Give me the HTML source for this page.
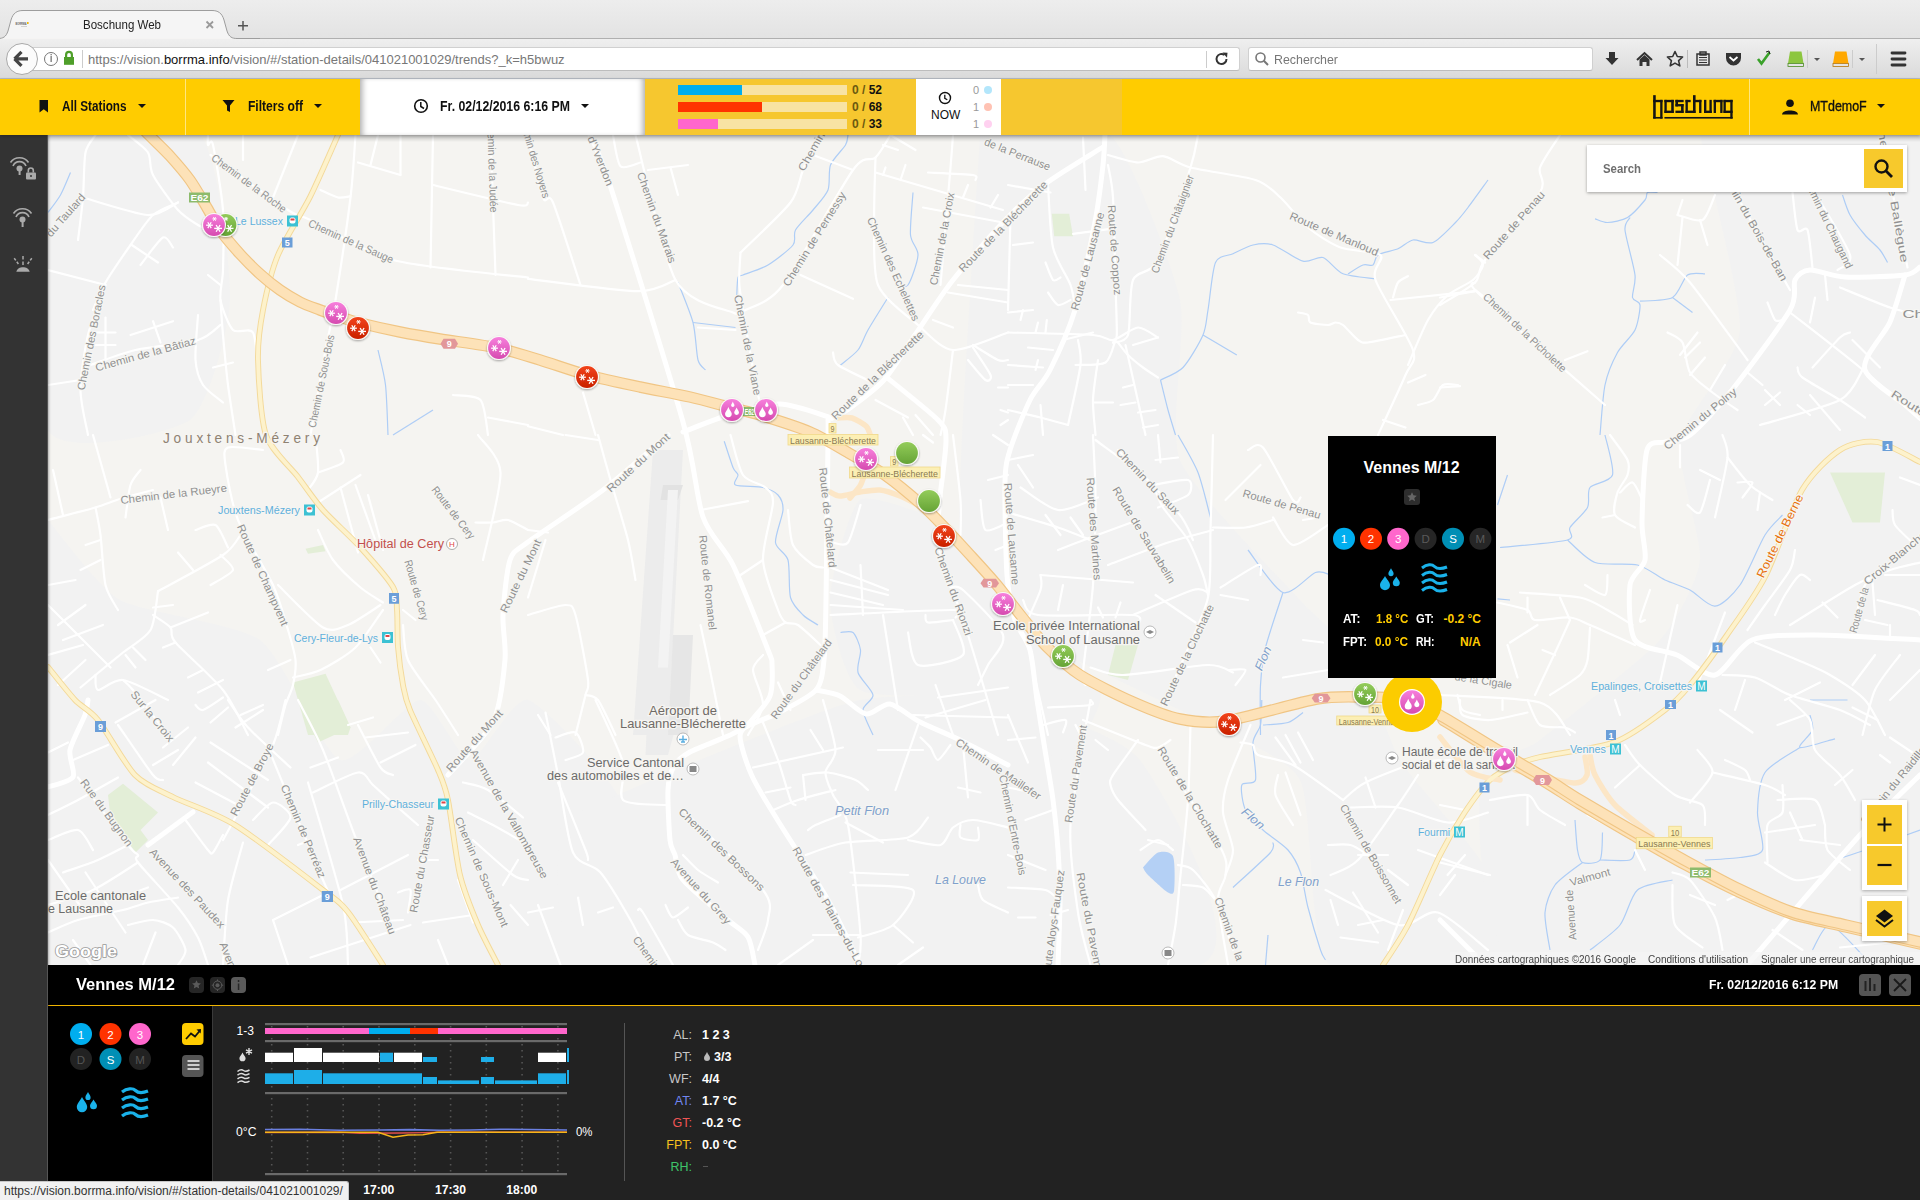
<!DOCTYPE html>
<html><head><meta charset="utf-8"><title>Boschung Web</title>
<style>
*{box-sizing:border-box}
html,body{margin:0;padding:0;width:1920px;height:1200px;overflow:hidden;font-family:"Liberation Sans",sans-serif;background:#f4f3f0;position:relative}
.a{position:absolute}
.t{white-space:nowrap}
</style></head><body>

<!-- ===== TAB STRIP ===== -->
<div class="a" style="left:0;top:0;width:1920px;height:38px;background:linear-gradient(#ededed,#e3e3e3)"></div>
<div class="a" style="left:236px;top:38px;width:1684px;height:1px;background:#b0b0b0"></div>
<svg class="a" style="left:0;top:0" width="260" height="40" viewBox="0 0 260 40">
 <path d="M-2 38.5 C3 38.5 6 37 8 31 L11 20 C13 13 17 10.5 23 10.5 L212 10.5 C218 10.5 222 13 224 20 L227 31 C229 37 232 38.5 237 38.5 L260 38.5" fill="#f5f5f5" stroke="#9d9d9d" stroke-width="1"/>
 <rect x="0" y="39" width="236" height="2" fill="#efefef"/>
 <text x="15.5" y="24.8" font-family="Liberation Sans" font-weight="bold" font-size="4.2" fill="#666" textLength="11" lengthAdjust="spacingAndGlyphs">BORRMA</text><rect x="27" y="22" width="1.6" height="2" fill="#f5b800"/><rect x="21" y="26" width="6" height="0.6" fill="#bbb"/>
 <path d="M206.5 21.5 L213 28 M213 21.5 L206.5 28" stroke="#9a9a9a" stroke-width="1.8"/>
 <path d="M243 21 V30.5 M238 25.8 H248" stroke="#555" stroke-width="1.5"/>
</svg>
<div class="a t" style="left:83px;top:18px;font-size:12px;color:#222;transform-origin:left top;transform:scaleX(0.961);">Boschung Web</div>

<!-- ===== TOOLBAR ===== -->
<div class="a" style="left:0;top:39px;width:1920px;height:39px;background:linear-gradient(#efefef,#dadada);"></div>
<div class="a" style="left:0;top:78px;width:1920px;height:1px;background:#b6bcc4"></div>
<div class="a" style="left:30px;top:47px;width:1210px;height:24px;background:#fff;border:1px solid #d0d0d0;border-bottom-color:#bdbdbd;border-radius:3px"></div>
<div class="a" style="left:1206px;top:51px;width:1px;height:17px;background:#ccc"></div>
<div class="a" style="left:1248px;top:47px;width:345px;height:24px;background:#fff;border:1px solid #d0d0d0;border-bottom-color:#bdbdbd;border-radius:3px"></div>
<!-- back button -->
<div class="a" style="left:6px;top:43px;width:32px;height:32px;border-radius:50%;background:#fbfbfb;border:1px solid #a9a9a9"></div>
<svg class="a" style="left:0;top:38px" width="100" height="40" viewBox="0 38 100 40">
 <path d="M14.5 58.8 L21.5 51.8 M14.5 58.8 L21.5 65.8 M15 58.8 H28" stroke="#444" stroke-width="3.2" fill="none" stroke-linecap="butt"/>
 <circle cx="51" cy="59" r="6.5" fill="none" stroke="#777" stroke-width="1"/>
 <rect x="50.5" y="56" width="1.3" height="6" fill="#777"/><rect x="50.5" y="54" width="1.3" height="1.3" fill="#777"/>
 <path d="M65 54.8 a4 4 0 0 1 8 0 V57 h-2.2 v-2.2 a1.8 1.8 0 0 0 -3.6 0 V57 H65 Z" fill="#4f9f2a"/>
 <rect x="64" y="57" width="10" height="7.8" fill="#4f9f2a"/>
 <rect x="82" y="50" width="1" height="18" fill="#ccc"/>
</svg>
<div class="a t" style="left:88px;top:52px;font-size:13px;color:#777;letter-spacing:0">https://vision.<span style="color:#111">borrma.info</span>/vision/#/station-details/041021001029/trends?_k=h5bwuz</div>
<!-- reload -->
<svg class="a" style="left:1212px;top:50px" width="20" height="18" viewBox="0 0 20 18">
 <path d="M14.5 9 A5 5 0 1 1 12.5 5" fill="none" stroke="#333" stroke-width="2"/>
 <path d="M10.5 2.5 L15.5 2.8 L15 7.8 Z" fill="#333"/>
</svg>
<svg class="a" style="left:1254px;top:51px" width="16" height="16" viewBox="0 0 16 16">
 <circle cx="6.5" cy="6.5" r="4.5" fill="none" stroke="#777" stroke-width="1.6"/><path d="M9.8 9.8 L14 14" stroke="#777" stroke-width="2"/>
</svg>
<div class="a t" style="left:1274px;top:52px;font-size:13px;color:#777;transform-origin:left top;transform:scaleX(0.952);">Rechercher</div>
<!-- toolbar icons -->
<svg class="a" style="left:1596px;top:44px" width="324" height="30" viewBox="1596 44 324 30">
 <path d="M1609 52 h6 v6 h3.5 l-6.5 7 l-6.5 -7 h3.5 z" fill="#333"/>
 <path d="M1637 60 l7.5 -7 l7.5 7" fill="none" stroke="#333" stroke-width="2"/><path d="M1639.5 59.5 l5 -4.5 l5 4.5 v6.5 h-3 v-4 h-4 v4 h-3 z" fill="#333"/>
 <path d="M1675 51.5 l2.3 5 l5.3 .5 l-4 3.6 l1.2 5.3 l-4.8 -2.8 l-4.8 2.8 l1.2 -5.3 l-4 -3.6 l5.3 -.5 z" fill="none" stroke="#333" stroke-width="1.6" stroke-linejoin="round"/>
 <rect x="1687" y="50" width="1" height="18" fill="#bbb"/>
 <path d="M1697 54 h12 v11 h-12 z M1700 52 h6 v3 h-6z" fill="none" stroke="#333" stroke-width="1.5"/>
 <path d="M1699 57.5 h8 M1699 60 h8 M1699 62.5 h8" stroke="#333" stroke-width="1"/>
 <path d="M1726 53 h15 v5 a7.5 7.5 0 0 1 -15 0 z" fill="#333"/><path d="M1729.5 57 l4 3.5 l4 -3.5" stroke="#fff" stroke-width="1.8" fill="none"/>
 <path d="M1758 59 l3.5 4.5 l8 -11" stroke="#3aa12a" stroke-width="2.6" fill="none"/><path d="M1766 52 l3 -1 l1 3" stroke="#222" stroke-width="1" fill="none"/>
 <path d="M1790 51.5 h11.5 l2 12 h-15.5 z" fill="#8cc63f"/><rect x="1788" y="63.5" width="15.5" height="3" fill="#e4e4e4" stroke="#4d8a22" stroke-width="0.8"/>
 <rect x="1807" y="50" width="1" height="18" fill="#ccc"/><path d="M1814 58 l3 3 l3 -3z" fill="#555"/>
 <path d="M1835 51.5 h11.5 l2 12 h-15.5 z" fill="#ffa800"/><rect x="1833" y="63.5" width="15.5" height="3" fill="#e4e4e4" stroke="#b5770c" stroke-width="0.8"/>
 <rect x="1852" y="50" width="1" height="18" fill="#ccc"/><path d="M1859 58 l3 3 l3 -3z" fill="#555"/>
 <rect x="1876" y="44" width="1" height="30" fill="#ccc"/>
 <path d="M1892 53 h13 M1892 59 h13 M1892 65 h13" stroke="#333" stroke-width="2.8" stroke-linecap="round"/>
</svg>

<!-- ===== APP HEADER ===== -->
<div class="a" style="left:0;top:79px;width:1920px;height:56px;background:#ffcc00;box-shadow:0 1px 3px rgba(0,0,0,.25);z-index:5">
 <div class="a" style="left:185px;top:0;width:1px;height:56px;background:#ffe680"></div>
 <div class="a" style="left:1749px;top:0;width:1px;height:56px;background:#ffe680"></div>
 <!-- white date section -->
 <div class="a" style="left:360px;top:0;width:285px;height:56px;background:#fff;box-shadow:inset 6px 0 6px -4px rgba(0,0,0,.35), inset -6px 0 6px -4px rgba(0,0,0,.35)"></div>
 <!-- stats -->
 <div class="a" style="left:645px;top:0;width:477px;height:56px;background:#f6c72f"></div>
 <div class="a" style="left:916px;top:0;width:85px;height:56px;background:#fff"></div>
</div>
<div class="a" style="left:0;top:79px;width:1920px;height:56px;z-index:6">
 <!-- All stations -->
 <svg class="a" style="left:39px;top:21px" width="10" height="13" viewBox="0 0 10 13"><path d="M0.5 0 h8.5 v12.5 l-4.25 -3.2 l-4.25 3.2z" fill="#111"/></svg>
 <div class="a t" style="left:62px;top:19px;font-size:14px;font-weight:bold;color:#111;transform-origin:left top;transform:scaleX(0.838);">All Stations</div>
 <svg class="a" style="left:138px;top:25px" width="10" height="6"><path d="M0 0 h8 l-4 4z" fill="#111"/></svg>
 <svg class="a" style="left:222px;top:20px" width="14" height="14" viewBox="0 0 14 14"><path d="M0.5 1 h12 l-4.5 5.5 v6.5 l-3 -1.5 v-5z" fill="#111"/></svg>
 <div class="a t" style="left:248px;top:19px;font-size:14px;font-weight:bold;color:#111;transform-origin:left top;transform:scaleX(0.862);">Filters off</div>
 <svg class="a" style="left:314px;top:25px" width="10" height="6"><path d="M0 0 h8 l-4 4z" fill="#111"/></svg>
 <!-- date -->
 <svg class="a" style="left:413px;top:19px" width="16" height="16" viewBox="0 0 16 16"><circle cx="8" cy="8" r="6.3" fill="none" stroke="#111" stroke-width="1.6"/><path d="M7.8 4 V8.5 L11 10.5" fill="none" stroke="#111" stroke-width="1.5"/></svg>
 <div class="a t" style="left:440px;top:19px;font-size:14px;font-weight:bold;color:#111;transform-origin:left top;transform:scaleX(0.879);">Fr. 02/12/2016 6:16 PM</div>
 <svg class="a" style="left:581px;top:25px" width="10" height="6"><path d="M0 0 h8 l-4 4z" fill="#111"/></svg>
 <!-- bars -->
 <div class="a" style="left:678px;top:6px;width:169px;height:10px;background:#f8e3a3"><div style="width:64px;height:10px;background:#00aeef"></div></div>
 <div class="a" style="left:678px;top:23px;width:169px;height:10px;background:#f8e3a3"><div style="width:84px;height:10px;background:#ff3300"></div></div>
 <div class="a" style="left:678px;top:40px;width:169px;height:10px;background:#f8e3a3"><div style="width:40px;height:10px;background:#ff66cc"></div></div>
 <div class="a t" style="left:852px;top:3px;font-size:12px;font-weight:bold;color:#111;line-height:16px"><span style="color:#6b5a10">0 /</span> 52</div>
 <div class="a t" style="left:852px;top:20px;font-size:12px;font-weight:bold;color:#111;line-height:16px"><span style="color:#6b5a10">0 /</span> 68</div>
 <div class="a t" style="left:852px;top:37px;font-size:12px;font-weight:bold;color:#111;line-height:16px"><span style="color:#6b5a10">0 /</span> 33</div>
 <!-- NOW -->
 <svg class="a" style="left:938px;top:12px" width="14" height="14" viewBox="0 0 14 14"><circle cx="7" cy="7" r="5.5" fill="none" stroke="#111" stroke-width="1.4"/><path d="M6.8 3.8 V7.3 L9.3 8.8" fill="none" stroke="#111" stroke-width="1.3"/></svg>
 <div class="a t" style="left:931px;top:29px;font-size:12px;color:#111">NOW</div>
 <div class="a t" style="left:973px;top:4px;font-size:11px;color:#999;line-height:14px">0</div>
 <div class="a t" style="left:973px;top:21px;font-size:11px;color:#999;line-height:14px">1</div>
 <div class="a t" style="left:973px;top:38px;font-size:11px;color:#999;line-height:14px">1</div>
 <div class="a" style="left:984px;top:7px;width:8px;height:8px;border-radius:50%;background:#b3e6fb"></div>
 <div class="a" style="left:984px;top:24px;width:8px;height:8px;border-radius:50%;background:#ffc2b3"></div>
 <div class="a" style="left:984px;top:41px;width:8px;height:8px;border-radius:50%;background:#ffd1f0"></div>
 <!-- logo -->
 <svg class="a" style="left:1648px;top:11px" width="90" height="34" viewBox="1648 90 90 34"><g fill="#141414"><rect x="1653.16" y="95.16" width="2.58" height="23.44"/><rect x="1653.16" y="99.85" width="9.38" height="2.34"/><rect x="1660.19" y="99.85" width="2.34" height="18.75"/><rect x="1653.16" y="116.96" width="9.38" height="1.64"/><rect x="1664.41" y="99.85" width="2.34" height="13.13"/><rect x="1671.21" y="99.85" width="2.58" height="13.13"/><rect x="1664.41" y="99.85" width="9.38" height="2.34"/><rect x="1664.41" y="110.63" width="9.38" height="2.34"/><rect x="1675.43" y="99.85" width="8.20" height="2.34"/><rect x="1675.43" y="99.85" width="2.58" height="6.56"/><rect x="1675.43" y="104.06" width="8.20" height="2.34"/><rect x="1681.05" y="104.06" width="2.58" height="8.91"/><rect x="1675.43" y="110.63" width="8.20" height="2.34"/><rect x="1685.51" y="99.85" width="5.16" height="2.34"/><rect x="1685.51" y="99.85" width="2.34" height="13.13"/><rect x="1685.51" y="110.63" width="10.08" height="2.34"/><rect x="1693.01" y="95.16" width="2.58" height="17.82"/><rect x="1693.01" y="99.85" width="8.44" height="2.34"/><rect x="1699.10" y="99.85" width="2.34" height="13.13"/><rect x="1704.02" y="99.85" width="2.34" height="13.13"/><rect x="1704.02" y="110.63" width="7.74" height="2.34"/><rect x="1709.42" y="99.85" width="2.34" height="13.13"/><rect x="1713.64" y="99.85" width="2.34" height="13.13"/><rect x="1713.64" y="99.85" width="8.91" height="2.34"/><rect x="1720.20" y="99.85" width="2.34" height="13.13"/><rect x="1723.48" y="99.85" width="9.14" height="2.34"/><rect x="1723.48" y="99.85" width="2.34" height="13.13"/><rect x="1723.48" y="110.63" width="9.14" height="2.34"/><rect x="1730.28" y="99.85" width="2.34" height="18.75"/><rect x="1664.41" y="116.96" width="68.21" height="1.64"/></g></svg>
 <!-- user -->
 <svg class="a" style="left:1781px;top:20px" width="18" height="16" viewBox="0 0 18 16"><circle cx="9" cy="4.2" r="3.8" fill="#111"/><path d="M1 15.5 C1 10 17 10 17 15.5 Z" fill="#111"/></svg>
 <div class="a t" style="left:1810px;top:19px;font-size:14px;color:#111;-webkit-text-stroke:0.35px #111;transform-origin:left top;transform:scaleX(0.889);">MTdemoF</div>
 <svg class="a" style="left:1877px;top:25px" width="10" height="6"><path d="M0 0 h8 l-4 4z" fill="#111"/></svg>
</div>

<!-- ===== MAP ===== -->
<div id="map" class="a" style="left:48px;top:135px;width:1872px;height:830px;background:#f4f3f0;overflow:hidden">
<svg width="1872" height="830" viewBox="48 135 1872 830" style="position:absolute;left:0;top:0">
<rect x="48" y="135" width="1872" height="830" fill="#f5f4f1"/>
<path d="M48.0 135.0 C63.2 135.0 181.8 118.5 200.0 135.0 C218.2 151.5 231.0 271.5 230.0 300.0 C229.0 328.5 208.2 407.0 190.0 420.0 C171.8 433.0 62.2 458.5 48.0 430.0 C33.8 401.5 48.0 164.5 48.0 135.0Z" fill="#f2f2f2"/>
<path d="M48.0 520.0 C55.2 528.0 98.8 588.0 120.0 600.0 C141.2 612.0 238.0 624.0 260.0 640.0 C282.0 656.0 324.0 754.0 340.0 760.0 C356.0 766.0 407.0 700.0 420.0 700.0 C433.0 700.0 459.2 760.0 470.0 760.0 C480.8 760.0 513.0 696.0 528.0 700.0 C543.0 704.0 608.8 773.5 620.0 800.0 C631.2 826.5 697.2 948.5 640.0 965.0 C582.8 981.5 107.2 1009.5 48.0 965.0 C-11.2 920.5 48.0 564.5 48.0 520.0Z" fill="#f2f2f2"/>
<path d="M560.0 820.0 C574.0 814.0 670.0 772.0 700.0 760.0 C730.0 748.0 830.0 706.0 860.0 700.0 C890.0 694.0 972.0 694.0 1000.0 700.0 C1028.0 706.0 1120.0 733.5 1140.0 760.0 C1160.0 786.5 1254.0 944.5 1200.0 965.0 C1146.0 985.5 664.0 979.5 600.0 965.0 C536.0 950.5 564.0 834.5 560.0 820.0Z" fill="#f2f2f2"/>
<path d="M980.0 135.0 C993.0 135.0 1090.0 118.5 1110.0 135.0 C1130.0 151.5 1173.0 267.5 1180.0 300.0 C1187.0 332.5 1168.0 430.0 1180.0 460.0 C1192.0 490.0 1282.0 580.0 1300.0 600.0 C1318.0 620.0 1350.0 644.0 1360.0 660.0 C1370.0 676.0 1388.0 740.0 1400.0 760.0 C1412.0 780.0 1468.0 839.5 1480.0 860.0 C1492.0 880.5 1535.0 954.5 1520.0 965.0 C1505.0 975.5 1352.0 983.5 1330.0 965.0 C1308.0 946.5 1313.0 804.5 1300.0 780.0 C1287.0 755.5 1226.0 734.0 1200.0 720.0 C1174.0 706.0 1064.0 656.0 1040.0 640.0 C1016.0 624.0 966.0 610.5 960.0 560.0 C954.0 509.5 978.0 177.5 980.0 135.0Z" fill="#f2f2f2"/>
<path d="M1700.0 135.0 C1722.0 135.0 1898.0 52.0 1920.0 135.0 C1942.0 218.0 1960.0 882.0 1920.0 965.0 C1880.0 1048.0 1564.0 983.5 1520.0 965.0 C1476.0 946.5 1478.0 802.5 1480.0 780.0 C1482.0 757.5 1522.0 754.0 1540.0 740.0 C1558.0 726.0 1644.0 658.0 1660.0 640.0 C1676.0 622.0 1698.0 580.0 1700.0 560.0 C1702.0 540.0 1676.0 463.0 1680.0 440.0 C1684.0 417.0 1738.0 360.5 1740.0 330.0 C1742.0 299.5 1704.0 154.5 1700.0 135.0Z" fill="#f2f2f2"/>
<path d="M940.0 520.0 C946.0 526.0 984.0 563.0 1000.0 580.0 C1016.0 597.0 1094.0 672.0 1100.0 690.0 C1106.0 708.0 1071.0 759.0 1060.0 760.0 C1049.0 761.0 1010.0 707.0 990.0 700.0 C970.0 693.0 876.0 700.0 860.0 690.0 C844.0 680.0 830.0 619.0 830.0 600.0 C830.0 581.0 849.0 508.0 860.0 500.0 C871.0 492.0 932.0 518.0 940.0 520.0Z" fill="#f2f2f2"/>
<path d="M293.0 682.5 L325.5 673.8 L350.5 727.5 L348.0 735.0 L308.0 735.0Z" fill="#e3eed7"/>
<path d="M298.0 700.0 L338.0 700.0 L350.5 727.5 L318.0 742.5 L305.5 717.5Z" fill="#e3eed7"/>
<path d="M108.0 795.0 L123.0 783.8 L158.0 812.5 L140.5 830.0 L148.0 840.0 L135.5 852.5 L110.5 817.5Z" fill="#e3eed7"/>
<path d="M1108.0 675.0 L1115.5 645.0 L1138.0 645.0 L1128.0 680.0Z" fill="#e3eed7"/>
<path d="M1830.0 472.5 L1885.0 472.5 L1880.0 522.5 L1852.5 522.5Z" fill="#e3eed7"/>
<path d="M305.5 548.8 L323.0 545.0 L325.5 551.2 L308.0 553.8Z" fill="#e3eed7"/>
<path d="M1051.8 213.8 L1069.2 213.8 L1073.0 236.2 L1054.2 236.2Z" fill="#e3eed7"/>
<path d="M653.0 450.0 L683.0 450.0 L668.0 735.0 L633.0 735.0Z" fill="#ececec"/>
<path d="M648.0 700.0 L683.0 700.0 L668.0 755.0 L645.5 755.0Z" fill="#ececec"/>
<path d="M663.0 485.0 L683.0 485.0 L678.0 500.0 L660.5 500.0Z" fill="#e2e2e2"/>
<path d="M668.0 490.0 L678.0 490.0 L668.0 667.5 L658.0 667.5Z" fill="#f3f3f3"/>
<path d="M673.0 635.0 L693.0 635.0 L688.0 735.0 L668.0 735.0Z" fill="#e6e6e6"/>
<path d="M1143.0 867.5 C1145.0 865.5 1154.0 854.0 1158.0 852.5 C1162.0 851.0 1170.8 851.2 1173.0 856.2 C1175.2 861.2 1174.9 885.2 1174.2 890.0 C1173.6 894.8 1171.5 894.5 1168.0 892.5 C1164.5 890.5 1151.3 878.3 1148.0 875.0 C1144.7 871.7 1143.7 868.5 1143.0 867.5Z" fill="#b4d0f5"/>
<path d="M70.5 172.5 C69.2 175.5 63.5 189.7 60.5 195.0 C57.5 200.3 49.7 210.2 48.0 212.5" fill="none" stroke="#aecdf6" stroke-width="1.2"/>
<path d="M378.0 350.0 C379.0 354.7 384.2 373.7 385.5 385.0 C386.8 396.3 387.7 428.3 388.0 435.0" fill="none" stroke="#aecdf6" stroke-width="1.2"/>
<path d="M393.0 435.0 L433.0 410.0" fill="none" stroke="#aecdf6" stroke-width="1.2"/>
<path d="M848.0 135.0 C847.7 136.3 847.8 141.0 845.5 145.0 C843.2 149.0 832.8 159.0 830.5 165.0 C828.2 171.0 830.3 184.0 828.0 190.0 C825.7 196.0 817.3 204.7 813.0 210.0 C808.7 215.3 798.2 225.3 795.5 230.0 C792.8 234.7 796.7 240.3 793.0 245.0 C789.3 249.7 774.7 261.0 768.0 265.0 C761.3 269.0 747.0 273.3 743.0 275.0 C739.0 276.7 738.8 274.8 738.0 277.5 C737.2 280.2 736.9 292.7 736.8 295.0" fill="none" stroke="#aecdf6" stroke-width="1.2"/>
<path d="M678.0 282.5 C680.0 287.8 690.3 312.2 693.0 322.5 C695.7 332.8 696.3 353.7 698.0 360.0 C699.7 366.3 704.5 368.7 705.5 370.0" fill="none" stroke="#aecdf6" stroke-width="1.2"/>
<path d="M693.0 322.5 L735.5 327.5" fill="none" stroke="#aecdf6" stroke-width="1.2"/>
<path d="M913.0 192.5 C912.7 198.2 909.8 226.7 910.5 235.0 C911.2 243.3 918.3 248.3 918.0 255.0 C917.7 261.7 911.0 281.0 908.0 285.0 C905.0 289.0 897.2 285.0 895.5 285.0" fill="none" stroke="#aecdf6" stroke-width="1.2"/>
<path d="M888.0 297.5 C885.3 301.8 872.0 323.0 868.0 330.0 C864.0 337.0 861.7 345.3 858.0 350.0 C854.3 354.7 842.8 363.0 840.5 365.0" fill="none" stroke="#aecdf6" stroke-width="1.2"/>
<path d="M1160.5 380.0 C1163.5 378.3 1177.3 373.5 1183.0 367.5 C1188.7 361.5 1199.7 342.7 1203.0 335.0 C1206.3 327.3 1206.3 319.7 1208.0 310.0 C1209.7 300.3 1212.2 270.0 1215.5 262.5 C1218.8 255.0 1228.0 256.1 1233.0 253.8 C1238.0 251.4 1247.7 246.2 1253.0 245.0 C1258.3 243.8 1266.3 242.8 1273.0 245.0 C1279.7 247.2 1296.3 259.6 1303.0 261.2 C1309.7 262.9 1317.7 255.8 1323.0 257.5 C1328.3 259.2 1336.0 270.9 1343.0 273.8 C1350.0 276.6 1371.2 278.1 1375.5 278.8" fill="none" stroke="#aecdf6" stroke-width="1.2"/>
<path d="M1203.0 335.0 L1236.8 355.0" fill="none" stroke="#aecdf6" stroke-width="1.2"/>
<path d="M1160.5 380.0 C1161.5 384.0 1166.0 402.7 1168.0 410.0 C1170.0 417.3 1174.5 431.7 1175.5 435.0" fill="none" stroke="#aecdf6" stroke-width="1.2"/>
<path d="M1348.0 273.8 C1350.0 272.6 1359.7 266.2 1363.0 265.0 C1366.3 263.8 1371.0 266.3 1373.0 265.0 C1375.0 263.7 1374.7 257.2 1378.0 255.0 C1381.3 252.8 1393.3 250.8 1398.0 248.8 C1402.7 246.8 1408.3 240.8 1413.0 240.0 C1417.7 239.2 1427.3 244.8 1433.0 242.5 C1438.7 240.2 1450.8 227.2 1455.5 222.5 C1460.2 217.8 1463.7 213.2 1468.0 207.5 C1472.3 201.8 1485.3 183.7 1488.0 180.0" fill="none" stroke="#aecdf6" stroke-width="1.2"/>
<path d="M1595.0 218.8 C1596.7 219.2 1603.2 222.7 1607.5 222.5 C1611.8 222.3 1622.5 220.5 1627.5 217.5 C1632.5 214.5 1642.3 203.3 1645.0 200.0 C1647.7 196.7 1645.8 193.5 1647.5 192.5 C1649.2 191.5 1656.2 192.5 1657.5 192.5" fill="none" stroke="#aecdf6" stroke-width="1.2"/>
<path d="M1630.0 217.5 C1629.3 219.2 1624.3 222.3 1625.0 230.0 C1625.7 237.7 1634.0 266.0 1635.0 275.0 C1636.0 284.0 1631.8 293.5 1632.5 297.5 C1633.2 301.5 1639.7 300.7 1640.0 305.0 C1640.3 309.3 1638.0 323.7 1635.0 330.0 C1632.0 336.3 1621.5 345.2 1617.5 352.5 C1613.5 359.8 1607.3 374.0 1605.0 385.0 C1602.7 396.0 1600.7 428.3 1600.0 435.0" fill="none" stroke="#aecdf6" stroke-width="1.2"/>
<path d="M1640.0 301.2 C1644.3 300.8 1666.2 301.0 1672.5 297.5 C1678.8 294.0 1683.2 278.2 1687.5 275.0 C1691.8 271.8 1702.7 273.9 1705.0 273.8" fill="none" stroke="#aecdf6" stroke-width="1.2"/>
<path d="M1672.5 297.5 L1692.5 312.5" fill="none" stroke="#aecdf6" stroke-width="1.2"/>
<path d="M1842.5 195.0 C1843.5 197.7 1847.0 209.7 1850.0 215.0 C1853.0 220.3 1861.0 230.3 1865.0 235.0 C1869.0 239.7 1877.0 246.3 1880.0 250.0 C1883.0 253.7 1886.5 260.8 1887.5 262.5" fill="none" stroke="#aecdf6" stroke-width="1.2"/>
<path d="M724.2 441.2 C725.4 444.8 731.2 463.0 733.0 467.5 C734.8 472.0 737.7 472.7 738.0 475.0 C738.3 477.3 732.2 483.3 735.5 485.0 C738.8 486.7 757.3 486.2 763.0 487.5 C768.7 488.8 775.3 492.0 778.0 495.0 C780.7 498.0 783.3 503.7 783.0 510.0 C782.7 516.3 774.8 535.8 775.5 542.5 C776.2 549.2 786.0 552.7 788.0 560.0 C790.0 567.3 788.5 590.2 790.5 597.5 C792.5 604.8 799.3 611.3 803.0 615.0 C806.7 618.7 816.0 623.7 818.0 625.0" fill="none" stroke="#aecdf6" stroke-width="1.2"/>
<path d="M840.5 632.5 C842.2 632.5 850.3 630.2 853.0 632.5 C855.7 634.8 859.8 644.7 860.5 650.0 C861.2 655.3 856.3 666.5 858.0 672.5 C859.7 678.5 872.3 690.0 873.0 695.0 C873.7 700.0 863.0 704.7 863.0 710.0 C863.0 715.3 871.7 731.7 873.0 735.0" fill="none" stroke="#aecdf6" stroke-width="1.2"/>
<path d="M1178.0 435.0 C1180.7 440.0 1193.7 461.5 1198.0 472.5 C1202.3 483.5 1208.8 511.5 1210.5 517.5" fill="none" stroke="#aecdf6" stroke-width="1.2"/>
<path d="M1248.0 550.0 C1252.7 555.7 1274.0 589.5 1283.0 592.5 C1292.0 595.5 1309.2 574.8 1315.5 572.5 C1321.8 570.2 1328.5 574.7 1330.5 575.0" fill="none" stroke="#aecdf6" stroke-width="1.2"/>
<path d="M1283.0 592.5 C1280.7 599.8 1268.5 635.2 1265.5 647.5 C1262.5 659.8 1261.2 673.3 1260.5 685.0 C1259.8 696.7 1260.5 728.3 1260.5 735.0" fill="none" stroke="#aecdf6" stroke-width="1.2"/>
<path d="M1507.5 475.0 L1497.5 505.0" fill="none" stroke="#aecdf6" stroke-width="1.2"/>
<path d="M1605.0 435.0 C1606.0 440.3 1614.5 468.0 1612.5 475.0 C1610.5 482.0 1593.3 483.2 1590.0 487.5 C1586.7 491.8 1590.2 502.2 1587.5 507.5 C1584.8 512.8 1572.7 523.2 1570.0 527.5 C1567.3 531.8 1576.8 537.3 1567.5 540.0 C1558.2 542.7 1509.0 546.5 1500.0 547.5" fill="none" stroke="#aecdf6" stroke-width="1.2"/>
<path d="M1567.5 540.0 C1571.2 543.0 1585.7 559.2 1595.0 562.5 C1604.3 565.8 1628.2 562.7 1637.5 565.0 C1646.8 567.3 1658.0 576.7 1665.0 580.0 C1672.0 583.3 1683.3 586.5 1690.0 590.0 C1696.7 593.5 1708.3 606.9 1715.0 606.2 C1721.7 605.6 1733.3 594.5 1740.0 585.0 C1746.7 575.5 1759.3 544.3 1765.0 535.0 C1770.7 525.7 1780.2 517.7 1782.5 515.0" fill="none" stroke="#aecdf6" stroke-width="1.2"/>
<path d="M1497.5 598.8 L1510.0 600.0" fill="none" stroke="#aecdf6" stroke-width="1.2"/>
<path d="M1261.8 700.0 C1261.6 703.3 1261.7 719.3 1260.5 725.0 C1259.3 730.7 1253.7 735.2 1253.0 742.5 C1252.3 749.8 1257.0 774.3 1255.5 780.0 C1254.0 785.7 1243.1 781.0 1241.8 785.0 C1240.4 789.0 1242.7 804.0 1245.5 810.0 C1248.3 816.0 1257.3 824.7 1263.0 830.0 C1268.7 835.3 1283.0 844.3 1288.0 850.0 C1293.0 855.7 1297.8 864.8 1300.5 872.5 C1303.2 880.2 1305.3 897.2 1308.0 907.5 C1310.7 917.8 1318.2 943.0 1320.5 950.0 C1322.8 957.0 1324.8 958.7 1325.5 960.0" fill="none" stroke="#aecdf6" stroke-width="1.2"/>
<path d="M1273.0 842.5 C1272.7 843.8 1275.8 846.5 1270.5 852.5 C1265.2 858.5 1238.0 882.8 1233.0 887.5" fill="none" stroke="#aecdf6" stroke-width="1.2"/>
<path d="M1263.0 725.0 C1266.3 724.7 1282.7 724.2 1288.0 722.5 C1293.3 720.8 1301.0 713.8 1303.0 712.5" fill="none" stroke="#aecdf6" stroke-width="1.2"/>
<path d="M1268.0 935.0 L1265.5 965.0" fill="none" stroke="#aecdf6" stroke-width="1.2"/>
<path d="M1575.0 820.0 C1575.3 824.0 1576.5 844.3 1577.5 850.0 C1578.5 855.7 1579.5 861.2 1582.5 862.5 C1585.5 863.8 1597.3 864.0 1600.0 860.0 C1602.7 856.0 1602.2 836.2 1602.5 832.5" fill="none" stroke="#aecdf6" stroke-width="1.2"/>
<path d="M1582.5 862.5 C1578.8 865.5 1560.0 878.3 1555.0 885.0 C1550.0 891.7 1545.7 903.8 1545.0 912.5 C1544.3 921.2 1549.3 945.0 1550.0 950.0" fill="none" stroke="#aecdf6" stroke-width="1.2"/>
<path d="M1600.0 860.0 C1604.0 860.0 1625.3 861.3 1630.0 860.0 C1634.7 858.7 1634.3 851.3 1635.0 850.0" fill="none" stroke="#aecdf6" stroke-width="1.2"/>
<path d="M1590.0 950.0 C1594.0 946.7 1613.7 933.0 1620.0 925.0 C1626.3 917.0 1630.5 896.0 1637.5 890.0 C1644.5 884.0 1667.8 881.3 1672.5 880.0" fill="none" stroke="#aecdf6" stroke-width="1.2"/>
<path d="M1810.0 700.0 C1812.0 700.0 1820.0 700.0 1825.0 700.0 C1830.0 700.0 1844.5 700.0 1847.5 700.0" fill="none" stroke="#aecdf6" stroke-width="1.2"/>
<path d="M1810.0 715.0 C1810.3 717.0 1813.8 725.7 1812.5 730.0 C1811.2 734.3 1797.0 746.3 1800.0 747.5 C1803.0 748.7 1830.3 739.9 1835.0 738.8" fill="none" stroke="#aecdf6" stroke-width="1.2"/>
<path d="M1800.0 747.5 C1795.3 750.8 1770.7 763.8 1765.0 772.5 C1759.3 781.2 1757.8 802.2 1757.5 812.5 C1757.2 822.8 1764.8 844.0 1762.5 850.0 C1760.2 856.0 1747.7 856.2 1740.0 857.5 C1732.3 858.8 1709.7 859.7 1705.0 860.0" fill="none" stroke="#aecdf6" stroke-width="1.2"/>
<path d="M1842.5 857.5 C1845.5 856.5 1854.7 853.7 1865.0 850.0 C1875.3 846.3 1912.7 832.7 1920.0 830.0" fill="none" stroke="#aecdf6" stroke-width="1.2"/>
<path d="M1812.5 950.0 C1814.8 946.7 1823.3 924.3 1830.0 925.0 C1836.7 925.7 1858.2 951.0 1862.5 955.0" fill="none" stroke="#aecdf6" stroke-width="1.2"/>
<path d="M95.5 135.0 C94.2 137.3 87.2 144.2 85.5 152.5 C83.8 160.8 84.0 185.8 83.0 197.5 C82.0 209.2 78.7 234.3 78.0 240.0" fill="none" stroke="#ffffff" stroke-width="2.2" stroke-linecap="round" stroke-linejoin="round"/>
<path d="M83.0 197.5 C91.7 199.8 135.3 214.3 148.0 215.0 C160.7 215.7 174.0 204.2 178.0 202.5" fill="none" stroke="#ffffff" stroke-width="2.2" stroke-linecap="round" stroke-linejoin="round"/>
<path d="M128.0 135.0 C130.7 137.3 144.7 147.2 148.0 152.5 C151.3 157.8 149.0 167.3 153.0 175.0 C157.0 182.7 172.0 203.3 178.0 210.0 C184.0 216.7 193.7 222.3 198.0 225.0 C202.3 227.7 208.8 229.3 210.5 230.0" fill="none" stroke="#ffffff" stroke-width="2.2" stroke-linecap="round" stroke-linejoin="round"/>
<path d="M48.0 270.0 L105.5 285.0" fill="none" stroke="#ffffff" stroke-width="2.2" stroke-linecap="round" stroke-linejoin="round"/>
<path d="M178.0 202.5 C174.7 204.2 159.3 209.3 153.0 215.0 C146.7 220.7 136.8 236.0 130.5 245.0 C124.2 254.0 110.5 273.8 105.5 282.5 C100.5 291.2 94.7 306.3 93.0 310.0" fill="none" stroke="#ffffff" stroke-width="2.2" stroke-linecap="round" stroke-linejoin="round"/>
<path d="M105.5 285.0 C103.2 291.7 91.3 321.0 88.0 335.0 C84.7 349.0 80.5 376.7 80.5 390.0 C80.5 403.3 87.0 429.0 88.0 435.0" fill="none" stroke="#ffffff" stroke-width="2.2" stroke-linecap="round" stroke-linejoin="round"/>
<path d="M131.8 245.0 L158.0 262.5" fill="none" stroke="#ffffff" stroke-width="2.2" stroke-linecap="round" stroke-linejoin="round"/>
<path d="M140.5 265.0 C143.5 261.3 158.7 239.8 163.0 237.5 C167.3 235.2 171.7 246.2 173.0 247.5" fill="none" stroke="#ffffff" stroke-width="2.2" stroke-linecap="round" stroke-linejoin="round"/>
<path d="M208.0 135.0 C208.0 136.3 207.3 143.7 208.0 145.0 C208.7 146.3 211.0 136.3 213.0 145.0 C215.0 153.7 221.7 193.3 223.0 210.0 C224.3 226.7 223.3 258.0 223.0 270.0 C222.7 282.0 219.2 292.0 220.5 300.0 C221.8 308.0 228.7 325.7 233.0 330.0 C237.3 334.3 249.7 326.8 253.0 332.5 C256.3 338.2 257.3 367.2 258.0 372.5" fill="none" stroke="#ffffff" stroke-width="2.2" stroke-linecap="round" stroke-linejoin="round"/>
<path d="M220.5 300.0 C220.8 304.7 222.0 323.7 223.0 335.0 C224.0 346.3 226.3 371.7 228.0 385.0 C229.7 398.3 234.5 428.3 235.5 435.0" fill="none" stroke="#ffffff" stroke-width="2.2" stroke-linecap="round" stroke-linejoin="round"/>
<path d="M198.0 315.0 C197.7 321.0 194.8 350.7 195.5 360.0 C196.2 369.3 199.3 379.3 203.0 385.0 C206.7 390.7 220.3 400.2 223.0 402.5" fill="none" stroke="#ffffff" stroke-width="2.2" stroke-linecap="round" stroke-linejoin="round"/>
<path d="M90.5 365.0 C96.5 363.0 121.2 353.3 135.5 350.0 C149.8 346.7 186.7 343.3 198.0 340.0 C209.3 336.7 217.5 327.0 220.5 325.0" fill="none" stroke="#ffffff" stroke-width="2.2" stroke-linecap="round" stroke-linejoin="round"/>
<path d="M130.5 335.0 L173.0 321.2" fill="none" stroke="#ffffff" stroke-width="2.2" stroke-linecap="round" stroke-linejoin="round"/>
<path d="M153.0 321.2 L160.5 342.5" fill="none" stroke="#ffffff" stroke-width="2.2" stroke-linecap="round" stroke-linejoin="round"/>
<path d="M93.0 332.5 L115.5 332.5" fill="none" stroke="#ffffff" stroke-width="2.2" stroke-linecap="round" stroke-linejoin="round"/>
<path d="M93.0 345.0 L115.5 345.0" fill="none" stroke="#ffffff" stroke-width="2.2" stroke-linecap="round" stroke-linejoin="round"/>
<path d="M105.5 317.5 L105.5 360.0" fill="none" stroke="#ffffff" stroke-width="2.2" stroke-linecap="round" stroke-linejoin="round"/>
<path d="M48.0 385.0 L80.5 380.0" fill="none" stroke="#ffffff" stroke-width="2.2" stroke-linecap="round" stroke-linejoin="round"/>
<path d="M298.0 135.0 L273.0 197.5" fill="none" stroke="#ffffff" stroke-width="2.2" stroke-linecap="round" stroke-linejoin="round"/>
<path d="M210.5 155.0 C220.8 162.3 274.7 201.3 288.0 210.0 C301.3 218.7 296.5 213.3 310.5 220.0 C324.5 226.7 364.0 252.3 393.0 260.0 C422.0 267.7 510.0 275.2 528.0 277.5" fill="none" stroke="#ffffff" stroke-width="2.2" stroke-linecap="round" stroke-linejoin="round"/>
<path d="M355.5 135.0 C354.8 143.3 353.2 175.5 350.5 197.5 C347.8 219.5 338.8 279.7 335.5 300.0 C332.2 320.3 328.8 332.0 325.5 350.0 C322.2 368.0 312.5 423.7 310.5 435.0" fill="none" stroke="#ffffff" stroke-width="2.2" stroke-linecap="round" stroke-linejoin="round"/>
<path d="M358.0 162.5 L400.5 175.0" fill="none" stroke="#ffffff" stroke-width="2.2" stroke-linecap="round" stroke-linejoin="round"/>
<path d="M400.5 135.0 L400.5 175.0" fill="none" stroke="#ffffff" stroke-width="2.2" stroke-linecap="round" stroke-linejoin="round"/>
<path d="M378.0 135.0 L370.5 165.0" fill="none" stroke="#ffffff" stroke-width="2.2" stroke-linecap="round" stroke-linejoin="round"/>
<path d="M320.5 190.0 C322.8 191.0 334.0 196.7 338.0 197.5 C342.0 198.3 348.8 196.4 350.5 196.2" fill="none" stroke="#ffffff" stroke-width="2.2" stroke-linecap="round" stroke-linejoin="round"/>
<path d="M433.0 135.0 L430.5 267.5" fill="none" stroke="#ffffff" stroke-width="2.2" stroke-linecap="round" stroke-linejoin="round"/>
<path d="M433.0 185.0 C444.3 187.7 505.3 202.7 518.0 205.0 C530.7 207.3 526.7 202.8 528.0 202.5" fill="none" stroke="#ffffff" stroke-width="2.2" stroke-linecap="round" stroke-linejoin="round"/>
<path d="M490.5 135.0 L495.5 275.0" fill="none" stroke="#ffffff" stroke-width="2.2" stroke-linecap="round" stroke-linejoin="round"/>
<path d="M243.0 135.0 L243.0 160.0" fill="none" stroke="#ffffff" stroke-width="2.2" stroke-linecap="round" stroke-linejoin="round"/>
<path d="M453.0 395.0 C456.7 395.7 475.8 394.7 480.5 400.0 C485.2 405.3 487.0 430.3 488.0 435.0" fill="none" stroke="#ffffff" stroke-width="2.2" stroke-linecap="round" stroke-linejoin="round"/>
<path d="M488.0 417.5 L528.0 425.0" fill="none" stroke="#ffffff" stroke-width="2.2" stroke-linecap="round" stroke-linejoin="round"/>
<path d="M208.0 275.0 L220.5 285.0" fill="none" stroke="#ffffff" stroke-width="2.2" stroke-linecap="round" stroke-linejoin="round"/>
<path d="M213.0 367.5 L233.0 362.5" fill="none" stroke="#ffffff" stroke-width="2.2" stroke-linecap="round" stroke-linejoin="round"/>
<path d="M528.0 135.0 C530.0 143.3 539.7 188.5 543.0 197.5 C546.3 206.5 548.0 190.8 553.0 202.5 C558.0 214.2 576.8 274.0 580.5 285.0" fill="none" stroke="#ffffff" stroke-width="2.2" stroke-linecap="round" stroke-linejoin="round"/>
<path d="M528.0 278.8 C542.7 280.4 618.3 291.1 638.0 291.2 C657.7 291.4 670.5 281.5 675.5 280.0" fill="none" stroke="#ffffff" stroke-width="2.2" stroke-linecap="round" stroke-linejoin="round"/>
<path d="M613.0 135.0 C614.0 139.2 616.8 162.6 620.5 166.2 C624.2 169.9 637.8 163.0 640.5 162.5" fill="none" stroke="#ffffff" stroke-width="2.2" stroke-linecap="round" stroke-linejoin="round"/>
<path d="M635.5 135.0 C640.8 154.3 662.5 256.3 675.5 280.0 C688.5 303.7 723.7 308.5 733.0 312.5 C742.3 316.5 738.8 313.7 745.5 310.0 C752.2 306.3 768.7 303.7 783.0 285.0 C797.3 266.3 840.7 187.0 853.0 170.0 C865.3 153.0 870.5 162.2 875.5 157.5 C880.5 152.8 888.5 138.0 890.5 135.0" fill="none" stroke="#ffffff" stroke-width="2.2" stroke-linecap="round" stroke-linejoin="round"/>
<path d="M740.5 252.5 C747.2 245.8 782.2 213.5 790.5 202.5 C798.8 191.5 799.3 179.0 803.0 170.0 C806.7 161.0 816.0 139.7 818.0 135.0" fill="none" stroke="#ffffff" stroke-width="2.2" stroke-linecap="round" stroke-linejoin="round"/>
<path d="M648.0 170.0 L688.0 165.0" fill="none" stroke="#ffffff" stroke-width="2.2" stroke-linecap="round" stroke-linejoin="round"/>
<path d="M670.5 167.5 L678.0 195.0" fill="none" stroke="#ffffff" stroke-width="2.2" stroke-linecap="round" stroke-linejoin="round"/>
<path d="M740.5 252.5 C740.3 256.5 738.9 274.8 739.2 282.5 C739.6 290.2 740.5 295.0 743.0 310.0 C745.5 325.0 755.0 381.7 758.0 395.0 C761.0 408.3 764.5 408.0 765.5 410.0" fill="none" stroke="#ffffff" stroke-width="2.2" stroke-linecap="round" stroke-linejoin="round"/>
<path d="M800.5 275.0 L853.0 298.8" fill="none" stroke="#ffffff" stroke-width="2.2" stroke-linecap="round" stroke-linejoin="round"/>
<path d="M698.0 327.5 L735.5 330.0" fill="none" stroke="#ffffff" stroke-width="2.2" stroke-linecap="round" stroke-linejoin="round"/>
<path d="M813.0 155.0 L853.0 170.0" fill="none" stroke="#ffffff" stroke-width="2.2" stroke-linecap="round" stroke-linejoin="round"/>
<path d="M875.5 157.5 C875.3 165.5 873.9 200.5 874.2 217.5 C874.6 234.5 872.2 270.7 878.0 285.0 C883.8 299.3 908.0 316.3 918.0 325.0 C928.0 333.7 941.0 349.0 953.0 350.0 C965.0 351.0 1000.7 334.8 1008.0 332.5" fill="none" stroke="#ffffff" stroke-width="2.2" stroke-linecap="round" stroke-linejoin="round"/>
<path d="M875.5 172.5 L1003.0 210.0" fill="none" stroke="#ffffff" stroke-width="2.2" stroke-linecap="round" stroke-linejoin="round"/>
<path d="M885.5 167.5 L883.0 175.0" fill="none" stroke="#ffffff" stroke-width="2.2" stroke-linecap="round" stroke-linejoin="round"/>
<path d="M905.5 165.0 L900.5 180.0" fill="none" stroke="#ffffff" stroke-width="2.2" stroke-linecap="round" stroke-linejoin="round"/>
<path d="M928.0 172.5 C934.0 172.8 966.7 174.0 973.0 175.0 C979.3 176.0 975.2 179.3 975.5 180.0" fill="none" stroke="#ffffff" stroke-width="2.2" stroke-linecap="round" stroke-linejoin="round"/>
<path d="M968.0 185.0 L963.0 197.5" fill="none" stroke="#ffffff" stroke-width="2.2" stroke-linecap="round" stroke-linejoin="round"/>
<path d="M998.0 195.0 L990.5 207.5" fill="none" stroke="#ffffff" stroke-width="2.2" stroke-linecap="round" stroke-linejoin="round"/>
<path d="M953.0 135.0 C952.7 139.3 952.2 147.5 950.5 167.5 C948.8 187.5 941.8 269.3 940.5 285.0" fill="none" stroke="#ffffff" stroke-width="2.2" stroke-linecap="round" stroke-linejoin="round"/>
<path d="M923.0 207.5 L1003.0 222.5" fill="none" stroke="#ffffff" stroke-width="2.2" stroke-linecap="round" stroke-linejoin="round"/>
<path d="M948.0 292.5 L1008.0 302.5" fill="none" stroke="#ffffff" stroke-width="2.2" stroke-linecap="round" stroke-linejoin="round"/>
<path d="M958.0 285.0 L1008.0 290.0" fill="none" stroke="#ffffff" stroke-width="2.2" stroke-linecap="round" stroke-linejoin="round"/>
<path d="M933.0 320.0 L953.0 327.5" fill="none" stroke="#ffffff" stroke-width="2.2" stroke-linecap="round" stroke-linejoin="round"/>
<path d="M953.0 350.0 C952.0 358.0 947.2 398.7 945.5 410.0 C943.8 421.3 941.2 431.7 940.5 435.0" fill="none" stroke="#ffffff" stroke-width="2.2" stroke-linecap="round" stroke-linejoin="round"/>
<path d="M973.0 345.0 C976.3 347.0 993.3 358.0 998.0 360.0 C1002.7 362.0 1006.7 360.0 1008.0 360.0" fill="none" stroke="#ffffff" stroke-width="2.2" stroke-linecap="round" stroke-linejoin="round"/>
<path d="M973.0 347.5 C975.3 351.2 988.8 370.7 990.5 375.0 C992.2 379.3 988.5 382.0 985.5 380.0 C982.5 378.0 970.3 362.7 968.0 360.0" fill="none" stroke="#ffffff" stroke-width="2.2" stroke-linecap="round" stroke-linejoin="round"/>
<path d="M833.0 352.5 C833.7 354.2 832.7 361.0 838.0 365.0 C843.3 369.0 868.3 380.2 873.0 382.5" fill="none" stroke="#ffffff" stroke-width="2.2" stroke-linecap="round" stroke-linejoin="round"/>
<path d="M875.5 400.0 L908.0 417.5" fill="none" stroke="#ffffff" stroke-width="2.2" stroke-linecap="round" stroke-linejoin="round"/>
<path d="M583.0 392.5 L595.5 435.0" fill="none" stroke="#ffffff" stroke-width="2.2" stroke-linecap="round" stroke-linejoin="round"/>
<path d="M528.0 426.2 L563.0 435.0" fill="none" stroke="#ffffff" stroke-width="2.2" stroke-linecap="round" stroke-linejoin="round"/>
<path d="M903.0 417.5 L913.0 435.0" fill="none" stroke="#ffffff" stroke-width="2.2" stroke-linecap="round" stroke-linejoin="round"/>
<path d="M915.5 415.0 L933.0 435.0" fill="none" stroke="#ffffff" stroke-width="2.2" stroke-linecap="round" stroke-linejoin="round"/>
<path d="M883.0 145.0 L898.0 150.0" fill="none" stroke="#ffffff" stroke-width="2.2" stroke-linecap="round" stroke-linejoin="round"/>
<path d="M890.5 135.0 L915.5 150.0" fill="none" stroke="#ffffff" stroke-width="2.2" stroke-linecap="round" stroke-linejoin="round"/>
<path d="M1000.5 410.0 L1008.0 412.5" fill="none" stroke="#ffffff" stroke-width="2.2" stroke-linecap="round" stroke-linejoin="round"/>
<path d="M998.0 387.5 L1008.0 387.5" fill="none" stroke="#ffffff" stroke-width="2.2" stroke-linecap="round" stroke-linejoin="round"/>
<path d="M1000.5 425.0 L1008.0 420.0" fill="none" stroke="#ffffff" stroke-width="2.2" stroke-linecap="round" stroke-linejoin="round"/>
<path d="M1108.0 165.0 C1108.7 169.3 1112.0 181.5 1113.0 197.5 C1114.0 213.5 1115.0 266.7 1115.5 285.0 C1116.0 303.3 1117.1 327.3 1116.8 335.0 C1116.4 342.7 1113.5 341.5 1113.0 342.5" fill="none" stroke="#ffffff" stroke-width="2.2" stroke-linecap="round" stroke-linejoin="round"/>
<path d="M1198.0 135.0 C1197.0 139.3 1195.8 150.8 1190.5 167.5 C1185.2 184.2 1165.7 245.0 1158.0 260.0 C1150.3 275.0 1137.0 270.0 1133.0 280.0 C1129.0 290.0 1130.7 326.7 1128.0 335.0 C1125.3 343.3 1115.0 341.5 1113.0 342.5" fill="none" stroke="#ffffff" stroke-width="2.2" stroke-linecap="round" stroke-linejoin="round"/>
<path d="M1108.0 155.0 C1112.0 156.0 1130.7 162.3 1138.0 162.5 C1145.3 162.7 1156.0 155.6 1163.0 156.2 C1170.0 156.9 1178.2 164.3 1190.5 167.5 C1202.8 170.7 1243.5 176.0 1255.5 180.0 C1267.5 184.0 1273.5 191.2 1280.5 197.5 C1287.5 203.8 1300.0 220.8 1308.0 227.5 C1316.0 234.2 1330.8 243.8 1340.5 247.5 C1350.2 251.2 1375.8 250.7 1380.5 255.0 C1385.2 259.3 1371.2 267.3 1375.5 280.0 C1379.8 292.7 1409.0 337.3 1413.0 350.0 C1417.0 362.7 1410.2 363.7 1405.5 375.0 C1400.8 386.3 1381.7 427.0 1378.0 435.0" fill="none" stroke="#ffffff" stroke-width="2.2" stroke-linecap="round" stroke-linejoin="round"/>
<path d="M1390.5 300.0 L1475.5 291.2" fill="none" stroke="#ffffff" stroke-width="2.2" stroke-linecap="round" stroke-linejoin="round"/>
<path d="M1393.0 297.5 C1393.7 295.5 1396.0 285.3 1398.0 282.5 C1400.0 279.7 1406.7 277.1 1408.0 276.2" fill="none" stroke="#ffffff" stroke-width="2.2" stroke-linecap="round" stroke-linejoin="round"/>
<path d="M1475.5 255.0 C1476.5 256.3 1483.3 261.7 1483.0 265.0 C1482.7 268.3 1477.7 276.0 1473.0 280.0 C1468.3 284.0 1454.0 289.7 1448.0 295.0 C1442.0 300.3 1433.3 310.7 1428.0 320.0 C1422.7 329.3 1410.7 359.0 1408.0 365.0" fill="none" stroke="#ffffff" stroke-width="2.2" stroke-linecap="round" stroke-linejoin="round"/>
<path d="M1475.5 290.0 L1488.0 300.0" fill="none" stroke="#ffffff" stroke-width="2.2" stroke-linecap="round" stroke-linejoin="round"/>
<path d="M1298.0 312.5 C1299.3 312.8 1306.3 313.7 1308.0 315.0 C1309.7 316.3 1307.8 321.2 1310.5 322.5 C1313.2 323.8 1324.7 325.0 1328.0 325.0 C1331.3 325.0 1333.5 322.5 1335.5 322.5 C1337.5 322.5 1340.0 322.7 1343.0 325.0 C1346.0 327.3 1354.7 337.7 1358.0 340.0 C1361.3 342.3 1361.7 343.2 1368.0 342.5 C1374.3 341.8 1400.5 336.0 1405.5 335.0" fill="none" stroke="#ffffff" stroke-width="2.2" stroke-linecap="round" stroke-linejoin="round"/>
<path d="M1408.0 382.5 L1425.5 375.0" fill="none" stroke="#ffffff" stroke-width="2.2" stroke-linecap="round" stroke-linejoin="round"/>
<path d="M1418.0 405.0 C1420.0 404.3 1429.7 402.7 1433.0 400.0 C1436.3 397.3 1439.7 387.0 1443.0 385.0 C1446.3 383.0 1456.0 385.0 1458.0 385.0" fill="none" stroke="#ffffff" stroke-width="2.2" stroke-linecap="round" stroke-linejoin="round"/>
<path d="M1383.0 420.0 L1405.5 427.5" fill="none" stroke="#ffffff" stroke-width="2.2" stroke-linecap="round" stroke-linejoin="round"/>
<path d="M1008.0 185.0 L1050.5 192.5" fill="none" stroke="#ffffff" stroke-width="2.2" stroke-linecap="round" stroke-linejoin="round"/>
<path d="M1048.0 185.0 C1048.7 193.3 1050.0 234.2 1053.0 247.5 C1056.0 260.8 1067.5 276.7 1070.5 285.0 C1073.5 293.3 1074.8 306.7 1075.5 310.0" fill="none" stroke="#ffffff" stroke-width="2.2" stroke-linecap="round" stroke-linejoin="round"/>
<path d="M1010.5 217.5 L1008.0 310.0" fill="none" stroke="#ffffff" stroke-width="2.2" stroke-linecap="round" stroke-linejoin="round"/>
<path d="M1013.0 245.0 L1033.0 242.5" fill="none" stroke="#ffffff" stroke-width="2.2" stroke-linecap="round" stroke-linejoin="round"/>
<path d="M1045.5 262.5 C1046.5 264.8 1051.0 278.0 1053.0 280.0 C1055.0 282.0 1059.5 277.8 1060.5 277.5" fill="none" stroke="#ffffff" stroke-width="2.2" stroke-linecap="round" stroke-linejoin="round"/>
<path d="M1048.0 292.5 C1049.3 294.2 1055.0 304.0 1058.0 305.0 C1061.0 306.0 1068.8 300.7 1070.5 300.0" fill="none" stroke="#ffffff" stroke-width="2.2" stroke-linecap="round" stroke-linejoin="round"/>
<path d="M1008.0 312.5 L1033.0 310.0" fill="none" stroke="#ffffff" stroke-width="2.2" stroke-linecap="round" stroke-linejoin="round"/>
<path d="M1008.0 332.5 C1019.3 332.8 1079.0 334.0 1093.0 335.0 C1107.0 336.0 1107.0 341.0 1113.0 340.0 C1119.0 339.0 1132.0 327.8 1138.0 327.5 C1144.0 327.2 1155.3 336.2 1158.0 337.5" fill="none" stroke="#ffffff" stroke-width="2.2" stroke-linecap="round" stroke-linejoin="round"/>
<path d="M1063.0 340.0 L1093.0 332.5" fill="none" stroke="#ffffff" stroke-width="2.2" stroke-linecap="round" stroke-linejoin="round"/>
<path d="M1028.0 347.5 L1053.0 350.0" fill="none" stroke="#ffffff" stroke-width="2.2" stroke-linecap="round" stroke-linejoin="round"/>
<path d="M1008.0 365.0 L1043.0 367.5" fill="none" stroke="#ffffff" stroke-width="2.2" stroke-linecap="round" stroke-linejoin="round"/>
<path d="M1078.0 340.0 C1078.3 343.3 1081.8 353.7 1080.5 365.0 C1079.2 376.3 1069.7 417.0 1068.0 425.0" fill="none" stroke="#ffffff" stroke-width="2.2" stroke-linecap="round" stroke-linejoin="round"/>
<path d="M1075.5 365.0 C1079.5 364.7 1100.2 365.8 1105.5 362.5 C1110.8 359.2 1114.2 343.0 1115.5 340.0" fill="none" stroke="#ffffff" stroke-width="2.2" stroke-linecap="round" stroke-linejoin="round"/>
<path d="M1118.0 342.5 C1119.3 344.2 1124.7 351.7 1128.0 355.0 C1131.3 358.3 1139.0 364.5 1143.0 367.5 C1147.0 370.5 1156.0 376.2 1158.0 377.5" fill="none" stroke="#ffffff" stroke-width="2.2" stroke-linecap="round" stroke-linejoin="round"/>
<path d="M1133.0 345.0 L1158.0 337.5" fill="none" stroke="#ffffff" stroke-width="2.2" stroke-linecap="round" stroke-linejoin="round"/>
<path d="M1125.5 345.0 L1145.5 435.0" fill="none" stroke="#ffffff" stroke-width="2.2" stroke-linecap="round" stroke-linejoin="round"/>
<path d="M1098.0 360.0 C1097.3 365.3 1093.3 390.0 1093.0 400.0 C1092.7 410.0 1095.2 430.3 1095.5 435.0" fill="none" stroke="#ffffff" stroke-width="2.2" stroke-linecap="round" stroke-linejoin="round"/>
<path d="M1008.0 385.0 L1033.0 385.0" fill="none" stroke="#ffffff" stroke-width="2.2" stroke-linecap="round" stroke-linejoin="round"/>
<path d="M1093.0 402.5 L1113.0 402.5" fill="none" stroke="#ffffff" stroke-width="2.2" stroke-linecap="round" stroke-linejoin="round"/>
<path d="M1123.0 387.5 L1133.0 385.0" fill="none" stroke="#ffffff" stroke-width="2.2" stroke-linecap="round" stroke-linejoin="round"/>
<path d="M1120.5 405.0 L1135.5 402.5" fill="none" stroke="#ffffff" stroke-width="2.2" stroke-linecap="round" stroke-linejoin="round"/>
<path d="M1138.0 412.5 L1155.5 410.0" fill="none" stroke="#ffffff" stroke-width="2.2" stroke-linecap="round" stroke-linejoin="round"/>
<path d="M1143.0 427.5 L1158.0 425.0" fill="none" stroke="#ffffff" stroke-width="2.2" stroke-linecap="round" stroke-linejoin="round"/>
<path d="M1008.0 410.0 C1012.3 411.0 1032.5 415.5 1040.5 417.5 C1048.5 419.5 1064.3 424.0 1068.0 425.0" fill="none" stroke="#ffffff" stroke-width="2.2" stroke-linecap="round" stroke-linejoin="round"/>
<path d="M1040.5 405.0 L1043.0 435.0" fill="none" stroke="#ffffff" stroke-width="2.2" stroke-linecap="round" stroke-linejoin="round"/>
<path d="M1083.0 137.5 L1085.5 190.0" fill="none" stroke="#ffffff" stroke-width="2.2" stroke-linecap="round" stroke-linejoin="round"/>
<path d="M1073.0 233.8 L1110.5 228.8" fill="none" stroke="#ffffff" stroke-width="2.2" stroke-linecap="round" stroke-linejoin="round"/>
<path d="M1020.5 320.0 L1023.0 310.0" fill="none" stroke="#ffffff" stroke-width="2.2" stroke-linecap="round" stroke-linejoin="round"/>
<path d="M1035.5 332.5 L1038.0 322.5" fill="none" stroke="#ffffff" stroke-width="2.2" stroke-linecap="round" stroke-linejoin="round"/>
<path d="M1045.5 332.5 L1046.8 320.0" fill="none" stroke="#ffffff" stroke-width="2.2" stroke-linecap="round" stroke-linejoin="round"/>
<path d="M1038.0 360.0 L1035.5 370.0" fill="none" stroke="#ffffff" stroke-width="2.2" stroke-linecap="round" stroke-linejoin="round"/>
<path d="M1560.0 135.0 C1557.3 139.3 1542.7 159.8 1540.0 167.5 C1537.3 175.2 1547.3 180.2 1540.0 192.5 C1532.7 204.8 1493.7 248.0 1485.0 260.0 C1476.3 272.0 1481.0 276.5 1475.0 282.5 C1469.0 288.5 1444.7 302.0 1440.0 305.0" fill="none" stroke="#ffffff" stroke-width="2.2" stroke-linecap="round" stroke-linejoin="round"/>
<path d="M1475.0 255.0 L1485.0 262.5" fill="none" stroke="#ffffff" stroke-width="2.2" stroke-linecap="round" stroke-linejoin="round"/>
<path d="M1475.0 282.5 C1475.3 283.8 1465.5 280.8 1477.5 292.5 C1489.5 304.2 1548.0 355.0 1565.0 370.0 C1582.0 385.0 1599.7 400.3 1605.0 405.0" fill="none" stroke="#ffffff" stroke-width="2.2" stroke-linecap="round" stroke-linejoin="round"/>
<path d="M1440.0 297.5 L1475.0 291.2" fill="none" stroke="#ffffff" stroke-width="2.2" stroke-linecap="round" stroke-linejoin="round"/>
<path d="M1565.0 360.0 L1587.5 351.2" fill="none" stroke="#ffffff" stroke-width="2.2" stroke-linecap="round" stroke-linejoin="round"/>
<path d="M1440.0 387.5 L1460.0 386.2" fill="none" stroke="#ffffff" stroke-width="2.2" stroke-linecap="round" stroke-linejoin="round"/>
<path d="M1677.5 215.0 C1680.8 215.7 1697.5 222.7 1702.5 220.0 C1707.5 217.3 1713.3 198.3 1715.0 195.0" fill="none" stroke="#ffffff" stroke-width="2.2" stroke-linecap="round" stroke-linejoin="round"/>
<path d="M1682.5 200.0 L1677.5 215.0" fill="none" stroke="#ffffff" stroke-width="2.2" stroke-linecap="round" stroke-linejoin="round"/>
<path d="M1682.5 217.5 L1677.5 265.0" fill="none" stroke="#ffffff" stroke-width="2.2" stroke-linecap="round" stroke-linejoin="round"/>
<path d="M1700.0 220.0 L1707.5 245.0" fill="none" stroke="#ffffff" stroke-width="2.2" stroke-linecap="round" stroke-linejoin="round"/>
<path d="M1792.5 192.5 C1793.2 197.5 1795.5 225.0 1797.5 230.0 C1799.5 235.0 1805.5 225.0 1807.5 230.0 C1809.5 235.0 1811.8 262.5 1812.5 267.5" fill="none" stroke="#ffffff" stroke-width="2.2" stroke-linecap="round" stroke-linejoin="round"/>
<path d="M1735.0 192.5 L1790.0 290.0" fill="none" stroke="#ffffff" stroke-width="2.2" stroke-linecap="round" stroke-linejoin="round"/>
<path d="M1815.0 192.5 C1819.7 200.8 1847.0 244.7 1850.0 255.0 C1853.0 265.3 1839.2 268.0 1837.5 270.0" fill="none" stroke="#ffffff" stroke-width="2.2" stroke-linecap="round" stroke-linejoin="round"/>
<path d="M1892.5 192.5 L1907.5 267.5" fill="none" stroke="#ffffff" stroke-width="2.2" stroke-linecap="round" stroke-linejoin="round"/>
<path d="M1825.0 275.0 L1827.5 300.0" fill="none" stroke="#ffffff" stroke-width="2.2" stroke-linecap="round" stroke-linejoin="round"/>
<path d="M1815.0 297.5 L1810.0 322.5" fill="none" stroke="#ffffff" stroke-width="2.2" stroke-linecap="round" stroke-linejoin="round"/>
<path d="M1840.0 287.5 C1846.7 290.2 1879.3 303.8 1890.0 307.5 C1900.7 311.2 1916.0 314.0 1920.0 315.0" fill="none" stroke="#ffffff" stroke-width="2.2" stroke-linecap="round" stroke-linejoin="round"/>
<path d="M1790.0 312.5 C1799.3 319.8 1842.7 353.2 1860.0 367.5 C1877.3 381.8 1912.0 413.0 1920.0 420.0" fill="none" stroke="#ffffff" stroke-width="2.2" stroke-linecap="round" stroke-linejoin="round"/>
<path d="M1767.5 302.5 C1768.5 304.8 1773.0 317.7 1775.0 320.0 C1777.0 322.3 1781.5 320.0 1782.5 320.0" fill="none" stroke="#ffffff" stroke-width="2.2" stroke-linecap="round" stroke-linejoin="round"/>
<path d="M1667.5 332.5 C1669.5 333.8 1679.5 337.2 1682.5 342.5 C1685.5 347.8 1686.0 365.8 1690.0 372.5 C1694.0 379.2 1706.2 387.5 1712.5 392.5 C1718.8 397.5 1734.2 407.7 1737.5 410.0" fill="none" stroke="#ffffff" stroke-width="2.2" stroke-linecap="round" stroke-linejoin="round"/>
<path d="M1697.5 332.5 L1680.0 355.0" fill="none" stroke="#ffffff" stroke-width="2.2" stroke-linecap="round" stroke-linejoin="round"/>
<path d="M1700.0 342.5 L1685.0 357.5" fill="none" stroke="#ffffff" stroke-width="2.2" stroke-linecap="round" stroke-linejoin="round"/>
<path d="M1705.0 357.5 L1690.0 375.0" fill="none" stroke="#ffffff" stroke-width="2.2" stroke-linecap="round" stroke-linejoin="round"/>
<path d="M1725.0 365.0 L1710.0 390.0" fill="none" stroke="#ffffff" stroke-width="2.2" stroke-linecap="round" stroke-linejoin="round"/>
<path d="M1747.5 372.5 L1762.5 385.0" fill="none" stroke="#ffffff" stroke-width="2.2" stroke-linecap="round" stroke-linejoin="round"/>
<path d="M1765.0 390.0 L1780.0 405.0" fill="none" stroke="#ffffff" stroke-width="2.2" stroke-linecap="round" stroke-linejoin="round"/>
<path d="M1780.0 392.5 L1765.0 405.0" fill="none" stroke="#ffffff" stroke-width="2.2" stroke-linecap="round" stroke-linejoin="round"/>
<path d="M1812.5 367.5 C1816.2 363.5 1835.0 342.2 1840.0 337.5 C1845.0 332.8 1848.7 333.2 1850.0 332.5" fill="none" stroke="#ffffff" stroke-width="2.2" stroke-linecap="round" stroke-linejoin="round"/>
<path d="M1797.5 367.5 C1798.2 368.8 1796.8 373.2 1802.5 377.5 C1808.2 381.8 1831.7 394.7 1840.0 400.0 C1848.3 405.3 1861.7 415.2 1865.0 417.5" fill="none" stroke="#ffffff" stroke-width="2.2" stroke-linecap="round" stroke-linejoin="round"/>
<path d="M1760.0 425.0 C1770.7 421.7 1826.3 407.3 1840.0 400.0 C1853.7 392.7 1859.5 374.0 1862.5 370.0" fill="none" stroke="#ffffff" stroke-width="2.2" stroke-linecap="round" stroke-linejoin="round"/>
<path d="M1852.5 340.0 L1880.0 367.5" fill="none" stroke="#ffffff" stroke-width="2.2" stroke-linecap="round" stroke-linejoin="round"/>
<path d="M1810.0 395.0 L1840.0 430.0" fill="none" stroke="#ffffff" stroke-width="2.2" stroke-linecap="round" stroke-linejoin="round"/>
<path d="M1797.5 405.0 L1810.0 415.0" fill="none" stroke="#ffffff" stroke-width="2.2" stroke-linecap="round" stroke-linejoin="round"/>
<path d="M1660.0 255.0 C1664.0 258.7 1678.3 268.5 1690.0 282.5 C1701.7 296.5 1739.8 349.7 1747.5 360.0" fill="none" stroke="#ffffff" stroke-width="2.2" stroke-linecap="round" stroke-linejoin="round"/>
<path d="M93.0 435.0 L110.5 497.5" fill="none" stroke="#ffffff" stroke-width="2.2" stroke-linecap="round" stroke-linejoin="round"/>
<path d="M48.0 520.0 C54.3 518.3 85.8 510.3 95.5 507.5 C105.2 504.7 112.8 501.1 120.5 498.8 C128.2 496.4 148.7 491.2 153.0 490.0" fill="none" stroke="#ffffff" stroke-width="2.2" stroke-linecap="round" stroke-linejoin="round"/>
<path d="M53.0 470.0 L63.0 515.0" fill="none" stroke="#ffffff" stroke-width="2.2" stroke-linecap="round" stroke-linejoin="round"/>
<path d="M95.5 507.5 C96.2 511.2 99.2 524.7 100.5 535.0 C101.8 545.3 103.2 575.0 105.5 585.0 C107.8 595.0 116.3 606.7 118.0 610.0" fill="none" stroke="#ffffff" stroke-width="2.2" stroke-linecap="round" stroke-linejoin="round"/>
<path d="M85.5 545.0 L100.5 540.0" fill="none" stroke="#ffffff" stroke-width="2.2" stroke-linecap="round" stroke-linejoin="round"/>
<path d="M80.5 570.0 L100.5 560.0" fill="none" stroke="#ffffff" stroke-width="2.2" stroke-linecap="round" stroke-linejoin="round"/>
<path d="M140.5 470.0 C139.2 472.0 132.5 478.7 130.5 485.0 C128.5 491.3 126.2 513.2 125.5 517.5" fill="none" stroke="#ffffff" stroke-width="2.2" stroke-linecap="round" stroke-linejoin="round"/>
<path d="M160.5 497.5 L168.0 530.0" fill="none" stroke="#ffffff" stroke-width="2.2" stroke-linecap="round" stroke-linejoin="round"/>
<path d="M263.0 450.0 C258.3 449.7 233.0 445.5 228.0 447.5 C223.0 449.5 224.2 455.3 225.5 465.0 C226.8 474.7 231.7 504.0 238.0 520.0 C244.3 536.0 266.3 570.3 273.0 585.0 C279.7 599.7 285.0 620.0 288.0 630.0 C291.0 640.0 294.8 652.7 295.5 660.0 C296.2 667.3 294.3 679.0 293.0 685.0 C291.7 691.0 287.5 698.3 285.5 705.0 C283.5 711.7 279.0 731.0 278.0 735.0" fill="none" stroke="#ffffff" stroke-width="2.2" stroke-linecap="round" stroke-linejoin="round"/>
<path d="M195.5 530.0 C198.2 529.3 211.2 522.7 215.5 525.0 C219.8 527.3 226.3 544.5 228.0 547.5" fill="none" stroke="#ffffff" stroke-width="2.2" stroke-linecap="round" stroke-linejoin="round"/>
<path d="M158.0 591.2 C166.7 586.4 212.0 562.5 223.0 555.0 C234.0 547.5 238.2 537.7 240.5 535.0" fill="none" stroke="#ffffff" stroke-width="2.2" stroke-linecap="round" stroke-linejoin="round"/>
<path d="M220.5 555.0 C222.2 557.0 234.3 566.0 233.0 570.0 C231.7 574.0 213.5 583.0 210.5 585.0" fill="none" stroke="#ffffff" stroke-width="2.2" stroke-linecap="round" stroke-linejoin="round"/>
<path d="M178.0 552.5 L193.0 570.0" fill="none" stroke="#ffffff" stroke-width="2.2" stroke-linecap="round" stroke-linejoin="round"/>
<path d="M158.0 591.2 C157.0 596.4 155.2 621.8 150.5 630.0 C145.8 638.2 130.3 646.5 123.0 652.5 C115.7 658.5 101.2 670.3 95.5 675.0 C89.8 679.7 82.5 685.8 80.5 687.5" fill="none" stroke="#ffffff" stroke-width="2.2" stroke-linecap="round" stroke-linejoin="round"/>
<path d="M153.0 615.0 C155.3 616.7 167.5 623.8 170.5 627.5 C173.5 631.2 168.5 634.2 175.5 642.5 C182.5 650.8 213.3 677.7 223.0 690.0 C232.7 702.3 244.7 729.0 248.0 735.0" fill="none" stroke="#ffffff" stroke-width="2.2" stroke-linecap="round" stroke-linejoin="round"/>
<path d="M170.5 627.5 L208.0 612.5" fill="none" stroke="#ffffff" stroke-width="2.2" stroke-linecap="round" stroke-linejoin="round"/>
<path d="M153.0 607.5 L173.0 605.0" fill="none" stroke="#ffffff" stroke-width="2.2" stroke-linecap="round" stroke-linejoin="round"/>
<path d="M48.0 605.0 L110.5 667.5" fill="none" stroke="#ffffff" stroke-width="2.2" stroke-linecap="round" stroke-linejoin="round"/>
<path d="M58.0 625.0 L85.5 605.0" fill="none" stroke="#ffffff" stroke-width="2.2" stroke-linecap="round" stroke-linejoin="round"/>
<path d="M63.0 640.0 L103.0 625.0" fill="none" stroke="#ffffff" stroke-width="2.2" stroke-linecap="round" stroke-linejoin="round"/>
<path d="M48.0 655.0 L83.0 645.0" fill="none" stroke="#ffffff" stroke-width="2.2" stroke-linecap="round" stroke-linejoin="round"/>
<path d="M48.0 585.0 L75.5 580.0" fill="none" stroke="#ffffff" stroke-width="2.2" stroke-linecap="round" stroke-linejoin="round"/>
<path d="M58.0 685.0 L85.5 660.0" fill="none" stroke="#ffffff" stroke-width="2.2" stroke-linecap="round" stroke-linejoin="round"/>
<path d="M163.0 647.5 L175.5 642.5" fill="none" stroke="#ffffff" stroke-width="2.2" stroke-linecap="round" stroke-linejoin="round"/>
<path d="M133.0 647.5 L145.5 660.0" fill="none" stroke="#ffffff" stroke-width="2.2" stroke-linecap="round" stroke-linejoin="round"/>
<path d="M125.5 655.0 L135.5 667.5" fill="none" stroke="#ffffff" stroke-width="2.2" stroke-linecap="round" stroke-linejoin="round"/>
<path d="M95.5 675.0 C95.8 677.0 94.3 689.3 98.0 690.0 C101.7 690.7 113.7 678.7 123.0 680.0 C132.3 681.3 162.0 697.3 168.0 700.0" fill="none" stroke="#ffffff" stroke-width="2.2" stroke-linecap="round" stroke-linejoin="round"/>
<path d="M188.0 677.5 L203.0 670.0" fill="none" stroke="#ffffff" stroke-width="2.2" stroke-linecap="round" stroke-linejoin="round"/>
<path d="M123.0 680.0 C124.3 681.3 127.0 682.7 133.0 690.0 C139.0 697.3 163.3 729.0 168.0 735.0" fill="none" stroke="#ffffff" stroke-width="2.2" stroke-linecap="round" stroke-linejoin="round"/>
<path d="M268.0 670.0 L290.5 660.0" fill="none" stroke="#ffffff" stroke-width="2.2" stroke-linecap="round" stroke-linejoin="round"/>
<path d="M293.0 677.5 C296.7 676.5 312.2 674.0 320.5 670.0 C328.8 666.0 347.2 655.5 355.5 647.5 C363.8 639.5 379.3 615.0 383.0 610.0" fill="none" stroke="#ffffff" stroke-width="2.2" stroke-linecap="round" stroke-linejoin="round"/>
<path d="M278.0 585.0 C284.0 590.7 313.7 622.2 323.0 627.5 C332.3 632.8 340.3 628.0 348.0 625.0 C355.7 622.0 376.2 607.7 380.5 605.0" fill="none" stroke="#ffffff" stroke-width="2.2" stroke-linecap="round" stroke-linejoin="round"/>
<path d="M318.0 530.0 C320.0 534.0 327.3 552.3 333.0 560.0 C338.7 567.7 353.8 581.8 360.5 587.5 C367.2 593.2 380.0 600.5 383.0 602.5" fill="none" stroke="#ffffff" stroke-width="2.2" stroke-linecap="round" stroke-linejoin="round"/>
<path d="M315.5 435.0 C315.8 440.0 319.0 465.2 318.0 472.5 C317.0 479.8 309.3 487.7 308.0 490.0" fill="none" stroke="#ffffff" stroke-width="2.2" stroke-linecap="round" stroke-linejoin="round"/>
<path d="M340.5 450.0 C340.8 451.7 346.0 459.5 343.0 462.5 C340.0 465.5 321.3 471.2 318.0 472.5" fill="none" stroke="#ffffff" stroke-width="2.2" stroke-linecap="round" stroke-linejoin="round"/>
<path d="M318.0 502.5 L360.5 475.0" fill="none" stroke="#ffffff" stroke-width="2.2" stroke-linecap="round" stroke-linejoin="round"/>
<path d="M340.5 487.5 L358.0 552.5" fill="none" stroke="#ffffff" stroke-width="2.2" stroke-linecap="round" stroke-linejoin="round"/>
<path d="M355.5 485.0 L378.0 547.5" fill="none" stroke="#ffffff" stroke-width="2.2" stroke-linecap="round" stroke-linejoin="round"/>
<path d="M368.0 495.0 L383.0 550.0" fill="none" stroke="#ffffff" stroke-width="2.2" stroke-linecap="round" stroke-linejoin="round"/>
<path d="M478.0 435.0 C481.0 440.0 499.8 455.8 500.5 472.5 C501.2 489.2 485.3 548.3 483.0 560.0" fill="none" stroke="#ffffff" stroke-width="2.2" stroke-linecap="round" stroke-linejoin="round"/>
<path d="M475.5 522.5 C477.8 522.5 488.7 522.8 493.0 522.5 C497.3 522.2 503.3 519.0 508.0 520.0 C512.7 521.0 525.3 528.7 528.0 530.0" fill="none" stroke="#ffffff" stroke-width="2.2" stroke-linecap="round" stroke-linejoin="round"/>
<path d="M403.0 610.0 L415.5 620.0" fill="none" stroke="#ffffff" stroke-width="2.2" stroke-linecap="round" stroke-linejoin="round"/>
<path d="M403.0 625.0 C403.7 629.7 403.7 650.0 408.0 660.0 C412.3 670.0 428.8 690.0 435.5 700.0 C442.2 710.0 455.0 730.3 458.0 735.0" fill="none" stroke="#ffffff" stroke-width="2.2" stroke-linecap="round" stroke-linejoin="round"/>
<path d="M370.5 647.5 L380.5 662.5" fill="none" stroke="#ffffff" stroke-width="2.2" stroke-linecap="round" stroke-linejoin="round"/>
<path d="M348.0 725.0 L373.0 717.5" fill="none" stroke="#ffffff" stroke-width="2.2" stroke-linecap="round" stroke-linejoin="round"/>
<path d="M198.0 692.5 L223.0 680.0" fill="none" stroke="#ffffff" stroke-width="2.2" stroke-linecap="round" stroke-linejoin="round"/>
<path d="M195.5 705.0 C196.5 705.7 199.3 711.0 203.0 710.0 C206.7 709.0 220.3 699.2 223.0 697.5" fill="none" stroke="#ffffff" stroke-width="2.2" stroke-linecap="round" stroke-linejoin="round"/>
<path d="M210.5 722.5 L228.0 707.5" fill="none" stroke="#ffffff" stroke-width="2.2" stroke-linecap="round" stroke-linejoin="round"/>
<path d="M240.5 715.0 L263.0 705.0" fill="none" stroke="#ffffff" stroke-width="2.2" stroke-linecap="round" stroke-linejoin="round"/>
<path d="M565.5 435.0 L598.0 440.0" fill="none" stroke="#ffffff" stroke-width="2.2" stroke-linecap="round" stroke-linejoin="round"/>
<path d="M598.0 435.0 C599.7 441.0 606.5 466.0 610.5 480.0 C614.5 494.0 624.7 526.7 628.0 540.0 C631.3 553.3 634.5 574.7 635.5 580.0" fill="none" stroke="#ffffff" stroke-width="2.2" stroke-linecap="round" stroke-linejoin="round"/>
<path d="M528.0 530.0 L548.0 532.5" fill="none" stroke="#ffffff" stroke-width="2.2" stroke-linecap="round" stroke-linejoin="round"/>
<path d="M528.0 597.5 L545.5 540.0" fill="none" stroke="#ffffff" stroke-width="2.2" stroke-linecap="round" stroke-linejoin="round"/>
<path d="M528.0 615.0 C533.0 613.7 559.2 605.0 565.5 605.0 C571.8 605.0 572.5 605.0 575.5 615.0 C578.5 625.0 586.7 669.3 588.0 680.0 C589.3 690.7 587.2 687.7 585.5 695.0 C583.8 702.3 576.8 729.7 575.5 735.0" fill="none" stroke="#ffffff" stroke-width="2.2" stroke-linecap="round" stroke-linejoin="round"/>
<path d="M585.5 695.0 C587.2 695.7 594.0 694.7 598.0 700.0 C602.0 705.3 613.2 730.3 615.5 735.0" fill="none" stroke="#ffffff" stroke-width="2.2" stroke-linecap="round" stroke-linejoin="round"/>
<path d="M538.0 715.0 L550.5 735.0" fill="none" stroke="#ffffff" stroke-width="2.2" stroke-linecap="round" stroke-linejoin="round"/>
<path d="M700.5 625.0 C701.5 629.7 705.7 648.7 708.0 660.0 C710.3 671.3 716.0 700.0 718.0 710.0 C720.0 720.0 722.3 731.7 723.0 735.0" fill="none" stroke="#ffffff" stroke-width="2.2" stroke-linecap="round" stroke-linejoin="round"/>
<path d="M700.5 510.0 L748.0 501.2" fill="none" stroke="#ffffff" stroke-width="2.2" stroke-linecap="round" stroke-linejoin="round"/>
<path d="M730.5 435.0 C732.2 440.3 738.3 468.0 743.0 475.0 C747.7 482.0 761.5 483.8 765.5 487.5 C769.5 491.2 773.3 492.8 773.0 502.5 C772.7 512.2 762.3 545.7 763.0 560.0 C763.7 574.3 775.0 601.7 778.0 610.0 C781.0 618.3 782.8 620.5 785.5 622.5 C788.2 624.5 793.3 622.0 798.0 625.0 C802.7 628.0 817.5 642.3 820.5 645.0" fill="none" stroke="#ffffff" stroke-width="2.2" stroke-linecap="round" stroke-linejoin="round"/>
<path d="M740.5 575.0 L763.0 560.0" fill="none" stroke="#ffffff" stroke-width="2.2" stroke-linecap="round" stroke-linejoin="round"/>
<path d="M763.0 635.0 L785.5 622.5" fill="none" stroke="#ffffff" stroke-width="2.2" stroke-linecap="round" stroke-linejoin="round"/>
<path d="M788.0 510.0 C788.7 514.7 789.7 537.7 793.0 545.0 C796.3 552.3 809.0 562.0 813.0 565.0 C817.0 568.0 821.7 567.2 823.0 567.5" fill="none" stroke="#ffffff" stroke-width="2.2" stroke-linecap="round" stroke-linejoin="round"/>
<path d="M833.0 542.5 C835.0 542.5 844.3 547.5 848.0 542.5 C851.7 537.5 858.8 510.0 860.5 505.0" fill="none" stroke="#ffffff" stroke-width="2.2" stroke-linecap="round" stroke-linejoin="round"/>
<path d="M830.5 567.5 L888.0 590.0" fill="none" stroke="#ffffff" stroke-width="2.2" stroke-linecap="round" stroke-linejoin="round"/>
<path d="M830.5 580.0 L888.0 595.0" fill="none" stroke="#ffffff" stroke-width="2.2" stroke-linecap="round" stroke-linejoin="round"/>
<path d="M830.5 592.5 L883.0 605.0" fill="none" stroke="#ffffff" stroke-width="2.2" stroke-linecap="round" stroke-linejoin="round"/>
<path d="M830.5 605.0 L903.0 610.0" fill="none" stroke="#ffffff" stroke-width="2.2" stroke-linecap="round" stroke-linejoin="round"/>
<path d="M830.5 615.0 C846.8 614.3 936.3 609.7 953.0 610.0 C969.7 610.3 955.2 616.5 955.5 617.5" fill="none" stroke="#ffffff" stroke-width="2.2" stroke-linecap="round" stroke-linejoin="round"/>
<path d="M925.5 615.0 C925.8 616.0 924.3 621.8 928.0 622.5 C931.7 623.2 949.7 620.3 953.0 620.0" fill="none" stroke="#ffffff" stroke-width="2.2" stroke-linecap="round" stroke-linejoin="round"/>
<path d="M860.5 565.0 L863.0 615.0" fill="none" stroke="#ffffff" stroke-width="2.2" stroke-linecap="round" stroke-linejoin="round"/>
<path d="M883.0 615.0 L898.0 710.0" fill="none" stroke="#ffffff" stroke-width="2.2" stroke-linecap="round" stroke-linejoin="round"/>
<path d="M908.0 632.5 C909.3 636.8 910.7 662.0 918.0 665.0 C925.3 668.0 958.3 661.0 963.0 655.0 C967.7 649.0 954.3 624.7 953.0 620.0" fill="none" stroke="#ffffff" stroke-width="2.2" stroke-linecap="round" stroke-linejoin="round"/>
<path d="M950.5 587.5 C952.2 587.8 956.0 583.7 963.0 590.0 C970.0 596.3 999.7 625.0 1003.0 635.0 C1006.3 645.0 991.3 658.3 988.0 665.0 C984.7 671.7 979.3 682.3 978.0 685.0" fill="none" stroke="#ffffff" stroke-width="2.2" stroke-linecap="round" stroke-linejoin="round"/>
<path d="M980.5 500.0 C981.2 504.0 981.8 527.0 985.5 530.0 C989.2 533.0 1005.0 523.5 1008.0 522.5" fill="none" stroke="#ffffff" stroke-width="2.2" stroke-linecap="round" stroke-linejoin="round"/>
<path d="M988.0 480.0 L1008.0 475.0" fill="none" stroke="#ffffff" stroke-width="2.2" stroke-linecap="round" stroke-linejoin="round"/>
<path d="M995.5 550.0 L1008.0 545.0" fill="none" stroke="#ffffff" stroke-width="2.2" stroke-linecap="round" stroke-linejoin="round"/>
<path d="M953.0 435.0 C954.0 443.7 959.5 486.7 960.5 500.0 C961.5 513.3 960.5 530.3 960.5 535.0" fill="none" stroke="#ffffff" stroke-width="2.2" stroke-linecap="round" stroke-linejoin="round"/>
<path d="M993.0 435.0 L1008.0 445.0" fill="none" stroke="#ffffff" stroke-width="2.2" stroke-linecap="round" stroke-linejoin="round"/>
<path d="M923.0 435.0 L933.0 442.5" fill="none" stroke="#ffffff" stroke-width="2.2" stroke-linecap="round" stroke-linejoin="round"/>
<path d="M763.0 655.0 C761.7 657.0 753.0 663.3 753.0 670.0 C753.0 676.7 763.7 696.3 763.0 705.0 C762.3 713.7 750.0 731.0 748.0 735.0" fill="none" stroke="#ffffff" stroke-width="2.2" stroke-linecap="round" stroke-linejoin="round"/>
<path d="M778.0 682.5 L790.5 710.0" fill="none" stroke="#ffffff" stroke-width="2.2" stroke-linecap="round" stroke-linejoin="round"/>
<path d="M935.5 685.0 L953.0 735.0" fill="none" stroke="#ffffff" stroke-width="2.2" stroke-linecap="round" stroke-linejoin="round"/>
<path d="M938.0 697.5 L1008.0 687.5" fill="none" stroke="#ffffff" stroke-width="2.2" stroke-linecap="round" stroke-linejoin="round"/>
<path d="M913.0 715.0 L1008.0 717.5" fill="none" stroke="#ffffff" stroke-width="2.2" stroke-linecap="round" stroke-linejoin="round"/>
<path d="M938.0 547.5 C942.0 559.2 960.0 610.0 968.0 635.0 C976.0 660.0 994.0 721.7 998.0 735.0" fill="none" stroke="#ffffff" stroke-width="2.2" stroke-linecap="round" stroke-linejoin="round"/>
<path d="M1093.0 435.0 C1093.3 443.3 1095.5 477.5 1095.5 497.5 C1095.5 517.5 1094.7 561.7 1093.0 585.0 C1091.3 608.3 1084.0 659.2 1083.0 672.5 C1082.0 685.8 1085.2 683.3 1085.5 685.0" fill="none" stroke="#ffffff" stroke-width="2.2" stroke-linecap="round" stroke-linejoin="round"/>
<path d="M1095.5 440.0 C1102.5 445.3 1139.0 471.0 1148.0 480.0 C1157.0 489.0 1157.7 499.5 1163.0 507.5 C1168.3 515.5 1182.7 531.0 1188.0 540.0 C1193.3 549.0 1200.3 567.7 1203.0 575.0 C1205.7 582.3 1207.3 592.3 1208.0 595.0" fill="none" stroke="#ffffff" stroke-width="2.2" stroke-linecap="round" stroke-linejoin="round"/>
<path d="M1118.0 450.0 C1126.0 458.3 1168.0 500.5 1178.0 512.5 C1188.0 524.5 1191.0 536.3 1193.0 540.0" fill="none" stroke="#ffffff" stroke-width="2.2" stroke-linecap="round" stroke-linejoin="round"/>
<path d="M1155.5 460.0 L1178.0 457.5" fill="none" stroke="#ffffff" stroke-width="2.2" stroke-linecap="round" stroke-linejoin="round"/>
<path d="M1158.0 435.0 L1160.5 462.5" fill="none" stroke="#ffffff" stroke-width="2.2" stroke-linecap="round" stroke-linejoin="round"/>
<path d="M1153.0 485.0 C1157.7 484.3 1183.3 478.7 1188.0 480.0 C1192.7 481.3 1192.0 491.3 1188.0 495.0 C1184.0 498.7 1162.0 505.8 1158.0 507.5" fill="none" stroke="#ffffff" stroke-width="2.2" stroke-linecap="round" stroke-linejoin="round"/>
<path d="M1213.0 435.0 C1212.7 447.7 1211.2 508.3 1210.5 530.0 C1209.8 551.7 1211.7 580.2 1208.0 597.5 C1204.3 614.8 1189.0 645.7 1183.0 660.0 C1177.0 674.3 1165.7 699.0 1163.0 705.0" fill="none" stroke="#ffffff" stroke-width="2.2" stroke-linecap="round" stroke-linejoin="round"/>
<path d="M1213.0 530.0 C1207.0 531.7 1182.0 537.8 1168.0 542.5 C1154.0 547.2 1116.0 562.0 1108.0 565.0" fill="none" stroke="#ffffff" stroke-width="2.2" stroke-linecap="round" stroke-linejoin="round"/>
<path d="M1008.0 460.0 L1033.0 455.0" fill="none" stroke="#ffffff" stroke-width="2.2" stroke-linecap="round" stroke-linejoin="round"/>
<path d="M1018.0 465.0 L1033.0 487.5" fill="none" stroke="#ffffff" stroke-width="2.2" stroke-linecap="round" stroke-linejoin="round"/>
<path d="M1008.0 512.5 C1014.7 514.5 1047.0 523.8 1058.0 527.5 C1069.0 531.2 1086.2 538.3 1090.5 540.0" fill="none" stroke="#ffffff" stroke-width="2.2" stroke-linecap="round" stroke-linejoin="round"/>
<path d="M1020.5 487.5 C1025.5 490.5 1047.7 508.7 1058.0 510.0 C1068.3 511.3 1092.7 499.2 1098.0 497.5" fill="none" stroke="#ffffff" stroke-width="2.2" stroke-linecap="round" stroke-linejoin="round"/>
<path d="M1045.5 515.0 L1060.5 535.0" fill="none" stroke="#ffffff" stroke-width="2.2" stroke-linecap="round" stroke-linejoin="round"/>
<path d="M1070.5 517.5 L1083.0 535.0" fill="none" stroke="#ffffff" stroke-width="2.2" stroke-linecap="round" stroke-linejoin="round"/>
<path d="M1058.0 550.0 C1062.3 548.3 1079.8 541.5 1090.5 537.5 C1101.2 533.5 1131.7 522.3 1138.0 520.0" fill="none" stroke="#ffffff" stroke-width="2.2" stroke-linecap="round" stroke-linejoin="round"/>
<path d="M1040.5 575.0 C1040.5 577.0 1042.8 582.7 1040.5 590.0 C1038.2 597.3 1025.3 624.7 1023.0 630.0" fill="none" stroke="#ffffff" stroke-width="2.2" stroke-linecap="round" stroke-linejoin="round"/>
<path d="M1040.5 575.0 L1133.0 582.5" fill="none" stroke="#ffffff" stroke-width="2.2" stroke-linecap="round" stroke-linejoin="round"/>
<path d="M1023.0 600.0 C1025.0 602.0 1023.3 613.0 1038.0 615.0 C1052.7 617.0 1119.7 613.7 1133.0 615.0 C1146.3 616.3 1137.3 623.7 1138.0 625.0" fill="none" stroke="#ffffff" stroke-width="2.2" stroke-linecap="round" stroke-linejoin="round"/>
<path d="M1063.0 585.0 L1058.0 610.0" fill="none" stroke="#ffffff" stroke-width="2.2" stroke-linecap="round" stroke-linejoin="round"/>
<path d="M1098.0 607.5 L1103.0 617.5" fill="none" stroke="#ffffff" stroke-width="2.2" stroke-linecap="round" stroke-linejoin="round"/>
<path d="M1120.5 602.5 L1115.5 617.5" fill="none" stroke="#ffffff" stroke-width="2.2" stroke-linecap="round" stroke-linejoin="round"/>
<path d="M1133.0 615.0 C1141.0 611.7 1183.0 593.0 1193.0 590.0 C1203.0 587.0 1206.0 592.2 1208.0 592.5" fill="none" stroke="#ffffff" stroke-width="2.2" stroke-linecap="round" stroke-linejoin="round"/>
<path d="M1155.5 595.0 L1195.5 622.5" fill="none" stroke="#ffffff" stroke-width="2.2" stroke-linecap="round" stroke-linejoin="round"/>
<path d="M1220.5 595.0 L1248.0 600.0" fill="none" stroke="#ffffff" stroke-width="2.2" stroke-linecap="round" stroke-linejoin="round"/>
<path d="M1220.5 587.5 C1225.5 584.5 1252.7 566.7 1258.0 565.0 C1263.3 563.3 1260.2 573.7 1260.5 575.0" fill="none" stroke="#ffffff" stroke-width="2.2" stroke-linecap="round" stroke-linejoin="round"/>
<path d="M1248.0 450.0 C1250.0 449.7 1257.0 440.8 1263.0 447.5 C1269.0 454.2 1288.0 493.3 1293.0 500.0 C1298.0 506.7 1299.5 497.8 1300.5 497.5" fill="none" stroke="#ffffff" stroke-width="2.2" stroke-linecap="round" stroke-linejoin="round"/>
<path d="M1225.5 500.0 L1260.5 465.0" fill="none" stroke="#ffffff" stroke-width="2.2" stroke-linecap="round" stroke-linejoin="round"/>
<path d="M1213.0 527.5 C1217.3 527.5 1237.5 528.5 1245.5 527.5 C1253.5 526.5 1269.3 521.0 1273.0 520.0" fill="none" stroke="#ffffff" stroke-width="2.2" stroke-linecap="round" stroke-linejoin="round"/>
<path d="M1273.0 517.5 C1275.7 521.2 1285.7 544.0 1293.0 545.0 C1300.3 546.0 1323.3 527.7 1328.0 525.0" fill="none" stroke="#ffffff" stroke-width="2.2" stroke-linecap="round" stroke-linejoin="round"/>
<path d="M1303.0 520.0 L1318.0 517.5" fill="none" stroke="#ffffff" stroke-width="2.2" stroke-linecap="round" stroke-linejoin="round"/>
<path d="M1090.5 667.5 C1094.8 668.5 1107.3 675.3 1123.0 675.0 C1138.7 674.7 1193.3 665.3 1208.0 665.0 C1222.7 664.7 1229.7 671.5 1233.0 672.5" fill="none" stroke="#ffffff" stroke-width="2.2" stroke-linecap="round" stroke-linejoin="round"/>
<path d="M1228.0 670.0 C1230.3 670.0 1244.5 668.0 1245.5 670.0 C1246.5 672.0 1236.8 683.0 1235.5 685.0" fill="none" stroke="#ffffff" stroke-width="2.2" stroke-linecap="round" stroke-linejoin="round"/>
<path d="M1035.5 680.0 L1048.0 735.0" fill="none" stroke="#ffffff" stroke-width="2.2" stroke-linecap="round" stroke-linejoin="round"/>
<path d="M1283.0 677.5 L1328.0 670.0" fill="none" stroke="#ffffff" stroke-width="2.2" stroke-linecap="round" stroke-linejoin="round"/>
<path d="M1303.0 640.0 L1323.0 642.5" fill="none" stroke="#ffffff" stroke-width="2.2" stroke-linecap="round" stroke-linejoin="round"/>
<path d="M1075.5 725.0 L1080.5 735.0" fill="none" stroke="#ffffff" stroke-width="2.2" stroke-linecap="round" stroke-linejoin="round"/>
<path d="M1610.0 435.0 C1612.3 438.3 1625.2 454.7 1627.5 460.0 C1629.8 465.3 1628.8 470.7 1627.5 475.0 C1626.2 479.3 1619.2 487.2 1617.5 492.5 C1615.8 497.8 1612.7 510.3 1615.0 515.0 C1617.3 519.7 1632.3 525.8 1635.0 527.5" fill="none" stroke="#ffffff" stroke-width="2.2" stroke-linecap="round" stroke-linejoin="round"/>
<path d="M1620.0 492.5 C1621.7 491.2 1629.5 481.5 1632.5 482.5 C1635.5 483.5 1641.2 497.7 1642.5 500.0" fill="none" stroke="#ffffff" stroke-width="2.2" stroke-linecap="round" stroke-linejoin="round"/>
<path d="M1602.5 517.5 L1615.0 515.0" fill="none" stroke="#ffffff" stroke-width="2.2" stroke-linecap="round" stroke-linejoin="round"/>
<path d="M1497.5 602.5 C1501.5 603.5 1522.5 607.7 1527.5 610.0 C1532.5 612.3 1529.3 619.0 1535.0 620.0 C1540.7 621.0 1562.7 616.8 1570.0 617.5 C1577.3 618.2 1581.3 621.3 1590.0 625.0 C1598.7 628.7 1629.0 642.3 1635.0 645.0" fill="none" stroke="#ffffff" stroke-width="2.2" stroke-linecap="round" stroke-linejoin="round"/>
<path d="M1520.0 592.5 C1528.0 593.2 1568.3 595.2 1580.0 597.5 C1591.7 599.8 1600.5 606.3 1607.5 610.0 C1614.5 613.7 1629.2 623.0 1632.5 625.0" fill="none" stroke="#ffffff" stroke-width="2.2" stroke-linecap="round" stroke-linejoin="round"/>
<path d="M1607.5 575.0 C1607.2 577.7 1608.0 593.7 1605.0 595.0 C1602.0 596.3 1587.7 586.3 1585.0 585.0" fill="none" stroke="#ffffff" stroke-width="2.2" stroke-linecap="round" stroke-linejoin="round"/>
<path d="M1570.0 620.0 C1568.3 623.7 1562.2 637.5 1557.5 647.5 C1552.8 657.5 1538.0 688.7 1535.0 695.0" fill="none" stroke="#ffffff" stroke-width="2.2" stroke-linecap="round" stroke-linejoin="round"/>
<path d="M1560.0 597.5 L1570.0 620.0" fill="none" stroke="#ffffff" stroke-width="2.2" stroke-linecap="round" stroke-linejoin="round"/>
<path d="M1527.5 597.5 L1527.5 612.5" fill="none" stroke="#ffffff" stroke-width="2.2" stroke-linecap="round" stroke-linejoin="round"/>
<path d="M1507.5 645.0 L1517.5 677.5" fill="none" stroke="#ffffff" stroke-width="2.2" stroke-linecap="round" stroke-linejoin="round"/>
<path d="M1537.5 625.0 L1510.0 642.5" fill="none" stroke="#ffffff" stroke-width="2.2" stroke-linecap="round" stroke-linejoin="round"/>
<path d="M1440.0 695.0 C1453.3 696.0 1522.7 697.2 1540.0 702.5 C1557.3 707.8 1566.0 730.7 1570.0 735.0" fill="none" stroke="#ffffff" stroke-width="2.2" stroke-linecap="round" stroke-linejoin="round"/>
<path d="M1590.0 627.5 C1589.7 631.8 1588.8 653.7 1587.5 660.0 C1586.2 666.3 1585.0 670.3 1580.0 675.0 C1575.0 679.7 1554.0 692.3 1550.0 695.0" fill="none" stroke="#ffffff" stroke-width="2.2" stroke-linecap="round" stroke-linejoin="round"/>
<path d="M1457.5 695.0 C1458.2 697.0 1459.5 707.3 1462.5 710.0 C1465.5 712.7 1477.7 714.3 1480.0 715.0" fill="none" stroke="#ffffff" stroke-width="2.2" stroke-linecap="round" stroke-linejoin="round"/>
<path d="M1502.5 700.0 L1502.5 710.0" fill="none" stroke="#ffffff" stroke-width="2.2" stroke-linecap="round" stroke-linejoin="round"/>
<path d="M1542.5 650.0 L1555.0 655.0" fill="none" stroke="#ffffff" stroke-width="2.2" stroke-linecap="round" stroke-linejoin="round"/>
<path d="M1650.0 590.0 C1648.7 594.0 1640.7 616.0 1640.0 620.0 C1639.3 624.0 1644.3 620.0 1645.0 620.0" fill="none" stroke="#ffffff" stroke-width="2.2" stroke-linecap="round" stroke-linejoin="round"/>
<path d="M1677.5 605.0 L1660.0 682.5" fill="none" stroke="#ffffff" stroke-width="2.2" stroke-linecap="round" stroke-linejoin="round"/>
<path d="M1725.0 612.5 L1697.5 685.0" fill="none" stroke="#ffffff" stroke-width="2.2" stroke-linecap="round" stroke-linejoin="round"/>
<path d="M1722.5 435.0 C1723.2 438.0 1728.5 446.5 1727.5 457.5 C1726.5 468.5 1716.7 509.5 1715.0 517.5" fill="none" stroke="#ffffff" stroke-width="2.2" stroke-linecap="round" stroke-linejoin="round"/>
<path d="M1727.5 457.5 C1730.5 461.2 1744.0 479.3 1750.0 485.0 C1756.0 490.7 1769.5 498.0 1772.5 500.0" fill="none" stroke="#ffffff" stroke-width="2.2" stroke-linecap="round" stroke-linejoin="round"/>
<path d="M1700.0 470.0 L1720.0 480.0" fill="none" stroke="#ffffff" stroke-width="2.2" stroke-linecap="round" stroke-linejoin="round"/>
<path d="M1687.5 505.0 C1689.2 506.0 1697.0 515.8 1700.0 512.5 C1703.0 509.2 1708.7 484.3 1710.0 480.0" fill="none" stroke="#ffffff" stroke-width="2.2" stroke-linecap="round" stroke-linejoin="round"/>
<path d="M1737.5 482.5 C1739.5 482.5 1751.8 480.5 1752.5 482.5 C1753.2 484.5 1743.8 495.5 1742.5 497.5" fill="none" stroke="#ffffff" stroke-width="2.2" stroke-linecap="round" stroke-linejoin="round"/>
<path d="M1760.0 492.5 L1757.5 510.0" fill="none" stroke="#ffffff" stroke-width="2.2" stroke-linecap="round" stroke-linejoin="round"/>
<path d="M1680.0 445.0 L1680.0 467.5" fill="none" stroke="#ffffff" stroke-width="2.2" stroke-linecap="round" stroke-linejoin="round"/>
<path d="M1722.5 675.0 C1726.8 675.3 1746.0 674.8 1755.0 677.5 C1764.0 680.2 1778.7 690.7 1790.0 695.0 C1801.3 699.3 1829.3 706.0 1840.0 710.0 C1850.7 714.0 1866.0 723.0 1870.0 725.0" fill="none" stroke="#ffffff" stroke-width="2.2" stroke-linecap="round" stroke-linejoin="round"/>
<path d="M1745.0 680.0 L1735.0 710.0" fill="none" stroke="#ffffff" stroke-width="2.2" stroke-linecap="round" stroke-linejoin="round"/>
<path d="M1785.0 700.0 L1820.0 682.5" fill="none" stroke="#ffffff" stroke-width="2.2" stroke-linecap="round" stroke-linejoin="round"/>
<path d="M1755.0 642.5 C1760.7 644.8 1787.5 655.7 1797.5 660.0 C1807.5 664.3 1821.0 669.7 1830.0 675.0 C1839.0 680.3 1857.7 692.0 1865.0 700.0 C1872.3 708.0 1882.3 730.3 1885.0 735.0" fill="none" stroke="#ffffff" stroke-width="2.2" stroke-linecap="round" stroke-linejoin="round"/>
<path d="M1747.5 630.0 C1749.8 626.7 1759.3 613.0 1765.0 605.0 C1770.7 597.0 1786.0 577.3 1790.0 570.0 C1794.0 562.7 1794.3 552.7 1795.0 550.0" fill="none" stroke="#ffffff" stroke-width="2.2" stroke-linecap="round" stroke-linejoin="round"/>
<path d="M1775.0 615.0 C1776.3 612.3 1781.7 600.3 1785.0 595.0 C1788.3 589.7 1796.7 577.0 1800.0 575.0 C1803.3 573.0 1808.7 579.3 1810.0 580.0" fill="none" stroke="#ffffff" stroke-width="2.2" stroke-linecap="round" stroke-linejoin="round"/>
<path d="M1790.0 625.0 C1798.7 619.7 1841.7 592.3 1855.0 585.0 C1868.3 577.7 1881.3 573.0 1890.0 570.0 C1898.7 567.0 1916.0 563.5 1920.0 562.5" fill="none" stroke="#ffffff" stroke-width="2.2" stroke-linecap="round" stroke-linejoin="round"/>
<path d="M1822.5 602.5 L1837.5 617.5" fill="none" stroke="#ffffff" stroke-width="2.2" stroke-linecap="round" stroke-linejoin="round"/>
<path d="M1852.5 632.5 C1854.2 626.2 1860.0 594.3 1865.0 585.0 C1870.0 575.7 1882.7 569.2 1890.0 562.5 C1897.3 555.8 1916.0 538.7 1920.0 535.0" fill="none" stroke="#ffffff" stroke-width="2.2" stroke-linecap="round" stroke-linejoin="round"/>
<path d="M1877.5 600.0 C1882.5 601.3 1909.3 608.0 1915.0 610.0 C1920.7 612.0 1919.3 614.3 1920.0 615.0" fill="none" stroke="#ffffff" stroke-width="2.2" stroke-linecap="round" stroke-linejoin="round"/>
<path d="M1885.0 575.0 L1920.0 575.0" fill="none" stroke="#ffffff" stroke-width="2.2" stroke-linecap="round" stroke-linejoin="round"/>
<path d="M1872.5 582.5 L1875.0 615.0" fill="none" stroke="#ffffff" stroke-width="2.2" stroke-linecap="round" stroke-linejoin="round"/>
<path d="M1865.0 620.0 L1887.5 625.0" fill="none" stroke="#ffffff" stroke-width="2.2" stroke-linecap="round" stroke-linejoin="round"/>
<path d="M1890.0 625.0 L1890.0 640.0" fill="none" stroke="#ffffff" stroke-width="2.2" stroke-linecap="round" stroke-linejoin="round"/>
<path d="M1900.0 477.5 L1920.0 485.0" fill="none" stroke="#ffffff" stroke-width="2.2" stroke-linecap="round" stroke-linejoin="round"/>
<path d="M1892.5 510.0 C1892.8 512.0 1892.0 520.3 1895.0 525.0 C1898.0 529.7 1912.3 542.3 1915.0 545.0" fill="none" stroke="#ffffff" stroke-width="2.2" stroke-linecap="round" stroke-linejoin="round"/>
<path d="M1900.0 655.0 C1896.7 659.7 1880.0 679.3 1875.0 690.0 C1870.0 700.7 1864.2 729.0 1862.5 735.0" fill="none" stroke="#ffffff" stroke-width="2.2" stroke-linecap="round" stroke-linejoin="round"/>
<path d="M1920.0 670.0 L1890.0 700.0" fill="none" stroke="#ffffff" stroke-width="2.2" stroke-linecap="round" stroke-linejoin="round"/>
<path d="M1875.0 655.0 L1852.5 685.0" fill="none" stroke="#ffffff" stroke-width="2.2" stroke-linecap="round" stroke-linejoin="round"/>
<path d="M118.0 725.0 C122.7 731.7 147.0 767.7 153.0 775.0 C159.0 782.3 161.7 779.3 163.0 780.0" fill="none" stroke="#ffffff" stroke-width="2.2" stroke-linecap="round" stroke-linejoin="round"/>
<path d="M48.0 752.5 L68.0 742.5" fill="none" stroke="#ffffff" stroke-width="2.2" stroke-linecap="round" stroke-linejoin="round"/>
<path d="M73.0 760.0 L108.0 745.0" fill="none" stroke="#ffffff" stroke-width="2.2" stroke-linecap="round" stroke-linejoin="round"/>
<path d="M78.0 777.5 C84.7 786.5 120.0 834.7 128.0 845.0 C136.0 855.3 136.7 852.7 138.0 855.0 C139.3 857.3 132.7 855.5 138.0 862.5 C143.3 869.5 170.0 897.5 178.0 907.5 C186.0 917.5 194.0 929.8 198.0 937.5 C202.0 945.2 206.7 961.3 208.0 965.0" fill="none" stroke="#ffffff" stroke-width="2.2" stroke-linecap="round" stroke-linejoin="round"/>
<path d="M48.0 815.0 C52.0 813.0 68.7 805.0 78.0 800.0 C87.3 795.0 112.7 780.5 118.0 777.5" fill="none" stroke="#ffffff" stroke-width="2.2" stroke-linecap="round" stroke-linejoin="round"/>
<path d="M48.0 840.0 C52.0 838.7 72.0 828.7 78.0 830.0 C84.0 831.3 91.0 847.3 93.0 850.0" fill="none" stroke="#ffffff" stroke-width="2.2" stroke-linecap="round" stroke-linejoin="round"/>
<path d="M63.0 872.5 C67.7 870.8 89.3 863.7 98.0 860.0 C106.7 856.3 124.0 847.0 128.0 845.0" fill="none" stroke="#ffffff" stroke-width="2.2" stroke-linecap="round" stroke-linejoin="round"/>
<path d="M48.0 860.0 L83.0 910.0" fill="none" stroke="#ffffff" stroke-width="2.2" stroke-linecap="round" stroke-linejoin="round"/>
<path d="M85.5 872.5 L125.5 932.5" fill="none" stroke="#ffffff" stroke-width="2.2" stroke-linecap="round" stroke-linejoin="round"/>
<path d="M138.0 862.5 C132.0 866.2 105.0 884.3 93.0 890.0 C81.0 895.7 54.0 903.0 48.0 905.0" fill="none" stroke="#ffffff" stroke-width="2.2" stroke-linecap="round" stroke-linejoin="round"/>
<path d="M128.0 895.0 L148.0 887.5" fill="none" stroke="#ffffff" stroke-width="2.2" stroke-linecap="round" stroke-linejoin="round"/>
<path d="M48.0 932.5 C52.0 930.8 68.0 923.0 78.0 920.0 C88.0 917.0 113.7 912.3 123.0 910.0 C132.3 907.7 140.7 904.2 148.0 902.5 C155.3 900.8 174.0 898.2 178.0 897.5" fill="none" stroke="#ffffff" stroke-width="2.2" stroke-linecap="round" stroke-linejoin="round"/>
<path d="M128.0 925.0 C131.3 924.3 147.0 919.7 153.0 920.0 C159.0 920.3 168.7 923.5 173.0 927.5 C177.3 931.5 184.8 945.0 185.5 950.0 C186.2 955.0 179.0 963.0 178.0 965.0" fill="none" stroke="#ffffff" stroke-width="2.2" stroke-linecap="round" stroke-linejoin="round"/>
<path d="M73.0 940.0 L90.5 965.0" fill="none" stroke="#ffffff" stroke-width="2.2" stroke-linecap="round" stroke-linejoin="round"/>
<path d="M155.5 932.5 L143.0 965.0" fill="none" stroke="#ffffff" stroke-width="2.2" stroke-linecap="round" stroke-linejoin="round"/>
<path d="M115.5 722.5 L155.5 700.0" fill="none" stroke="#ffffff" stroke-width="2.2" stroke-linecap="round" stroke-linejoin="round"/>
<path d="M163.0 747.5 L188.0 727.5" fill="none" stroke="#ffffff" stroke-width="2.2" stroke-linecap="round" stroke-linejoin="round"/>
<path d="M195.5 737.5 L173.0 765.0" fill="none" stroke="#ffffff" stroke-width="2.2" stroke-linecap="round" stroke-linejoin="round"/>
<path d="M153.0 765.0 L178.0 750.0" fill="none" stroke="#ffffff" stroke-width="2.2" stroke-linecap="round" stroke-linejoin="round"/>
<path d="M228.0 700.0 C230.7 703.7 239.7 718.5 248.0 727.5 C256.3 736.5 284.8 762.2 290.5 767.5" fill="none" stroke="#ffffff" stroke-width="2.2" stroke-linecap="round" stroke-linejoin="round"/>
<path d="M210.5 742.5 L268.0 780.0" fill="none" stroke="#ffffff" stroke-width="2.2" stroke-linecap="round" stroke-linejoin="round"/>
<path d="M208.0 762.5 L268.0 807.5" fill="none" stroke="#ffffff" stroke-width="2.2" stroke-linecap="round" stroke-linejoin="round"/>
<path d="M195.5 782.5 L238.0 805.0" fill="none" stroke="#ffffff" stroke-width="2.2" stroke-linecap="round" stroke-linejoin="round"/>
<path d="M235.5 727.5 L263.0 710.0" fill="none" stroke="#ffffff" stroke-width="2.2" stroke-linecap="round" stroke-linejoin="round"/>
<path d="M223.0 840.0 C225.0 836.3 231.3 825.2 238.0 812.5 C244.7 799.8 266.7 760.0 273.0 745.0 C279.3 730.0 283.8 706.0 285.5 700.0" fill="none" stroke="#ffffff" stroke-width="2.2" stroke-linecap="round" stroke-linejoin="round"/>
<path d="M185.5 820.0 C188.5 824.0 204.3 845.7 208.0 850.0 C211.7 854.3 211.0 854.5 213.0 852.5 C215.0 850.5 221.7 837.3 223.0 835.0" fill="none" stroke="#ffffff" stroke-width="2.2" stroke-linecap="round" stroke-linejoin="round"/>
<path d="M253.0 820.0 C255.7 817.7 268.0 802.8 273.0 802.5 C278.0 802.2 291.2 811.8 290.5 817.5 C289.8 823.2 271.0 841.3 268.0 845.0" fill="none" stroke="#ffffff" stroke-width="2.2" stroke-linecap="round" stroke-linejoin="round"/>
<path d="M243.0 842.5 C241.0 850.2 230.7 883.7 228.0 900.0 C225.3 916.3 223.7 956.3 223.0 965.0" fill="none" stroke="#ffffff" stroke-width="2.2" stroke-linecap="round" stroke-linejoin="round"/>
<path d="M298.0 700.0 C301.3 706.7 315.3 731.7 323.0 750.0 C330.7 768.3 346.2 813.5 355.5 837.5 C364.8 861.5 388.0 917.7 393.0 930.0" fill="none" stroke="#ffffff" stroke-width="2.2" stroke-linecap="round" stroke-linejoin="round"/>
<path d="M268.0 747.5 C275.3 765.2 314.3 859.7 323.0 880.0 C331.7 900.3 331.7 897.3 333.0 900.0" fill="none" stroke="#ffffff" stroke-width="2.2" stroke-linecap="round" stroke-linejoin="round"/>
<path d="M308.0 782.5 C312.7 798.8 337.7 880.7 343.0 905.0 C348.3 929.3 347.3 957.0 348.0 965.0" fill="none" stroke="#ffffff" stroke-width="2.2" stroke-linecap="round" stroke-linejoin="round"/>
<path d="M313.0 792.5 C319.0 789.8 350.0 773.5 358.0 772.5 C366.0 771.5 367.7 780.3 373.0 785.0 C378.3 789.7 392.0 802.2 398.0 807.5 C404.0 812.8 415.3 822.7 418.0 825.0" fill="none" stroke="#ffffff" stroke-width="2.2" stroke-linecap="round" stroke-linejoin="round"/>
<path d="M310.5 767.5 L338.0 757.5" fill="none" stroke="#ffffff" stroke-width="2.2" stroke-linecap="round" stroke-linejoin="round"/>
<path d="M358.0 725.0 C361.0 730.7 375.8 760.8 380.5 767.5 C385.2 774.2 391.3 774.0 393.0 775.0" fill="none" stroke="#ffffff" stroke-width="2.2" stroke-linecap="round" stroke-linejoin="round"/>
<path d="M365.5 737.5 L408.0 732.5" fill="none" stroke="#ffffff" stroke-width="2.2" stroke-linecap="round" stroke-linejoin="round"/>
<path d="M380.5 762.5 L415.5 745.0" fill="none" stroke="#ffffff" stroke-width="2.2" stroke-linecap="round" stroke-linejoin="round"/>
<path d="M340.5 890.0 L408.0 855.0" fill="none" stroke="#ffffff" stroke-width="2.2" stroke-linecap="round" stroke-linejoin="round"/>
<path d="M273.0 920.0 L323.0 895.0" fill="none" stroke="#ffffff" stroke-width="2.2" stroke-linecap="round" stroke-linejoin="round"/>
<path d="M273.0 920.0 L288.0 965.0" fill="none" stroke="#ffffff" stroke-width="2.2" stroke-linecap="round" stroke-linejoin="round"/>
<path d="M353.0 922.5 L403.0 920.0" fill="none" stroke="#ffffff" stroke-width="2.2" stroke-linecap="round" stroke-linejoin="round"/>
<path d="M310.5 957.5 L410.5 925.0" fill="none" stroke="#ffffff" stroke-width="2.2" stroke-linecap="round" stroke-linejoin="round"/>
<path d="M398.0 892.5 C399.7 892.2 409.2 887.3 410.5 890.0 C411.8 892.7 408.3 909.5 408.0 912.5" fill="none" stroke="#ffffff" stroke-width="2.2" stroke-linecap="round" stroke-linejoin="round"/>
<path d="M463.0 782.5 C466.3 783.5 480.0 785.3 488.0 790.0 C496.0 794.7 518.3 813.8 523.0 817.5" fill="none" stroke="#ffffff" stroke-width="2.2" stroke-linecap="round" stroke-linejoin="round"/>
<path d="M468.0 812.5 C471.3 814.2 485.0 820.7 493.0 825.0 C501.0 829.3 523.3 842.3 528.0 845.0" fill="none" stroke="#ffffff" stroke-width="2.2" stroke-linecap="round" stroke-linejoin="round"/>
<path d="M473.0 840.0 C478.3 844.7 505.7 869.7 513.0 875.0 C520.3 880.3 526.0 879.3 528.0 880.0" fill="none" stroke="#ffffff" stroke-width="2.2" stroke-linecap="round" stroke-linejoin="round"/>
<path d="M458.0 880.0 L473.0 922.5" fill="none" stroke="#ffffff" stroke-width="2.2" stroke-linecap="round" stroke-linejoin="round"/>
<path d="M423.0 922.5 L473.0 915.0" fill="none" stroke="#ffffff" stroke-width="2.2" stroke-linecap="round" stroke-linejoin="round"/>
<path d="M438.0 940.0 L448.0 965.0" fill="none" stroke="#ffffff" stroke-width="2.2" stroke-linecap="round" stroke-linejoin="round"/>
<path d="M418.0 860.0 L438.0 860.0" fill="none" stroke="#ffffff" stroke-width="2.2" stroke-linecap="round" stroke-linejoin="round"/>
<path d="M510.5 905.0 L528.0 925.0" fill="none" stroke="#ffffff" stroke-width="2.2" stroke-linecap="round" stroke-linejoin="round"/>
<path d="M503.0 885.0 L518.0 860.0" fill="none" stroke="#ffffff" stroke-width="2.2" stroke-linecap="round" stroke-linejoin="round"/>
<path d="M298.0 845.0 L310.5 840.0" fill="none" stroke="#ffffff" stroke-width="2.2" stroke-linecap="round" stroke-linejoin="round"/>
<path d="M545.5 712.5 C547.2 720.8 554.3 756.3 558.0 775.0 C561.7 793.7 567.3 839.5 573.0 852.5 C578.7 865.5 592.8 863.5 600.5 872.5 C608.2 881.5 623.5 907.7 630.5 920.0 C637.5 932.3 650.0 959.0 653.0 965.0" fill="none" stroke="#ffffff" stroke-width="2.2" stroke-linecap="round" stroke-linejoin="round"/>
<path d="M555.5 737.5 C558.2 736.8 571.8 730.5 575.5 732.5 C579.2 734.5 584.3 748.8 583.0 752.5 C581.7 756.2 567.8 759.0 565.5 760.0" fill="none" stroke="#ffffff" stroke-width="2.2" stroke-linecap="round" stroke-linejoin="round"/>
<path d="M595.5 700.0 C599.2 708.3 619.3 749.2 623.0 762.5 C626.7 775.8 617.3 794.3 623.0 800.0 C628.7 805.7 659.8 804.3 665.5 805.0" fill="none" stroke="#ffffff" stroke-width="2.2" stroke-linecap="round" stroke-linejoin="round"/>
<path d="M558.0 782.5 C561.7 791.5 581.5 839.7 585.5 850.0 C589.5 860.3 587.7 858.7 588.0 860.0" fill="none" stroke="#ffffff" stroke-width="2.2" stroke-linecap="round" stroke-linejoin="round"/>
<path d="M528.0 912.5 L553.0 907.5" fill="none" stroke="#ffffff" stroke-width="2.2" stroke-linecap="round" stroke-linejoin="round"/>
<path d="M538.0 905.0 L560.5 965.0" fill="none" stroke="#ffffff" stroke-width="2.2" stroke-linecap="round" stroke-linejoin="round"/>
<path d="M578.0 897.5 L583.0 925.0" fill="none" stroke="#ffffff" stroke-width="2.2" stroke-linecap="round" stroke-linejoin="round"/>
<path d="M598.0 912.5 L613.0 907.5" fill="none" stroke="#ffffff" stroke-width="2.2" stroke-linecap="round" stroke-linejoin="round"/>
<path d="M638.0 910.0 C638.7 910.3 638.3 905.2 643.0 912.5 C647.7 919.8 669.0 958.0 673.0 965.0" fill="none" stroke="#ffffff" stroke-width="2.2" stroke-linecap="round" stroke-linejoin="round"/>
<path d="M665.5 905.0 C666.5 906.7 670.0 917.2 673.0 917.5 C676.0 917.8 686.0 908.8 688.0 907.5" fill="none" stroke="#ffffff" stroke-width="2.2" stroke-linecap="round" stroke-linejoin="round"/>
<path d="M678.0 920.0 C679.3 922.0 683.3 932.0 688.0 935.0 C692.7 938.0 708.0 940.5 713.0 942.5 C718.0 944.5 723.8 949.0 725.5 950.0" fill="none" stroke="#ffffff" stroke-width="2.2" stroke-linecap="round" stroke-linejoin="round"/>
<path d="M683.0 855.0 C685.0 857.0 693.3 866.3 698.0 870.0 C702.7 873.7 715.3 880.8 718.0 882.5" fill="none" stroke="#ffffff" stroke-width="2.2" stroke-linecap="round" stroke-linejoin="round"/>
<path d="M683.0 810.0 C693.7 820.7 751.7 875.3 763.0 890.0 C774.3 904.7 768.7 912.0 768.0 920.0 C767.3 928.0 759.3 946.0 758.0 950.0" fill="none" stroke="#ffffff" stroke-width="2.2" stroke-linecap="round" stroke-linejoin="round"/>
<path d="M753.0 767.5 L843.0 747.5" fill="none" stroke="#ffffff" stroke-width="2.2" stroke-linecap="round" stroke-linejoin="round"/>
<path d="M763.0 722.5 C765.0 727.5 774.3 749.7 778.0 760.0 C781.7 770.3 788.2 794.0 790.5 800.0 C792.8 806.0 794.8 804.3 795.5 805.0" fill="none" stroke="#ffffff" stroke-width="2.2" stroke-linecap="round" stroke-linejoin="round"/>
<path d="M765.5 792.5 L790.5 787.5" fill="none" stroke="#ffffff" stroke-width="2.2" stroke-linecap="round" stroke-linejoin="round"/>
<path d="M773.0 810.0 C776.3 808.7 789.7 802.7 798.0 800.0 C806.3 797.3 830.5 791.3 835.5 790.0" fill="none" stroke="#ffffff" stroke-width="2.2" stroke-linecap="round" stroke-linejoin="round"/>
<path d="M803.0 775.0 C806.3 774.7 821.0 771.8 828.0 772.5 C835.0 773.2 850.2 777.7 855.5 780.0 C860.8 782.3 866.3 788.7 868.0 790.0" fill="none" stroke="#ffffff" stroke-width="2.2" stroke-linecap="round" stroke-linejoin="round"/>
<path d="M803.0 775.0 L805.5 800.0" fill="none" stroke="#ffffff" stroke-width="2.2" stroke-linecap="round" stroke-linejoin="round"/>
<path d="M810.5 730.0 L823.0 750.0" fill="none" stroke="#ffffff" stroke-width="2.2" stroke-linecap="round" stroke-linejoin="round"/>
<path d="M823.0 700.0 C824.7 706.7 835.2 740.3 835.5 750.0 C835.8 759.7 825.8 766.5 825.5 772.5 C825.2 778.5 830.0 788.0 833.0 795.0 C836.0 802.0 844.3 806.3 848.0 825.0 C851.7 843.7 859.2 916.3 860.5 935.0 C861.8 953.7 858.3 961.0 858.0 965.0" fill="none" stroke="#ffffff" stroke-width="2.2" stroke-linecap="round" stroke-linejoin="round"/>
<path d="M808.0 830.0 C809.0 829.3 811.2 827.0 815.5 825.0 C819.8 823.0 837.2 816.3 840.5 815.0" fill="none" stroke="#ffffff" stroke-width="2.2" stroke-linecap="round" stroke-linejoin="round"/>
<path d="M805.5 855.0 C810.8 853.3 831.8 844.8 845.5 842.5 C859.2 840.2 897.0 840.8 908.0 837.5 C919.0 834.2 925.3 820.2 928.0 817.5" fill="none" stroke="#ffffff" stroke-width="2.2" stroke-linecap="round" stroke-linejoin="round"/>
<path d="M845.5 822.5 L883.0 842.5" fill="none" stroke="#ffffff" stroke-width="2.2" stroke-linecap="round" stroke-linejoin="round"/>
<path d="M850.5 872.5 L908.0 875.0" fill="none" stroke="#ffffff" stroke-width="2.2" stroke-linecap="round" stroke-linejoin="round"/>
<path d="M853.0 885.0 C861.0 885.7 907.7 884.7 913.0 890.0 C918.3 895.3 900.3 918.7 893.0 925.0 C885.7 931.3 862.7 935.8 858.0 937.5" fill="none" stroke="#ffffff" stroke-width="2.2" stroke-linecap="round" stroke-linejoin="round"/>
<path d="M893.0 925.0 L913.0 942.5" fill="none" stroke="#ffffff" stroke-width="2.2" stroke-linecap="round" stroke-linejoin="round"/>
<path d="M908.0 840.0 C912.3 840.7 934.5 846.7 940.5 845.0 C946.5 843.3 948.7 830.8 953.0 827.5 C957.3 824.2 965.7 820.0 973.0 820.0 C980.3 820.0 1003.3 826.5 1008.0 827.5" fill="none" stroke="#ffffff" stroke-width="2.2" stroke-linecap="round" stroke-linejoin="round"/>
<path d="M960.5 825.0 C960.5 826.7 958.2 835.5 960.5 837.5 C962.8 839.5 975.7 841.3 978.0 840.0 C980.3 838.7 978.0 829.2 978.0 827.5" fill="none" stroke="#ffffff" stroke-width="2.2" stroke-linecap="round" stroke-linejoin="round"/>
<path d="M978.0 885.0 C978.7 887.0 979.0 896.3 983.0 900.0 C987.0 903.7 1004.7 910.8 1008.0 912.5" fill="none" stroke="#ffffff" stroke-width="2.2" stroke-linecap="round" stroke-linejoin="round"/>
<path d="M878.0 750.0 L923.0 750.0" fill="none" stroke="#ffffff" stroke-width="2.2" stroke-linecap="round" stroke-linejoin="round"/>
<path d="M918.0 725.0 L895.5 790.0" fill="none" stroke="#ffffff" stroke-width="2.2" stroke-linecap="round" stroke-linejoin="round"/>
<path d="M920.5 737.5 C921.8 738.8 928.2 744.5 930.5 747.5 C932.8 750.5 935.3 760.3 938.0 760.0 C940.7 759.7 948.8 747.0 950.5 745.0" fill="none" stroke="#ffffff" stroke-width="2.2" stroke-linecap="round" stroke-linejoin="round"/>
<path d="M963.0 745.0 L968.0 797.5" fill="none" stroke="#ffffff" stroke-width="2.2" stroke-linecap="round" stroke-linejoin="round"/>
<path d="M958.0 787.5 L980.5 792.5" fill="none" stroke="#ffffff" stroke-width="2.2" stroke-linecap="round" stroke-linejoin="round"/>
<path d="M925.5 717.5 L985.5 700.0" fill="none" stroke="#ffffff" stroke-width="2.2" stroke-linecap="round" stroke-linejoin="round"/>
<path d="M813.0 935.0 L860.5 935.0" fill="none" stroke="#ffffff" stroke-width="2.2" stroke-linecap="round" stroke-linejoin="round"/>
<path d="M778.0 965.0 L813.0 940.0" fill="none" stroke="#ffffff" stroke-width="2.2" stroke-linecap="round" stroke-linejoin="round"/>
<path d="M898.0 965.0 L923.0 947.5" fill="none" stroke="#ffffff" stroke-width="2.2" stroke-linecap="round" stroke-linejoin="round"/>
<path d="M770.5 715.0 L803.0 700.0" fill="none" stroke="#ffffff" stroke-width="2.2" stroke-linecap="round" stroke-linejoin="round"/>
<path d="M1008.0 715.0 L1028.0 762.5" fill="none" stroke="#ffffff" stroke-width="2.2" stroke-linecap="round" stroke-linejoin="round"/>
<path d="M1048.0 707.5 C1053.7 707.2 1084.8 706.0 1090.5 705.0 C1096.2 704.0 1090.5 700.7 1090.5 700.0" fill="none" stroke="#ffffff" stroke-width="2.2" stroke-linecap="round" stroke-linejoin="round"/>
<path d="M1083.0 720.0 C1091.3 723.3 1135.5 741.3 1145.5 745.0 C1155.5 748.7 1154.7 748.2 1158.0 747.5 C1161.3 746.8 1168.8 741.0 1170.5 740.0" fill="none" stroke="#ffffff" stroke-width="2.2" stroke-linecap="round" stroke-linejoin="round"/>
<path d="M1138.0 740.0 C1134.7 744.7 1116.7 769.0 1113.0 775.0 C1109.3 781.0 1109.8 781.7 1110.5 785.0 C1111.2 788.3 1113.3 794.0 1118.0 800.0 C1122.7 806.0 1141.8 826.0 1145.5 830.0" fill="none" stroke="#ffffff" stroke-width="2.2" stroke-linecap="round" stroke-linejoin="round"/>
<path d="M1095.5 740.0 L1108.0 750.0" fill="none" stroke="#ffffff" stroke-width="2.2" stroke-linecap="round" stroke-linejoin="round"/>
<path d="M1043.0 725.0 C1046.0 724.3 1062.8 719.0 1065.5 720.0 C1068.2 721.0 1063.3 730.8 1063.0 732.5" fill="none" stroke="#ffffff" stroke-width="2.2" stroke-linecap="round" stroke-linejoin="round"/>
<path d="M1008.0 740.0 L1035.5 737.5" fill="none" stroke="#ffffff" stroke-width="2.2" stroke-linecap="round" stroke-linejoin="round"/>
<path d="M1008.0 787.5 L1033.0 792.5" fill="none" stroke="#ffffff" stroke-width="2.2" stroke-linecap="round" stroke-linejoin="round"/>
<path d="M1025.5 820.0 L1053.0 810.0" fill="none" stroke="#ffffff" stroke-width="2.2" stroke-linecap="round" stroke-linejoin="round"/>
<path d="M1008.0 855.0 L1045.5 870.0" fill="none" stroke="#ffffff" stroke-width="2.2" stroke-linecap="round" stroke-linejoin="round"/>
<path d="M1008.0 887.5 C1013.0 887.8 1038.8 888.3 1045.5 890.0 C1052.2 891.7 1056.3 898.7 1058.0 900.0" fill="none" stroke="#ffffff" stroke-width="2.2" stroke-linecap="round" stroke-linejoin="round"/>
<path d="M1018.0 917.5 L1035.5 917.5" fill="none" stroke="#ffffff" stroke-width="2.2" stroke-linecap="round" stroke-linejoin="round"/>
<path d="M1090.5 700.0 C1087.8 716.7 1072.2 796.7 1070.5 825.0 C1068.8 853.3 1075.3 893.8 1078.0 912.5 C1080.7 931.2 1088.8 958.0 1090.5 965.0" fill="none" stroke="#ffffff" stroke-width="2.2" stroke-linecap="round" stroke-linejoin="round"/>
<path d="M1050.5 915.0 L1068.0 910.0" fill="none" stroke="#ffffff" stroke-width="2.2" stroke-linecap="round" stroke-linejoin="round"/>
<path d="M1158.0 750.0 C1166.3 763.0 1211.5 830.8 1220.5 847.5 C1229.5 864.2 1225.8 868.0 1225.5 875.0 C1225.2 882.0 1217.7 888.0 1218.0 900.0 C1218.3 912.0 1226.7 956.3 1228.0 965.0" fill="none" stroke="#ffffff" stroke-width="2.2" stroke-linecap="round" stroke-linejoin="round"/>
<path d="M1190.5 725.0 C1190.2 735.0 1189.3 780.0 1188.0 800.0 C1186.7 820.0 1182.2 858.3 1180.5 875.0 C1178.8 891.7 1177.2 913.0 1175.5 925.0 C1173.8 937.0 1169.0 959.7 1168.0 965.0" fill="none" stroke="#ffffff" stroke-width="2.2" stroke-linecap="round" stroke-linejoin="round"/>
<path d="M1178.0 865.0 C1180.0 865.7 1188.0 865.3 1193.0 870.0 C1198.0 874.7 1210.2 889.3 1215.5 900.0 C1220.8 910.7 1230.7 943.3 1233.0 950.0" fill="none" stroke="#ffffff" stroke-width="2.2" stroke-linecap="round" stroke-linejoin="round"/>
<path d="M1183.0 885.0 C1185.7 885.3 1198.7 885.5 1203.0 887.5 C1207.3 889.5 1213.8 898.3 1215.5 900.0" fill="none" stroke="#ffffff" stroke-width="2.2" stroke-linecap="round" stroke-linejoin="round"/>
<path d="M1148.0 840.0 L1168.0 845.0" fill="none" stroke="#ffffff" stroke-width="2.2" stroke-linecap="round" stroke-linejoin="round"/>
<path d="M1250.5 725.0 C1247.5 732.3 1231.7 768.3 1228.0 780.0 C1224.3 791.7 1222.3 803.2 1223.0 812.5 C1223.7 821.8 1232.7 841.7 1233.0 850.0 C1233.3 858.3 1226.5 871.7 1225.5 875.0" fill="none" stroke="#ffffff" stroke-width="2.2" stroke-linecap="round" stroke-linejoin="round"/>
<path d="M1240.5 742.5 C1242.2 742.8 1250.7 743.3 1253.0 745.0 C1255.3 746.7 1252.7 752.3 1258.0 755.0 C1263.3 757.7 1281.7 759.0 1293.0 765.0 C1304.3 771.0 1336.3 795.3 1343.0 800.0" fill="none" stroke="#ffffff" stroke-width="2.2" stroke-linecap="round" stroke-linejoin="round"/>
<path d="M1275.5 737.5 L1295.5 765.0" fill="none" stroke="#ffffff" stroke-width="2.2" stroke-linecap="round" stroke-linejoin="round"/>
<path d="M1285.5 735.0 L1300.5 762.5" fill="none" stroke="#ffffff" stroke-width="2.2" stroke-linecap="round" stroke-linejoin="round"/>
<path d="M1298.0 732.5 L1313.0 760.0" fill="none" stroke="#ffffff" stroke-width="2.2" stroke-linecap="round" stroke-linejoin="round"/>
<path d="M1278.0 775.0 C1277.7 777.7 1273.5 788.3 1275.5 795.0 C1277.5 801.7 1290.7 821.0 1293.0 825.0" fill="none" stroke="#ffffff" stroke-width="2.2" stroke-linecap="round" stroke-linejoin="round"/>
<path d="M1285.5 772.5 L1300.5 815.0" fill="none" stroke="#ffffff" stroke-width="2.2" stroke-linecap="round" stroke-linejoin="round"/>
<path d="M1343.0 800.0 C1346.0 797.7 1355.5 787.5 1365.5 782.5 C1375.5 777.5 1405.3 765.5 1418.0 762.5 C1430.7 759.5 1454.8 760.3 1460.5 760.0" fill="none" stroke="#ffffff" stroke-width="2.2" stroke-linecap="round" stroke-linejoin="round"/>
<path d="M1328.0 845.0 C1331.0 845.0 1345.2 843.7 1350.5 845.0 C1355.8 846.3 1365.7 853.7 1368.0 855.0" fill="none" stroke="#ffffff" stroke-width="2.2" stroke-linecap="round" stroke-linejoin="round"/>
<path d="M1330.5 875.0 C1334.2 873.0 1349.0 869.3 1358.0 860.0 C1367.0 850.7 1390.0 816.3 1398.0 805.0 C1406.0 793.7 1415.3 779.0 1418.0 775.0" fill="none" stroke="#ffffff" stroke-width="2.2" stroke-linecap="round" stroke-linejoin="round"/>
<path d="M1365.5 777.5 L1375.5 807.5" fill="none" stroke="#ffffff" stroke-width="2.2" stroke-linecap="round" stroke-linejoin="round"/>
<path d="M1350.5 807.5 C1356.8 807.5 1385.0 805.5 1398.0 807.5 C1411.0 809.5 1436.0 821.8 1448.0 822.5 C1460.0 823.2 1482.7 813.8 1488.0 812.5" fill="none" stroke="#ffffff" stroke-width="2.2" stroke-linecap="round" stroke-linejoin="round"/>
<path d="M1358.0 855.0 L1388.0 855.0" fill="none" stroke="#ffffff" stroke-width="2.2" stroke-linecap="round" stroke-linejoin="round"/>
<path d="M1418.0 850.0 L1488.0 875.0" fill="none" stroke="#ffffff" stroke-width="2.2" stroke-linecap="round" stroke-linejoin="round"/>
<path d="M1388.0 870.0 L1408.0 885.0" fill="none" stroke="#ffffff" stroke-width="2.2" stroke-linecap="round" stroke-linejoin="round"/>
<path d="M1325.5 890.0 C1335.2 894.7 1383.0 922.0 1398.0 925.0 C1413.0 928.0 1426.0 909.2 1438.0 912.5 C1450.0 915.8 1481.3 945.0 1488.0 950.0" fill="none" stroke="#ffffff" stroke-width="2.2" stroke-linecap="round" stroke-linejoin="round"/>
<path d="M1330.5 900.0 L1338.0 925.0" fill="none" stroke="#ffffff" stroke-width="2.2" stroke-linecap="round" stroke-linejoin="round"/>
<path d="M1358.0 925.0 L1383.0 920.0" fill="none" stroke="#ffffff" stroke-width="2.2" stroke-linecap="round" stroke-linejoin="round"/>
<path d="M1353.0 892.5 L1378.0 932.5" fill="none" stroke="#ffffff" stroke-width="2.2" stroke-linecap="round" stroke-linejoin="round"/>
<path d="M1340.5 937.5 L1378.0 942.5" fill="none" stroke="#ffffff" stroke-width="2.2" stroke-linecap="round" stroke-linejoin="round"/>
<path d="M1403.0 910.0 L1388.0 950.0" fill="none" stroke="#ffffff" stroke-width="2.2" stroke-linecap="round" stroke-linejoin="round"/>
<path d="M1140.5 850.0 C1142.8 848.7 1153.7 840.0 1158.0 840.0 C1162.3 840.0 1171.0 848.7 1173.0 850.0" fill="none" stroke="#ffffff" stroke-width="2.2" stroke-linecap="round" stroke-linejoin="round"/>
<path d="M1460.0 700.0 C1460.3 702.0 1458.5 712.3 1462.5 715.0 C1466.5 717.7 1481.3 720.3 1490.0 720.0 C1498.7 719.7 1522.5 713.5 1527.5 712.5" fill="none" stroke="#ffffff" stroke-width="2.2" stroke-linecap="round" stroke-linejoin="round"/>
<path d="M1527.5 700.0 C1529.2 703.3 1535.0 721.3 1540.0 725.0 C1545.0 728.7 1560.3 726.5 1565.0 727.5 C1569.7 728.5 1573.7 731.8 1575.0 732.5" fill="none" stroke="#ffffff" stroke-width="2.2" stroke-linecap="round" stroke-linejoin="round"/>
<path d="M1615.0 700.0 L1620.0 715.0" fill="none" stroke="#ffffff" stroke-width="2.2" stroke-linecap="round" stroke-linejoin="round"/>
<path d="M1625.0 745.0 C1627.0 747.7 1633.3 758.3 1640.0 765.0 C1646.7 771.7 1666.7 789.7 1675.0 795.0 C1683.3 800.3 1698.5 801.0 1702.5 805.0 C1706.5 809.0 1704.7 822.3 1705.0 825.0" fill="none" stroke="#ffffff" stroke-width="2.2" stroke-linecap="round" stroke-linejoin="round"/>
<path d="M1640.0 765.0 L1615.0 787.5" fill="none" stroke="#ffffff" stroke-width="2.2" stroke-linecap="round" stroke-linejoin="round"/>
<path d="M1697.5 750.0 C1699.5 753.0 1713.5 765.5 1712.5 772.5 C1711.5 779.5 1693.0 798.5 1690.0 802.5" fill="none" stroke="#ffffff" stroke-width="2.2" stroke-linecap="round" stroke-linejoin="round"/>
<path d="M1712.5 772.5 C1719.5 774.2 1755.3 782.0 1765.0 785.0 C1774.7 788.0 1782.3 793.7 1785.0 795.0" fill="none" stroke="#ffffff" stroke-width="2.2" stroke-linecap="round" stroke-linejoin="round"/>
<path d="M1725.0 760.0 C1727.7 761.3 1741.7 767.3 1745.0 770.0 C1748.3 772.7 1749.3 778.7 1750.0 780.0" fill="none" stroke="#ffffff" stroke-width="2.2" stroke-linecap="round" stroke-linejoin="round"/>
<path d="M1720.0 710.0 L1752.5 732.5" fill="none" stroke="#ffffff" stroke-width="2.2" stroke-linecap="round" stroke-linejoin="round"/>
<path d="M1777.5 725.0 L1805.0 715.0" fill="none" stroke="#ffffff" stroke-width="2.2" stroke-linecap="round" stroke-linejoin="round"/>
<path d="M1790.0 700.0 C1792.7 702.7 1806.7 713.3 1810.0 720.0 C1813.3 726.7 1811.0 742.7 1815.0 750.0 C1819.0 757.3 1834.7 768.3 1840.0 775.0 C1845.3 781.7 1853.0 796.7 1855.0 800.0" fill="none" stroke="#ffffff" stroke-width="2.2" stroke-linecap="round" stroke-linejoin="round"/>
<path d="M1852.5 707.5 L1877.5 720.0" fill="none" stroke="#ffffff" stroke-width="2.2" stroke-linecap="round" stroke-linejoin="round"/>
<path d="M1890.0 737.5 L1920.0 757.5" fill="none" stroke="#ffffff" stroke-width="2.2" stroke-linecap="round" stroke-linejoin="round"/>
<path d="M1880.0 755.0 L1890.0 762.5" fill="none" stroke="#ffffff" stroke-width="2.2" stroke-linecap="round" stroke-linejoin="round"/>
<path d="M1835.0 785.0 L1852.5 770.0" fill="none" stroke="#ffffff" stroke-width="2.2" stroke-linecap="round" stroke-linejoin="round"/>
<path d="M1782.5 785.0 C1782.5 788.7 1784.5 807.2 1782.5 812.5 C1780.5 817.8 1769.5 818.3 1767.5 825.0 C1765.5 831.7 1767.5 857.5 1767.5 862.5" fill="none" stroke="#ffffff" stroke-width="2.2" stroke-linecap="round" stroke-linejoin="round"/>
<path d="M1777.5 800.0 C1782.5 800.0 1808.7 796.7 1815.0 800.0 C1821.3 803.3 1823.7 821.7 1825.0 825.0" fill="none" stroke="#ffffff" stroke-width="2.2" stroke-linecap="round" stroke-linejoin="round"/>
<path d="M1790.0 812.5 L1802.5 840.0" fill="none" stroke="#ffffff" stroke-width="2.2" stroke-linecap="round" stroke-linejoin="round"/>
<path d="M1765.0 832.5 L1815.0 825.0" fill="none" stroke="#ffffff" stroke-width="2.2" stroke-linecap="round" stroke-linejoin="round"/>
<path d="M1825.0 825.0 C1825.3 828.3 1824.2 844.0 1827.5 850.0 C1830.8 856.0 1847.0 867.3 1850.0 870.0" fill="none" stroke="#ffffff" stroke-width="2.2" stroke-linecap="round" stroke-linejoin="round"/>
<path d="M1765.0 862.5 C1769.0 864.8 1787.0 878.3 1795.0 880.0 C1803.0 881.7 1821.0 875.7 1825.0 875.0" fill="none" stroke="#ffffff" stroke-width="2.2" stroke-linecap="round" stroke-linejoin="round"/>
<path d="M1800.0 840.0 L1840.0 845.0" fill="none" stroke="#ffffff" stroke-width="2.2" stroke-linecap="round" stroke-linejoin="round"/>
<path d="M1490.0 800.0 C1495.0 799.3 1520.8 793.7 1527.5 795.0 C1534.2 796.3 1535.0 806.0 1540.0 810.0 C1545.0 814.0 1561.7 823.0 1565.0 825.0" fill="none" stroke="#ffffff" stroke-width="2.2" stroke-linecap="round" stroke-linejoin="round"/>
<path d="M1527.5 795.0 L1527.5 825.0" fill="none" stroke="#ffffff" stroke-width="2.2" stroke-linecap="round" stroke-linejoin="round"/>
<path d="M1440.0 805.0 L1465.0 810.0" fill="none" stroke="#ffffff" stroke-width="2.2" stroke-linecap="round" stroke-linejoin="round"/>
<path d="M1440.0 862.5 L1490.0 875.0" fill="none" stroke="#ffffff" stroke-width="2.2" stroke-linecap="round" stroke-linejoin="round"/>
<path d="M1447.5 875.0 L1465.0 855.0" fill="none" stroke="#ffffff" stroke-width="2.2" stroke-linecap="round" stroke-linejoin="round"/>
<path d="M1440.0 895.0 L1455.0 875.0" fill="none" stroke="#ffffff" stroke-width="2.2" stroke-linecap="round" stroke-linejoin="round"/>
<path d="M1587.5 815.0 L1635.0 840.0" fill="none" stroke="#ffffff" stroke-width="2.2" stroke-linecap="round" stroke-linejoin="round"/>
<path d="M1635.0 850.0 L1645.0 870.0" fill="none" stroke="#ffffff" stroke-width="2.2" stroke-linecap="round" stroke-linejoin="round"/>
<path d="M1672.5 872.5 C1674.8 873.5 1684.3 874.0 1690.0 880.0 C1695.7 886.0 1710.7 908.2 1715.0 917.5 C1719.3 926.8 1721.5 945.7 1722.5 950.0" fill="none" stroke="#ffffff" stroke-width="2.2" stroke-linecap="round" stroke-linejoin="round"/>
<path d="M1672.5 885.0 C1672.8 890.3 1671.0 916.7 1675.0 925.0 C1679.0 933.3 1698.8 944.5 1702.5 947.5" fill="none" stroke="#ffffff" stroke-width="2.2" stroke-linecap="round" stroke-linejoin="round"/>
<path d="M1690.0 895.0 L1715.0 905.0" fill="none" stroke="#ffffff" stroke-width="2.2" stroke-linecap="round" stroke-linejoin="round"/>
<path d="M1727.5 900.0 L1747.5 890.0" fill="none" stroke="#ffffff" stroke-width="2.2" stroke-linecap="round" stroke-linejoin="round"/>
<path d="M1772.5 930.0 L1802.5 950.0" fill="none" stroke="#ffffff" stroke-width="2.2" stroke-linecap="round" stroke-linejoin="round"/>
<path d="M1840.0 947.5 L1890.0 942.5" fill="none" stroke="#ffffff" stroke-width="2.2" stroke-linecap="round" stroke-linejoin="round"/>
<path d="M590.0 135.0 C592.7 141.7 597.6 146.7 610.0 185.0 C622.4 223.3 670.6 377.7 683.0 422.0 C695.4 466.3 696.3 497.9 703.0 517.0 C709.7 536.1 724.3 547.3 733.0 565.0 C741.7 582.7 762.8 636.8 768.0 650.0 C773.2 663.2 771.7 657.9 772.0 664.0 C772.3 670.1 772.7 688.5 770.0 696.0 C767.3 703.5 756.0 714.7 752.0 720.0 C748.0 725.3 740.0 728.5 740.0 736.0 C740.0 743.5 746.7 764.3 752.0 776.0 C757.3 787.7 769.9 807.5 780.0 824.0 C790.1 840.5 817.3 881.2 828.0 900.0 C838.7 918.8 855.7 956.3 860.0 965.0" fill="none" stroke="#ffffff" stroke-width="5" stroke-linecap="round" stroke-linejoin="round"/>
<path d="M668.0 435.0 C659.3 442.3 621.7 475.7 603.0 490.0 C584.3 504.3 540.4 532.7 528.0 542.0 C515.6 551.3 513.3 550.3 510.0 560.0 C506.7 569.7 503.7 601.7 503.0 615.0 C502.3 628.3 506.3 645.7 505.0 660.0 C503.7 674.3 500.6 706.7 493.0 722.0 C485.4 737.3 454.0 767.9 448.0 775.0" fill="none" stroke="#ffffff" stroke-width="5" stroke-linecap="round" stroke-linejoin="round"/>
<path d="M1103.0 147.0 C1095.7 151.7 1060.7 172.7 1048.0 182.0 C1035.3 191.3 1020.7 203.9 1008.0 217.0 C995.3 230.1 965.4 264.3 953.0 280.0 C940.6 295.7 924.2 321.7 915.0 335.0 C905.8 348.3 892.7 370.3 884.0 380.0 C875.3 389.7 856.9 402.9 850.0 408.0 C843.1 413.1 834.4 416.7 832.0 418.0" fill="none" stroke="#ffffff" stroke-width="5" stroke-linecap="round" stroke-linejoin="round"/>
<path d="M683.0 432.0 C688.7 429.9 713.1 419.7 726.0 416.0 C738.9 412.3 765.9 403.7 780.0 404.0 C794.1 404.3 825.1 416.1 832.0 418.0" fill="none" stroke="#ffffff" stroke-width="5" stroke-linecap="round" stroke-linejoin="round"/>
<path d="M880.0 372.0 C887.7 378.4 929.2 410.9 938.0 420.0 C946.8 429.1 945.7 429.9 946.0 440.0 C946.3 450.1 940.8 488.5 940.0 496.0" fill="none" stroke="#ffffff" stroke-width="5" stroke-linecap="round" stroke-linejoin="round"/>
<path d="M828.0 420.0 C828.0 422.7 828.3 416.0 828.0 440.0 C827.7 464.0 826.5 570.7 826.0 600.0 C825.5 629.3 825.3 648.0 824.0 660.0 C822.7 672.0 821.9 683.1 816.0 690.0 C810.1 696.9 788.5 707.5 780.0 712.0 C771.5 716.5 758.9 720.8 752.0 724.0 C745.1 727.2 736.3 732.3 728.0 736.0 C719.7 739.7 697.2 748.0 690.0 752.0 C682.8 756.0 676.9 760.9 674.0 766.0 C671.1 771.1 668.5 780.1 668.0 790.0 C667.5 799.9 669.1 831.3 670.0 840.0 C670.9 848.7 673.3 849.7 675.0 855.0 C676.7 860.3 675.9 871.3 683.0 880.0 C690.1 888.7 719.3 912.4 728.0 920.0 C736.7 927.6 744.4 931.0 748.0 937.0 C751.6 943.0 754.1 961.3 755.0 965.0" fill="none" stroke="#ffffff" stroke-width="5" stroke-linecap="round" stroke-linejoin="round"/>
<path d="M816.0 690.0 C819.2 690.8 833.3 692.8 840.0 696.0 C846.7 699.2 859.3 712.9 866.0 714.0 C872.7 715.1 882.8 702.9 890.0 704.0 C897.2 705.1 910.7 717.2 920.0 722.0 C929.3 726.8 948.3 734.3 960.0 740.0 C971.7 745.7 1001.6 761.7 1008.0 765.0" fill="none" stroke="#ffffff" stroke-width="5" stroke-linecap="round" stroke-linejoin="round"/>
<path d="M1105.0 135.0 C1104.7 139.0 1104.3 153.4 1103.0 165.0 C1101.7 176.6 1098.7 202.7 1095.0 222.0 C1091.3 241.3 1081.0 290.3 1075.0 310.0 C1069.0 329.7 1056.0 358.0 1050.0 370.0 C1044.0 382.0 1035.3 389.3 1030.0 400.0 C1024.7 410.7 1013.3 439.1 1010.0 450.0 C1006.7 460.9 1005.4 465.3 1005.0 482.0 C1004.6 498.7 1005.7 556.6 1007.0 575.0 C1008.3 593.4 1011.9 610.0 1015.0 620.0 C1018.1 630.0 1027.1 639.3 1030.0 650.0 C1032.9 660.7 1035.0 686.7 1037.0 700.0 C1039.0 713.3 1042.9 736.7 1045.0 750.0 C1047.1 763.3 1051.3 786.7 1053.0 800.0 C1054.7 813.3 1057.1 836.7 1058.0 850.0 C1058.9 863.3 1060.0 884.7 1060.0 900.0 C1060.0 915.3 1058.3 956.3 1058.0 965.0" fill="none" stroke="#ffffff" stroke-width="5" stroke-linecap="round" stroke-linejoin="round"/>
<path d="M1920.0 267.0 C1918.0 268.1 1915.0 273.7 1905.0 275.0 C1895.0 276.3 1857.7 277.7 1845.0 277.0 C1832.3 276.3 1816.7 269.6 1810.0 270.0 C1803.3 270.4 1797.7 274.7 1795.0 280.0 C1792.3 285.3 1798.4 295.3 1790.0 310.0 C1781.6 324.7 1745.3 373.3 1732.0 390.0 C1718.7 406.7 1698.9 428.1 1690.0 435.0 C1681.1 441.9 1670.7 440.0 1665.0 442.0 C1659.3 444.0 1650.1 439.3 1647.0 450.0 C1643.9 460.7 1642.3 507.3 1642.0 522.0 C1641.7 536.7 1646.6 551.6 1645.0 560.0 C1643.4 568.4 1631.3 574.3 1630.0 585.0 C1628.7 595.7 1628.7 630.7 1635.0 640.0 C1641.3 649.3 1666.3 650.3 1677.0 655.0 C1687.7 659.7 1705.0 677.0 1715.0 675.0 C1725.0 673.0 1738.7 645.3 1752.0 640.0 C1765.3 634.7 1792.6 635.0 1815.0 635.0 C1837.4 635.0 1906.0 639.3 1920.0 640.0" fill="none" stroke="#ffffff" stroke-width="5" stroke-linecap="round" stroke-linejoin="round"/>
<path d="M1905.0 275.0 C1903.0 281.3 1895.3 309.3 1890.0 322.0 C1884.7 334.7 1861.0 357.6 1865.0 370.0 C1869.0 382.4 1912.7 409.0 1920.0 415.0" fill="none" stroke="#ffffff" stroke-width="5" stroke-linecap="round" stroke-linejoin="round"/>
<path d="M1747.0 965.0 C1748.7 963.0 1744.9 967.3 1760.0 950.0 C1775.1 932.7 1838.7 858.3 1860.0 835.0 C1881.3 811.7 1912.0 783.0 1920.0 775.0" fill="none" stroke="#ffffff" stroke-width="5" stroke-linecap="round" stroke-linejoin="round"/>
<path d="M1440.0 920.0 L1475.0 955.0" fill="none" stroke="#ffffff" stroke-width="5" stroke-linecap="round" stroke-linejoin="round"/>
<path d="M88.0 700.0 C87.6 702.0 87.4 708.3 85.0 715.0 C82.6 721.7 71.6 741.7 70.0 750.0 C68.4 758.3 75.9 772.1 73.0 777.0 C70.1 781.9 51.3 785.7 48.0 787.0" fill="none" stroke="#ffffff" stroke-width="5" stroke-linecap="round" stroke-linejoin="round"/>
<path d="M148.0 845.0 L193.0 812.0" fill="none" stroke="#ffffff" stroke-width="5" stroke-linecap="round" stroke-linejoin="round"/>
<path d="M940.0 496.0 L938.0 520.0" fill="none" stroke="#ffffff" stroke-width="5" stroke-linecap="round" stroke-linejoin="round"/>
<path d="M338.0 135.0 C334.3 143.3 318.0 181.0 310.0 197.0 C302.0 213.0 284.3 239.9 278.0 255.0 C271.7 270.1 265.7 296.0 263.0 310.0 C260.3 324.0 257.6 343.3 258.0 360.0 C258.4 376.7 260.7 419.4 266.0 435.0 C271.3 450.6 290.4 467.0 298.0 477.0 C305.6 487.0 314.7 500.7 323.0 510.0 C331.3 519.3 350.7 536.7 360.0 547.0 C369.3 557.3 388.1 578.6 393.0 587.0 C397.9 595.4 396.3 602.0 397.0 610.0 C397.7 618.0 397.2 637.0 398.0 647.0 C398.8 657.0 401.4 676.6 403.0 685.0 C404.6 693.4 405.3 698.7 410.0 710.0 C414.7 721.3 432.9 758.0 438.0 770.0 C443.1 782.0 445.1 786.0 448.0 800.0 C450.9 814.0 456.0 858.3 460.0 875.0 C464.0 891.7 472.9 913.0 478.0 925.0 C483.1 937.0 495.3 959.7 498.0 965.0" fill="none" stroke="#f3d99a" stroke-width="5.8" stroke-linecap="round" stroke-linejoin="round"/>
<path d="M48.0 667.0 C51.6 671.4 68.3 692.9 75.0 700.0 C81.7 707.1 90.0 710.0 98.0 720.0 C106.0 730.0 125.0 764.7 135.0 775.0 C145.0 785.3 159.7 790.3 173.0 797.0 C186.3 803.7 215.0 812.6 235.0 825.0 C255.0 837.4 307.9 878.4 323.0 890.0 C338.1 901.6 340.0 902.0 348.0 912.0 C356.0 922.0 378.3 957.9 383.0 965.0" fill="none" stroke="#f3d99a" stroke-width="5.8" stroke-linecap="round" stroke-linejoin="round"/>
<path d="M1920.0 462.0 C1914.3 459.3 1887.7 443.6 1877.0 442.0 C1866.3 440.4 1850.0 443.6 1840.0 450.0 C1830.0 456.4 1812.0 473.1 1802.0 490.0 C1792.0 506.9 1775.0 557.7 1765.0 577.0 C1755.0 596.3 1737.0 620.6 1727.0 635.0 C1717.0 649.4 1698.3 675.0 1690.0 685.0 C1681.7 695.0 1675.0 702.4 1665.0 710.0 C1655.0 717.6 1631.7 735.7 1615.0 742.0 C1598.3 748.3 1553.3 753.9 1540.0 757.0 C1526.7 760.1 1521.7 761.9 1515.0 765.0 C1508.3 768.1 1496.7 773.7 1490.0 780.0 C1483.3 786.3 1471.7 802.0 1465.0 812.0 C1458.3 822.0 1447.6 839.9 1440.0 855.0 C1432.4 870.1 1415.6 910.3 1408.0 925.0 C1400.4 939.7 1386.3 959.7 1383.0 965.0" fill="none" stroke="#f3d99a" stroke-width="5.8" stroke-linecap="round" stroke-linejoin="round"/>
<path d="M1590.0 755.0 C1590.7 757.7 1591.7 768.3 1595.0 775.0 C1598.3 781.7 1607.4 797.0 1615.0 805.0 C1622.6 813.0 1647.1 831.0 1652.0 835.0" fill="none" stroke="#fce6c6" stroke-width="5.5" stroke-linecap="round" stroke-linejoin="round"/>
<path d="M1585.0 757.0 C1585.3 759.4 1588.3 771.5 1587.0 775.0 C1585.7 778.5 1581.9 783.0 1575.0 783.0 C1568.1 783.0 1543.0 776.7 1535.0 775.0 C1527.0 773.3 1517.7 770.7 1515.0 770.0" fill="none" stroke="#fce6c6" stroke-width="5.5" stroke-linecap="round" stroke-linejoin="round"/>
<path d="M1440.0 737.0 C1444.0 741.7 1462.0 766.3 1470.0 772.0 C1478.0 777.7 1496.0 778.9 1500.0 780.0" fill="none" stroke="#fce6c6" stroke-width="5.5" stroke-linecap="round" stroke-linejoin="round"/>
<path d="M838.0 418.0 C839.9 418.0 848.3 416.9 852.0 418.0 C855.7 419.1 863.6 423.9 866.0 426.0 C868.4 428.1 869.5 432.9 870.0 434.0" fill="none" stroke="#fce6c6" stroke-width="5.5" stroke-linecap="round" stroke-linejoin="round"/>
<path d="M830.0 492.0 C831.3 492.5 836.0 496.0 840.0 496.0 C844.0 496.0 854.7 492.8 860.0 492.0 C865.3 491.2 874.7 489.5 880.0 490.0 C885.3 490.5 895.2 494.1 900.0 496.0 C904.8 497.9 913.9 502.9 916.0 504.0" fill="none" stroke="#fce6c6" stroke-width="5.5" stroke-linecap="round" stroke-linejoin="round"/>
<path d="M864.0 476.0 C863.5 477.3 861.9 483.1 860.0 486.0 C858.1 488.9 851.3 496.4 850.0 498.0" fill="none" stroke="#fce6c6" stroke-width="5.5" stroke-linecap="round" stroke-linejoin="round"/>
<path d="M338.0 135.0 C334.3 143.3 318.0 181.0 310.0 197.0 C302.0 213.0 284.3 239.9 278.0 255.0 C271.7 270.1 265.7 296.0 263.0 310.0 C260.3 324.0 257.6 343.3 258.0 360.0 C258.4 376.7 260.7 419.4 266.0 435.0 C271.3 450.6 290.4 467.0 298.0 477.0 C305.6 487.0 314.7 500.7 323.0 510.0 C331.3 519.3 350.7 536.7 360.0 547.0 C369.3 557.3 388.1 578.6 393.0 587.0 C397.9 595.4 396.3 602.0 397.0 610.0 C397.7 618.0 397.2 637.0 398.0 647.0 C398.8 657.0 401.4 676.6 403.0 685.0 C404.6 693.4 405.3 698.7 410.0 710.0 C414.7 721.3 432.9 758.0 438.0 770.0 C443.1 782.0 445.1 786.0 448.0 800.0 C450.9 814.0 456.0 858.3 460.0 875.0 C464.0 891.7 472.9 913.0 478.0 925.0 C483.1 937.0 495.3 959.7 498.0 965.0" fill="none" stroke="#fdf2cc" stroke-width="3.9" stroke-linecap="round" stroke-linejoin="round"/>
<path d="M48.0 667.0 C51.6 671.4 68.3 692.9 75.0 700.0 C81.7 707.1 90.0 710.0 98.0 720.0 C106.0 730.0 125.0 764.7 135.0 775.0 C145.0 785.3 159.7 790.3 173.0 797.0 C186.3 803.7 215.0 812.6 235.0 825.0 C255.0 837.4 307.9 878.4 323.0 890.0 C338.1 901.6 340.0 902.0 348.0 912.0 C356.0 922.0 378.3 957.9 383.0 965.0" fill="none" stroke="#fdf2cc" stroke-width="3.9" stroke-linecap="round" stroke-linejoin="round"/>
<path d="M1920.0 462.0 C1914.3 459.3 1887.7 443.6 1877.0 442.0 C1866.3 440.4 1850.0 443.6 1840.0 450.0 C1830.0 456.4 1812.0 473.1 1802.0 490.0 C1792.0 506.9 1775.0 557.7 1765.0 577.0 C1755.0 596.3 1737.0 620.6 1727.0 635.0 C1717.0 649.4 1698.3 675.0 1690.0 685.0 C1681.7 695.0 1675.0 702.4 1665.0 710.0 C1655.0 717.6 1631.7 735.7 1615.0 742.0 C1598.3 748.3 1553.3 753.9 1540.0 757.0 C1526.7 760.1 1521.7 761.9 1515.0 765.0 C1508.3 768.1 1496.7 773.7 1490.0 780.0 C1483.3 786.3 1471.7 802.0 1465.0 812.0 C1458.3 822.0 1447.6 839.9 1440.0 855.0 C1432.4 870.1 1415.6 910.3 1408.0 925.0 C1400.4 939.7 1386.3 959.7 1383.0 965.0" fill="none" stroke="#fdf2cc" stroke-width="3.9" stroke-linecap="round" stroke-linejoin="round"/>
<path d="M1443.0 720.0 C1450.7 724.8 1487.1 747.6 1501.0 756.0 C1514.9 764.4 1536.5 776.6 1547.0 783.0 C1557.5 789.4 1568.5 797.1 1580.0 804.0 C1591.5 810.9 1618.9 826.9 1633.0 835.0 C1647.1 843.1 1671.9 857.4 1686.0 865.0 C1700.1 872.6 1724.9 885.5 1739.0 892.0 C1753.1 898.5 1777.7 909.3 1792.0 914.0 C1806.3 918.7 1828.9 923.0 1846.0 927.0 C1863.1 931.0 1910.1 941.7 1920.0 944.0" fill="none" stroke="#f0c584" stroke-width="11.5" stroke-linecap="round"/>
<path d="M1443.0 720.0 C1450.7 724.8 1487.1 747.6 1501.0 756.0 C1514.9 764.4 1536.5 776.6 1547.0 783.0 C1557.5 789.4 1568.5 797.1 1580.0 804.0 C1591.5 810.9 1618.9 826.9 1633.0 835.0 C1647.1 843.1 1671.9 857.4 1686.0 865.0 C1700.1 872.6 1724.9 885.5 1739.0 892.0 C1753.1 898.5 1777.7 909.3 1792.0 914.0 C1806.3 918.7 1828.9 923.0 1846.0 927.0 C1863.1 931.0 1910.1 941.7 1920.0 944.0" fill="none" stroke="#fde2b8" stroke-width="9.2" stroke-linecap="round"/>
<path d="M140.0 126.0 C141.3 127.3 146.0 132.0 150.0 136.0 C154.0 140.0 164.7 150.1 170.0 156.0 C175.3 161.9 185.2 173.3 190.0 180.0 C194.8 186.7 202.0 199.3 206.0 206.0 C210.0 212.7 215.5 223.6 220.0 230.0 C224.5 236.4 234.7 248.1 240.0 254.0 C245.3 259.9 254.7 269.2 260.0 274.0 C265.3 278.8 274.7 286.3 280.0 290.0 C285.3 293.7 294.7 299.3 300.0 302.0 C305.3 304.7 314.7 308.0 320.0 310.0 C325.3 312.0 334.7 315.3 340.0 317.0 C345.3 318.7 352.0 321.0 360.0 323.0 C368.0 325.0 389.3 329.9 400.0 332.0 C410.7 334.1 426.9 336.9 440.0 339.0 C453.1 341.1 484.7 345.2 498.0 348.0 C511.3 350.8 528.1 356.4 540.0 360.0 C551.9 363.6 573.7 371.4 587.0 375.0 C600.3 378.6 626.3 384.1 640.0 387.0 C653.7 389.9 677.7 394.2 690.0 397.0 C702.3 399.8 722.7 405.6 732.0 408.0 C741.3 410.4 749.6 411.8 760.0 415.0 C770.4 418.2 798.4 427.1 810.0 432.0 C821.6 436.9 837.0 446.3 847.0 452.0 C857.0 457.7 875.0 467.9 885.0 475.0 C895.0 482.1 913.7 497.7 922.0 505.0 C930.3 512.3 940.3 523.1 947.0 530.0 C953.7 536.9 965.3 549.7 972.0 557.0 C978.7 564.3 990.3 577.0 997.0 585.0 C1003.7 593.0 1015.3 608.7 1022.0 617.0 C1028.7 625.3 1039.3 639.3 1047.0 647.0 C1054.7 654.7 1068.5 667.7 1080.0 675.0 C1091.5 682.3 1119.7 696.1 1133.0 702.0 C1146.3 707.9 1167.6 716.5 1180.0 719.0 C1192.4 721.5 1207.7 723.7 1226.0 721.0 C1244.3 718.3 1298.7 702.2 1317.0 699.0 C1335.3 695.8 1350.7 696.9 1363.0 697.0 C1375.3 697.1 1398.3 697.3 1409.0 700.0 C1419.7 702.7 1430.7 710.1 1443.0 717.0 C1455.3 723.9 1487.1 743.7 1501.0 752.0 C1514.9 760.3 1536.5 772.6 1547.0 779.0 C1557.5 785.4 1568.5 793.1 1580.0 800.0 C1591.5 806.9 1618.9 822.9 1633.0 831.0 C1647.1 839.1 1671.9 853.3 1686.0 861.0 C1700.1 868.7 1724.9 882.2 1739.0 889.0 C1753.1 895.8 1777.7 907.2 1792.0 912.0 C1806.3 916.8 1828.9 921.0 1846.0 925.0 C1863.1 929.0 1910.1 939.7 1920.0 942.0" fill="none" stroke="#f0c584" stroke-width="11.5" stroke-linecap="round" stroke-linejoin="round"/>
<path d="M140.0 126.0 C141.3 127.3 146.0 132.0 150.0 136.0 C154.0 140.0 164.7 150.1 170.0 156.0 C175.3 161.9 185.2 173.3 190.0 180.0 C194.8 186.7 202.0 199.3 206.0 206.0 C210.0 212.7 215.5 223.6 220.0 230.0 C224.5 236.4 234.7 248.1 240.0 254.0 C245.3 259.9 254.7 269.2 260.0 274.0 C265.3 278.8 274.7 286.3 280.0 290.0 C285.3 293.7 294.7 299.3 300.0 302.0 C305.3 304.7 314.7 308.0 320.0 310.0 C325.3 312.0 334.7 315.3 340.0 317.0 C345.3 318.7 352.0 321.0 360.0 323.0 C368.0 325.0 389.3 329.9 400.0 332.0 C410.7 334.1 426.9 336.9 440.0 339.0 C453.1 341.1 484.7 345.2 498.0 348.0 C511.3 350.8 528.1 356.4 540.0 360.0 C551.9 363.6 573.7 371.4 587.0 375.0 C600.3 378.6 626.3 384.1 640.0 387.0 C653.7 389.9 677.7 394.2 690.0 397.0 C702.3 399.8 722.7 405.6 732.0 408.0 C741.3 410.4 749.6 411.8 760.0 415.0 C770.4 418.2 798.4 427.1 810.0 432.0 C821.6 436.9 837.0 446.3 847.0 452.0 C857.0 457.7 875.0 467.9 885.0 475.0 C895.0 482.1 913.7 497.7 922.0 505.0 C930.3 512.3 940.3 523.1 947.0 530.0 C953.7 536.9 965.3 549.7 972.0 557.0 C978.7 564.3 990.3 577.0 997.0 585.0 C1003.7 593.0 1015.3 608.7 1022.0 617.0 C1028.7 625.3 1039.3 639.3 1047.0 647.0 C1054.7 654.7 1068.5 667.7 1080.0 675.0 C1091.5 682.3 1119.7 696.1 1133.0 702.0 C1146.3 707.9 1167.6 716.5 1180.0 719.0 C1192.4 721.5 1207.7 723.7 1226.0 721.0 C1244.3 718.3 1298.7 702.2 1317.0 699.0 C1335.3 695.8 1350.7 696.9 1363.0 697.0 C1375.3 697.1 1398.3 697.3 1409.0 700.0 C1419.7 702.7 1430.7 710.1 1443.0 717.0 C1455.3 723.9 1487.1 743.7 1501.0 752.0 C1514.9 760.3 1536.5 772.6 1547.0 779.0 C1557.5 785.4 1568.5 793.1 1580.0 800.0 C1591.5 806.9 1618.9 822.9 1633.0 831.0 C1647.1 839.1 1671.9 853.3 1686.0 861.0 C1700.1 868.7 1724.9 882.2 1739.0 889.0 C1753.1 895.8 1777.7 907.2 1792.0 912.0 C1806.3 916.8 1828.9 921.0 1846.0 925.0 C1863.1 929.0 1910.1 939.7 1920.0 942.0" fill="none" stroke="#fde2b8" stroke-width="9.2" stroke-linecap="round" stroke-linejoin="round"/>
</svg>
<svg width="1872" height="830" viewBox="48 135 1872 830" style="position:absolute;left:0;top:0">
<defs><linearGradient id="gp" x1="0" y1="0" x2="0" y2="1"><stop offset="0" stop-color="#f77fdc"/><stop offset="1" stop-color="#d64bb0"/></linearGradient><linearGradient id="gr" x1="0" y1="0" x2="0" y2="1"><stop offset="0" stop-color="#f2431a"/><stop offset="1" stop-color="#c92000"/></linearGradient><linearGradient id="gg" x1="0" y1="0" x2="0" y2="1"><stop offset="0" stop-color="#93cc5a"/><stop offset="1" stop-color="#66a436"/></linearGradient><filter id="sh" x="-30%" y="-30%" width="160%" height="160%"><feGaussianBlur in="SourceAlpha" stdDeviation="1"/><feOffset dy="0.5"/><feComponentTransfer><feFuncA type="linear" slope="0.35"/></feComponentTransfer><feMerge><feMergeNode/><feMergeNode in="SourceGraphic"/></feMerge></filter></defs>
<text x="65.5" y="215.0" transform="rotate(-48.8 65.5 215.0)" text-anchor="middle" dominant-baseline="central" textLength="53.2" lengthAdjust="spacingAndGlyphs" font-family="Liberation Sans" font-size="11" font-style="normal" font-weight="normal" fill="#919191" stroke="#f6f6f3" stroke-width="2.2" paint-order="stroke">du Taulard</text>
<text x="249.2" y="183.1" transform="rotate(36.6 249.2 183.1)" text-anchor="middle" dominant-baseline="central" textLength="90.3" lengthAdjust="spacingAndGlyphs" font-family="Liberation Sans" font-size="11" font-style="normal" font-weight="normal" fill="#919191" stroke="#f6f6f3" stroke-width="2.2" paint-order="stroke">Chemin de la Roche</text>
<text x="351.1" y="241.2" transform="rotate(24.1 351.1 241.2)" text-anchor="middle" dominant-baseline="central" textLength="91.8" lengthAdjust="spacingAndGlyphs" font-family="Liberation Sans" font-size="11" font-style="normal" font-weight="normal" fill="#919191" stroke="#f6f6f3" stroke-width="2.2" paint-order="stroke">Chemin de la Sauge</text>
<text x="91.1" y="337.5" transform="rotate(-78.6 91.1 337.5)" text-anchor="middle" dominant-baseline="central" textLength="107.1" lengthAdjust="spacingAndGlyphs" font-family="Liberation Sans" font-size="11" font-style="normal" font-weight="normal" fill="#919191" stroke="#f6f6f3" stroke-width="2.2" paint-order="stroke">Chemin des Boracles</text>
<text x="145.5" y="353.8" transform="rotate(-15.4 145.5 353.8)" text-anchor="middle" dominant-baseline="central" textLength="103.7" lengthAdjust="spacingAndGlyphs" font-family="Liberation Sans" font-size="11" font-style="normal" font-weight="normal" fill="#919191" stroke="#f6f6f3" stroke-width="2.2" paint-order="stroke">Chemin de la Bâtiaz</text>
<text x="321.1" y="381.2" transform="rotate(-78.5 321.1 381.2)" text-anchor="middle" dominant-baseline="central" textLength="94.4" lengthAdjust="spacingAndGlyphs" font-family="Liberation Sans" font-size="11" font-style="normal" font-weight="normal" fill="#919191" stroke="#f6f6f3" stroke-width="2.2" paint-order="stroke">Chemin de Sous-Bois</text>
<text x="492.6" y="166.0" transform="rotate(88.0 492.6 166.0)" text-anchor="middle" dominant-baseline="central" textLength="93.1" lengthAdjust="spacingAndGlyphs" font-family="Liberation Sans" font-size="11" font-style="normal" font-weight="normal" fill="#919191" stroke="#f6f6f3" stroke-width="2.2" paint-order="stroke">Chemin de la Judée</text>
<text x="534.5" y="156.8" transform="rotate(73.3 534.5 156.8)" text-anchor="middle" dominant-baseline="central" textLength="85.1" lengthAdjust="spacingAndGlyphs" font-family="Liberation Sans" font-size="11" font-style="normal" font-weight="normal" fill="#919191" stroke="#f6f6f3" stroke-width="2.2" paint-order="stroke">Chemin des Noyers</text>
<text x="592.6" y="140.4" transform="rotate(68.2 592.6 140.4)" text-anchor="middle" dominant-baseline="central" textLength="96.1" lengthAdjust="spacingAndGlyphs" font-family="Liberation Sans" font-size="11" font-style="normal" font-weight="normal" fill="#919191" stroke="#f6f6f3" stroke-width="2.2" paint-order="stroke">Chemin d'Yverdon</text>
<text x="656.8" y="217.5" transform="rotate(70.1 656.8 217.5)" text-anchor="middle" dominant-baseline="central" textLength="95.7" lengthAdjust="spacingAndGlyphs" font-family="Liberation Sans" font-size="11" font-style="normal" font-weight="normal" fill="#919191" stroke="#f6f6f3" stroke-width="2.2" paint-order="stroke">Chemin du Marais</text>
<text x="748.0" y="345.0" transform="rotate(78.7 748.0 345.0)" text-anchor="middle" dominant-baseline="central" textLength="102.0" lengthAdjust="spacingAndGlyphs" font-family="Liberation Sans" font-size="11" font-style="normal" font-weight="normal" fill="#919191" stroke="#f6f6f3" stroke-width="2.2" paint-order="stroke">Chemin de la Viane</text>
<text x="814.2" y="238.8" transform="rotate(-58.1 814.2 238.8)" text-anchor="middle" dominant-baseline="central" textLength="108.9" lengthAdjust="spacingAndGlyphs" font-family="Liberation Sans" font-size="11" font-style="normal" font-weight="normal" fill="#919191" stroke="#f6f6f3" stroke-width="2.2" paint-order="stroke">Chemin de Pernessy</text>
<text x="893.6" y="268.8" transform="rotate(65.7 893.6 268.8)" text-anchor="middle" dominant-baseline="central" textLength="112.5" lengthAdjust="spacingAndGlyphs" font-family="Liberation Sans" font-size="11" font-style="normal" font-weight="normal" fill="#919191" stroke="#f6f6f3" stroke-width="2.2" paint-order="stroke">Chemin des Echelettes</text>
<text x="941.8" y="238.8" transform="rotate(-79.3 941.8 238.8)" text-anchor="middle" dominant-baseline="central" textLength="94.1" lengthAdjust="spacingAndGlyphs" font-family="Liberation Sans" font-size="11" font-style="normal" font-weight="normal" fill="#919191" stroke="#f6f6f3" stroke-width="2.2" paint-order="stroke">Chemin de la Croix</text>
<text x="877.4" y="375.0" transform="rotate(-43.8 877.4 375.0)" text-anchor="middle" dominant-baseline="central" textLength="122.9" lengthAdjust="spacingAndGlyphs" font-family="Liberation Sans" font-size="11" font-style="normal" font-weight="normal" fill="#919191" stroke="#f6f6f3" stroke-width="2.2" paint-order="stroke">Route de la Blécherette</text>
<text x="1003.0" y="226.2" transform="rotate(-45.8 1003.0 226.2)" text-anchor="middle" dominant-baseline="central" textLength="122.0" lengthAdjust="spacingAndGlyphs" font-family="Liberation Sans" font-size="11" font-style="normal" font-weight="normal" fill="#919191" stroke="#f6f6f3" stroke-width="2.2" paint-order="stroke">Route de la Blécherette</text>
<text x="815.5" y="143.8" transform="rotate(-60.3 815.5 143.8)" text-anchor="middle" dominant-baseline="central" textLength="60.5" lengthAdjust="spacingAndGlyphs" font-family="Liberation Sans" font-size="11" font-style="normal" font-weight="normal" fill="#919191" stroke="#f6f6f3" stroke-width="2.2" paint-order="stroke">Chemin de</text>
<text x="1017.5" y="154.0" transform="rotate(21.8 1017.5 154.0)" text-anchor="middle" dominant-baseline="central" textLength="70.0" lengthAdjust="spacingAndGlyphs" font-family="Liberation Sans" font-size="11" font-style="normal" font-weight="normal" fill="#919191" stroke="#f6f6f3" stroke-width="2.2" paint-order="stroke">de la Perrause</text>
<text x="1087.4" y="261.2" transform="rotate(-74.9 1087.4 261.2)" text-anchor="middle" dominant-baseline="central" textLength="101.0" lengthAdjust="spacingAndGlyphs" font-family="Liberation Sans" font-size="11" font-style="normal" font-weight="normal" fill="#919191" stroke="#f6f6f3" stroke-width="2.2" paint-order="stroke">Route de Lausanne</text>
<text x="1114.9" y="250.0" transform="rotate(86.0 1114.9 250.0)" text-anchor="middle" dominant-baseline="central" textLength="90.2" lengthAdjust="spacingAndGlyphs" font-family="Liberation Sans" font-size="11" font-style="normal" font-weight="normal" fill="#919191" stroke="#f6f6f3" stroke-width="2.2" paint-order="stroke">Route de Coppoz</text>
<text x="1172.4" y="223.8" transform="rotate(-69.6 1172.4 223.8)" text-anchor="middle" dominant-baseline="central" textLength="104.0" lengthAdjust="spacingAndGlyphs" font-family="Liberation Sans" font-size="11" font-style="normal" font-weight="normal" fill="#919191" stroke="#f6f6f3" stroke-width="2.2" paint-order="stroke">Chemin du Châtaignier</text>
<text x="1334.2" y="233.8" transform="rotate(23.2 1334.2 233.8)" text-anchor="middle" dominant-baseline="central" textLength="95.2" lengthAdjust="spacingAndGlyphs" font-family="Liberation Sans" font-size="11" font-style="normal" font-weight="normal" fill="#919191" stroke="#f6f6f3" stroke-width="2.2" paint-order="stroke">Route de Manloud</text>
<text x="1513.8" y="225.0" transform="rotate(-48.5 1513.8 225.0)" text-anchor="middle" dominant-baseline="central" textLength="86.8" lengthAdjust="spacingAndGlyphs" font-family="Liberation Sans" font-size="11" font-style="normal" font-weight="normal" fill="#919191" stroke="#f6f6f3" stroke-width="2.2" paint-order="stroke">Route de Penau</text>
<text x="1752.5" y="222.5" transform="rotate(60.5 1752.5 222.5)" text-anchor="middle" dominant-baseline="central" textLength="132.1" lengthAdjust="spacingAndGlyphs" font-family="Liberation Sans" font-size="11" font-style="normal" font-weight="normal" fill="#919191" stroke="#f6f6f3" stroke-width="2.2" paint-order="stroke">Chemin du Bois-de-Ban</text>
<text x="1827.5" y="221.2" transform="rotate(64.1 1827.5 221.2)" text-anchor="middle" dominant-baseline="central" textLength="102.9" lengthAdjust="spacingAndGlyphs" font-family="Liberation Sans" font-size="11" font-style="normal" font-weight="normal" fill="#919191" stroke="#f6f6f3" stroke-width="2.2" paint-order="stroke">Chemin du Chaugand</text>
<text x="1892.5" y="191.2" transform="rotate(80.0 1892.5 191.2)" text-anchor="middle" dominant-baseline="central" textLength="144.7" lengthAdjust="spacingAndGlyphs" font-family="Liberation Sans" font-size="11" font-style="normal" font-weight="normal" fill="#919191" stroke="#f6f6f3" stroke-width="2.2" paint-order="stroke">Chemin de Ballègue</text>
<text x="1525.0" y="332.5" transform="rotate(43.2 1525.0 332.5)" text-anchor="middle" dominant-baseline="central" textLength="109.7" lengthAdjust="spacingAndGlyphs" font-family="Liberation Sans" font-size="11" font-style="normal" font-weight="normal" fill="#919191" stroke="#f6f6f3" stroke-width="2.2" paint-order="stroke">Chemin de la Picholette</text>
<text x="1700.0" y="418.5" transform="rotate(-39.2 1700.0 418.5)" text-anchor="middle" dominant-baseline="central" textLength="90.3" lengthAdjust="spacingAndGlyphs" font-family="Liberation Sans" font-size="11" font-style="normal" font-weight="normal" fill="#919191" stroke="#f6f6f3" stroke-width="2.2" paint-order="stroke">Chemin du Polny</text>
<text x="1931.2" y="313.8" transform="rotate(0.0 1931.2 313.8)" text-anchor="middle" dominant-baseline="central" textLength="57.5" lengthAdjust="spacingAndGlyphs" font-family="Liberation Sans" font-size="11" font-style="normal" font-weight="normal" fill="#919191" stroke="#f6f6f3" stroke-width="2.2" paint-order="stroke">Chemin</text>
<text x="1917.5" y="408.8" transform="rotate(33.0 1917.5 408.8)" text-anchor="middle" dominant-baseline="central" textLength="59.6" lengthAdjust="spacingAndGlyphs" font-family="Liberation Sans" font-size="11" font-style="normal" font-weight="normal" fill="#919191" stroke="#f6f6f3" stroke-width="2.2" paint-order="stroke">Route de</text>
<text x="173.6" y="493.8" transform="rotate(-6.7 173.6 493.8)" text-anchor="middle" dominant-baseline="central" textLength="107.0" lengthAdjust="spacingAndGlyphs" font-family="Liberation Sans" font-size="11" font-style="normal" font-weight="normal" fill="#919191" stroke="#f6f6f3" stroke-width="2.2" paint-order="stroke">Chemin de la Rueyre</text>
<text x="263.0" y="575.0" transform="rotate(65.8 263.0 575.0)" text-anchor="middle" dominant-baseline="central" textLength="109.7" lengthAdjust="spacingAndGlyphs" font-family="Liberation Sans" font-size="11" font-style="normal" font-weight="normal" fill="#919191" stroke="#f6f6f3" stroke-width="2.2" paint-order="stroke">Route de Champvent</text>
<text x="453.6" y="512.5" transform="rotate(52.2 453.6 512.5)" text-anchor="middle" dominant-baseline="central" textLength="63.3" lengthAdjust="spacingAndGlyphs" font-family="Liberation Sans" font-size="11" font-style="normal" font-weight="normal" fill="#919191" stroke="#f6f6f3" stroke-width="2.2" paint-order="stroke">Route de Cery</text>
<text x="416.8" y="590.0" transform="rotate(73.7 416.8 590.0)" text-anchor="middle" dominant-baseline="central" textLength="62.5" lengthAdjust="spacingAndGlyphs" font-family="Liberation Sans" font-size="11" font-style="normal" font-weight="normal" fill="#919191" stroke="#f6f6f3" stroke-width="2.2" paint-order="stroke">Route de Cery</text>
<text x="520.5" y="576.0" transform="rotate(-64.1 520.5 576.0)" text-anchor="middle" dominant-baseline="central" textLength="80.1" lengthAdjust="spacingAndGlyphs" font-family="Liberation Sans" font-size="11" font-style="normal" font-weight="normal" fill="#919191" stroke="#f6f6f3" stroke-width="2.2" paint-order="stroke">Route du Mont</text>
<text x="152.5" y="716.0" transform="rotate(50.9 152.5 716.0)" text-anchor="middle" dominant-baseline="central" textLength="61.8" lengthAdjust="spacingAndGlyphs" font-family="Liberation Sans" font-size="11" font-style="normal" font-weight="normal" fill="#919191" stroke="#f6f6f3" stroke-width="2.2" paint-order="stroke">Sur la Croix</text>
<text x="638.0" y="462.5" transform="rotate(-42.5 638.0 462.5)" text-anchor="middle" dominant-baseline="central" textLength="81.4" lengthAdjust="spacingAndGlyphs" font-family="Liberation Sans" font-size="11" font-style="normal" font-weight="normal" fill="#919191" stroke="#f6f6f3" stroke-width="2.2" paint-order="stroke">Route du Mont</text>
<text x="708.0" y="582.5" transform="rotate(84.0 708.0 582.5)" text-anchor="middle" dominant-baseline="central" textLength="95.5" lengthAdjust="spacingAndGlyphs" font-family="Liberation Sans" font-size="11" font-style="normal" font-weight="normal" fill="#919191" stroke="#f6f6f3" stroke-width="2.2" paint-order="stroke">Route de Romanel</text>
<text x="828.0" y="517.5" transform="rotate(84.3 828.0 517.5)" text-anchor="middle" dominant-baseline="central" textLength="100.5" lengthAdjust="spacingAndGlyphs" font-family="Liberation Sans" font-size="11" font-style="normal" font-weight="normal" fill="#919191" stroke="#f6f6f3" stroke-width="2.2" paint-order="stroke">Route de Châtelard</text>
<text x="801.1" y="678.8" transform="rotate(-54.0 801.1 678.8)" text-anchor="middle" dominant-baseline="central" textLength="95.8" lengthAdjust="spacingAndGlyphs" font-family="Liberation Sans" font-size="11" font-style="normal" font-weight="normal" fill="#919191" stroke="#f6f6f3" stroke-width="2.2" paint-order="stroke">Route du Châtelard</text>
<text x="953.6" y="591.2" transform="rotate(70.3 953.6 591.2)" text-anchor="middle" dominant-baseline="central" textLength="92.9" lengthAdjust="spacingAndGlyphs" font-family="Liberation Sans" font-size="11" font-style="normal" font-weight="normal" fill="#919191" stroke="#f6f6f3" stroke-width="2.2" paint-order="stroke">Chemin du Rionzi</text>
<text x="1148.0" y="481.2" transform="rotate(46.2 1148.0 481.2)" text-anchor="middle" dominant-baseline="central" textLength="86.6" lengthAdjust="spacingAndGlyphs" font-family="Liberation Sans" font-size="11" font-style="normal" font-weight="normal" fill="#919191" stroke="#f6f6f3" stroke-width="2.2" paint-order="stroke">Chemin du Saux</text>
<text x="1094.2" y="528.8" transform="rotate(85.8 1094.2 528.8)" text-anchor="middle" dominant-baseline="central" textLength="102.8" lengthAdjust="spacingAndGlyphs" font-family="Liberation Sans" font-size="11" font-style="normal" font-weight="normal" fill="#919191" stroke="#f6f6f3" stroke-width="2.2" paint-order="stroke">Route des Martines</text>
<text x="1144.2" y="535.0" transform="rotate(58.8 1144.2 535.0)" text-anchor="middle" dominant-baseline="central" textLength="111.0" lengthAdjust="spacingAndGlyphs" font-family="Liberation Sans" font-size="11" font-style="normal" font-weight="normal" fill="#919191" stroke="#f6f6f3" stroke-width="2.2" paint-order="stroke">Route de Sauvabelin</text>
<text x="1186.8" y="655.0" transform="rotate(-64.6 1186.8 655.0)" text-anchor="middle" dominant-baseline="central" textLength="110.7" lengthAdjust="spacingAndGlyphs" font-family="Liberation Sans" font-size="11" font-style="normal" font-weight="normal" fill="#919191" stroke="#f6f6f3" stroke-width="2.2" paint-order="stroke">Route de la Clochatte</text>
<text x="1281.8" y="503.8" transform="rotate(16.2 1281.8 503.8)" text-anchor="middle" dominant-baseline="central" textLength="80.7" lengthAdjust="spacingAndGlyphs" font-family="Liberation Sans" font-size="11" font-style="normal" font-weight="normal" fill="#919191" stroke="#f6f6f3" stroke-width="2.2" paint-order="stroke">Route de Penau</text>
<text x="1012.0" y="534.0" transform="rotate(85.5 1012.0 534.0)" text-anchor="middle" dominant-baseline="central" textLength="102.3" lengthAdjust="spacingAndGlyphs" font-family="Liberation Sans" font-size="11" font-style="normal" font-weight="normal" fill="#919191" stroke="#f6f6f3" stroke-width="2.2" paint-order="stroke">Route de Lausanne</text>
<text x="1858.8" y="610.0" transform="rotate(-74.5 1858.8 610.0)" text-anchor="middle" dominant-baseline="central" textLength="46.7" lengthAdjust="spacingAndGlyphs" font-family="Liberation Sans" font-size="11" font-style="normal" font-weight="normal" fill="#919191" stroke="#f6f6f3" stroke-width="2.2" paint-order="stroke">Route de la</text>
<text x="1895.0" y="557.5" transform="rotate(-39.8 1895.0 557.5)" text-anchor="middle" dominant-baseline="central" textLength="78.1" lengthAdjust="spacingAndGlyphs" font-family="Liberation Sans" font-size="11" font-style="normal" font-weight="normal" fill="#919191" stroke="#f6f6f3" stroke-width="2.2" paint-order="stroke">Croix-Blanche</text>
<text x="998.5" y="769.0" transform="rotate(34.0 998.5 769.0)" text-anchor="middle" dominant-baseline="central" textLength="100.1" lengthAdjust="spacingAndGlyphs" font-family="Liberation Sans" font-size="11" font-style="normal" font-weight="normal" fill="#919191" stroke="#f6f6f3" stroke-width="2.2" paint-order="stroke">Chemin de Maillefer</text>
<text x="1075.5" y="773.8" transform="rotate(-81.3 1075.5 773.8)" text-anchor="middle" dominant-baseline="central" textLength="98.6" lengthAdjust="spacingAndGlyphs" font-family="Liberation Sans" font-size="11" font-style="normal" font-weight="normal" fill="#919191" stroke="#f6f6f3" stroke-width="2.2" paint-order="stroke">Route du Pavement</text>
<text x="1013.0" y="825.0" transform="rotate(78.7 1013.0 825.0)" text-anchor="middle" dominant-baseline="central" textLength="102.0" lengthAdjust="spacingAndGlyphs" font-family="Liberation Sans" font-size="11" font-style="normal" font-weight="normal" fill="#919191" stroke="#f6f6f3" stroke-width="2.2" paint-order="stroke">Chemin d'Entre-Bois</text>
<text x="1053.0" y="925.0" transform="rotate(-82.2 1053.0 925.0)" text-anchor="middle" dominant-baseline="central" textLength="111.0" lengthAdjust="spacingAndGlyphs" font-family="Liberation Sans" font-size="11" font-style="normal" font-weight="normal" fill="#919191" stroke="#f6f6f3" stroke-width="2.2" paint-order="stroke">Route Aloys-Fauquez</text>
<text x="1091.1" y="928.8" transform="rotate(79.3 1091.1 928.8)" text-anchor="middle" dominant-baseline="central" textLength="114.5" lengthAdjust="spacingAndGlyphs" font-family="Liberation Sans" font-size="11" font-style="normal" font-weight="normal" fill="#919191" stroke="#f6f6f3" stroke-width="2.2" paint-order="stroke">Route du Pavement</text>
<text x="1190.5" y="797.5" transform="rotate(59.0 1190.5 797.5)" text-anchor="middle" dominant-baseline="central" textLength="116.6" lengthAdjust="spacingAndGlyphs" font-family="Liberation Sans" font-size="11" font-style="normal" font-weight="normal" fill="#919191" stroke="#f6f6f3" stroke-width="2.2" paint-order="stroke">Route de la Clochatte</text>
<text x="1229.2" y="928.8" transform="rotate(70.2 1229.2 928.8)" text-anchor="middle" dominant-baseline="central" textLength="66.4" lengthAdjust="spacingAndGlyphs" font-family="Liberation Sans" font-size="11" font-style="normal" font-weight="normal" fill="#919191" stroke="#f6f6f3" stroke-width="2.2" paint-order="stroke">Chemin de la</text>
<text x="1371.1" y="853.8" transform="rotate(60.0 1371.1 853.8)" text-anchor="middle" dominant-baseline="central" textLength="112.6" lengthAdjust="spacingAndGlyphs" font-family="Liberation Sans" font-size="11" font-style="normal" font-weight="normal" fill="#919191" stroke="#f6f6f3" stroke-width="2.2" paint-order="stroke">Chemin de Boissonnet</text>
<text x="1570.6" y="915.0" transform="rotate(-94.3 1570.6 915.0)" text-anchor="middle" dominant-baseline="central" textLength="50.1" lengthAdjust="spacingAndGlyphs" font-family="Liberation Sans" font-size="11" font-style="normal" font-weight="normal" fill="#919191" stroke="#f6f6f3" stroke-width="2.2" paint-order="stroke">Avenue de</text>
<text x="1590.0" y="876.9" transform="rotate(-15.7 1590.0 876.9)" text-anchor="middle" dominant-baseline="central" textLength="41.6" lengthAdjust="spacingAndGlyphs" font-family="Liberation Sans" font-size="11" font-style="normal" font-weight="normal" fill="#919191" stroke="#f6f6f3" stroke-width="2.2" paint-order="stroke">Valmont</text>
<text x="1895.0" y="782.5" transform="rotate(-50.9 1895.0 782.5)" text-anchor="middle" dominant-baseline="central" textLength="103.1" lengthAdjust="spacingAndGlyphs" font-family="Liberation Sans" font-size="11" font-style="normal" font-weight="normal" fill="#919191" stroke="#f6f6f3" stroke-width="2.2" paint-order="stroke">Chemin du Raidillon</text>
<text x="106.8" y="812.5" transform="rotate(53.8 106.8 812.5)" text-anchor="middle" dominant-baseline="central" textLength="80.5" lengthAdjust="spacingAndGlyphs" font-family="Liberation Sans" font-size="11" font-style="normal" font-weight="normal" fill="#919191" stroke="#f6f6f3" stroke-width="2.2" paint-order="stroke">Rue du Bugnon</text>
<text x="187.4" y="888.1" transform="rotate(46.9 187.4 888.1)" text-anchor="middle" dominant-baseline="central" textLength="104.4" lengthAdjust="spacingAndGlyphs" font-family="Liberation Sans" font-size="11" font-style="normal" font-weight="normal" fill="#919191" stroke="#f6f6f3" stroke-width="2.2" paint-order="stroke">Avenue des Paudex</text>
<text x="228.0" y="955.0" transform="rotate(68.2 228.0 955.0)" text-anchor="middle" dominant-baseline="central" textLength="26.9" lengthAdjust="spacingAndGlyphs" font-family="Liberation Sans" font-size="11" font-style="normal" font-weight="normal" fill="#919191" stroke="#f6f6f3" stroke-width="2.2" paint-order="stroke">Aven</text>
<text x="251.8" y="779.4" transform="rotate(-62.2 251.8 779.4)" text-anchor="middle" dominant-baseline="central" textLength="80.5" lengthAdjust="spacingAndGlyphs" font-family="Liberation Sans" font-size="11" font-style="normal" font-weight="normal" fill="#919191" stroke="#f6f6f3" stroke-width="2.2" paint-order="stroke">Route de Broye</text>
<text x="303.6" y="831.2" transform="rotate(67.3 303.6 831.2)" text-anchor="middle" dominant-baseline="central" textLength="100.3" lengthAdjust="spacingAndGlyphs" font-family="Liberation Sans" font-size="11" font-style="normal" font-weight="normal" fill="#919191" stroke="#f6f6f3" stroke-width="2.2" paint-order="stroke">Chemin de Perréaz</text>
<text x="374.9" y="885.6" transform="rotate(69.4 374.9 885.6)" text-anchor="middle" dominant-baseline="central" textLength="102.9" lengthAdjust="spacingAndGlyphs" font-family="Liberation Sans" font-size="11" font-style="normal" font-weight="normal" fill="#919191" stroke="#f6f6f3" stroke-width="2.2" paint-order="stroke">Avenue du Château</text>
<text x="421.8" y="863.8" transform="rotate(-79.8 421.8 863.8)" text-anchor="middle" dominant-baseline="central" textLength="99.1" lengthAdjust="spacingAndGlyphs" font-family="Liberation Sans" font-size="11" font-style="normal" font-weight="normal" fill="#919191" stroke="#f6f6f3" stroke-width="2.2" paint-order="stroke">Route du Chasseur</text>
<text x="481.8" y="871.9" transform="rotate(66.4 481.8 871.9)" text-anchor="middle" dominant-baseline="central" textLength="118.7" lengthAdjust="spacingAndGlyphs" font-family="Liberation Sans" font-size="11" font-style="normal" font-weight="normal" fill="#919191" stroke="#f6f6f3" stroke-width="2.2" paint-order="stroke">Chemin de Sous-Mont</text>
<text x="509.2" y="813.8" transform="rotate(60.4 509.2 813.8)" text-anchor="middle" dominant-baseline="central" textLength="146.7" lengthAdjust="spacingAndGlyphs" font-family="Liberation Sans" font-size="11" font-style="normal" font-weight="normal" fill="#919191" stroke="#f6f6f3" stroke-width="2.2" paint-order="stroke">Avenue de la Vallombreuse</text>
<text x="474.2" y="740.6" transform="rotate(-48.2 474.2 740.6)" text-anchor="middle" dominant-baseline="central" textLength="78.8" lengthAdjust="spacingAndGlyphs" font-family="Liberation Sans" font-size="11" font-style="normal" font-weight="normal" fill="#919191" stroke="#f6f6f3" stroke-width="2.2" paint-order="stroke">Route du Mont</text>
<text x="721.8" y="849.4" transform="rotate(43.7 721.8 849.4)" text-anchor="middle" dominant-baseline="central" textLength="114.1" lengthAdjust="spacingAndGlyphs" font-family="Liberation Sans" font-size="11" font-style="normal" font-weight="normal" fill="#919191" stroke="#f6f6f3" stroke-width="2.2" paint-order="stroke">Chemin des Bossons</text>
<text x="701.1" y="891.2" transform="rotate(48.0 701.1 891.2)" text-anchor="middle" dominant-baseline="central" textLength="84.1" lengthAdjust="spacingAndGlyphs" font-family="Liberation Sans" font-size="11" font-style="normal" font-weight="normal" fill="#919191" stroke="#f6f6f3" stroke-width="2.2" paint-order="stroke">Avenue du Grey</text>
<text x="831.8" y="912.5" transform="rotate(60.9 831.8 912.5)" text-anchor="middle" dominant-baseline="central" textLength="148.8" lengthAdjust="spacingAndGlyphs" font-family="Liberation Sans" font-size="11" font-style="normal" font-weight="normal" fill="#919191" stroke="#f6f6f3" stroke-width="2.2" paint-order="stroke">Route des Plaines-du-Loup</text>
<text x="646.8" y="953.1" transform="rotate(54.2 646.8 953.1)" text-anchor="middle" dominant-baseline="central" textLength="38.5" lengthAdjust="spacingAndGlyphs" font-family="Liberation Sans" font-size="11" font-style="normal" font-weight="normal" fill="#919191" stroke="#f6f6f3" stroke-width="2.2" paint-order="stroke">Chemin</text>
<text x="1483.5" y="680.5" transform="rotate(9.0 1483.5 680.5)" text-anchor="middle" dominant-baseline="central" textLength="57.7" lengthAdjust="spacingAndGlyphs" font-family="Liberation Sans" font-size="11" font-style="normal" font-weight="normal" fill="#919191" stroke="#f6f6f3" stroke-width="2.2" paint-order="stroke">de la Cigale</text>
<text x="1780.0" y="536.0" transform="rotate(-64.0 1780.0 536.0)" text-anchor="middle" dominant-baseline="central" textLength="91.2" lengthAdjust="spacingAndGlyphs" font-family="Liberation Sans" font-size="12" font-style="normal" font-weight="normal" fill="#e8710a" stroke="#f6f6f3" stroke-width="2.2" paint-order="stroke">Route de Berne</text>
<text x="862.0" y="810.0" transform="rotate(0.0 862.0 810.0)" text-anchor="middle" dominant-baseline="central" textLength="54.0" lengthAdjust="spacingAndGlyphs" font-family="Liberation Sans" font-size="13" font-style="italic" font-weight="normal" fill="#7fa0cc" stroke="#f6f6f3" stroke-width="2.2" paint-order="stroke">Petit Flon</text>
<text x="960.5" y="879.0" transform="rotate(0.0 960.5 879.0)" text-anchor="middle" dominant-baseline="central" textLength="51.0" lengthAdjust="spacingAndGlyphs" font-family="Liberation Sans" font-size="13" font-style="italic" font-weight="normal" fill="#7fa0cc" stroke="#f6f6f3" stroke-width="2.2" paint-order="stroke">La Louve</text>
<text x="1298.5" y="881.0" transform="rotate(0.0 1298.5 881.0)" text-anchor="middle" dominant-baseline="central" textLength="41.0" lengthAdjust="spacingAndGlyphs" font-family="Liberation Sans" font-size="13" font-style="italic" font-weight="normal" fill="#7fa0cc" stroke="#f6f6f3" stroke-width="2.2" paint-order="stroke">Le Flon</text>
<text x="1263.0" y="658.5" transform="rotate(-66.5 1263.0 658.5)" text-anchor="middle" dominant-baseline="central" textLength="25.1" lengthAdjust="spacingAndGlyphs" font-family="Liberation Sans" font-size="12" font-style="italic" font-weight="normal" fill="#7fa0cc" stroke="#f6f6f3" stroke-width="2.2" paint-order="stroke">Flon</text>
<text x="1253.0" y="818.5" transform="rotate(40.4 1253.0 818.5)" text-anchor="middle" dominant-baseline="central" textLength="26.2" lengthAdjust="spacingAndGlyphs" font-family="Liberation Sans" font-size="12" font-style="italic" font-weight="normal" fill="#7fa0cc" stroke="#f6f6f3" stroke-width="2.2" paint-order="stroke">Flon</text>
<text x="163" y="438" text-anchor="start" dominant-baseline="central" font-family="Liberation Sans" font-size="14" font-style="normal" fill="#8f8272" textLength="157" lengthAdjust="spacingAndGlyphs" stroke="#f6f5f2" stroke-width="2.5" paint-order="stroke">J o u x t e n s - M é z e r y</text>
<text x="235" y="221" text-anchor="start" dominant-baseline="central" font-family="Liberation Sans" font-size="11.5" font-style="normal" fill="#5fb0dc" textLength="48" lengthAdjust="spacingAndGlyphs" stroke="#f6f5f2" stroke-width="2.5" paint-order="stroke">Le Lussex</text>
<rect x="287" y="215.5" width="11" height="11" fill="#3cc1d3"/><rect x="289.5" y="217.5" width="6" height="6" rx="2" fill="#fff"/><rect x="290.5" y="218.5" width="4" height="2" fill="#e04646"/>
<text x="218" y="510" text-anchor="start" dominant-baseline="central" font-family="Liberation Sans" font-size="11.5" font-style="normal" fill="#5fb0dc" textLength="82" lengthAdjust="spacingAndGlyphs" stroke="#f6f5f2" stroke-width="2.5" paint-order="stroke">Jouxtens-Mézery</text>
<rect x="304" y="504.5" width="11" height="11" fill="#3cc1d3"/><rect x="306.5" y="506.5" width="6" height="6" rx="2" fill="#fff"/><rect x="307.5" y="507.5" width="4" height="2" fill="#e04646"/>
<text x="294" y="637.5" text-anchor="start" dominant-baseline="central" font-family="Liberation Sans" font-size="11.5" font-style="normal" fill="#5fb0dc" textLength="84" lengthAdjust="spacingAndGlyphs" stroke="#f6f5f2" stroke-width="2.5" paint-order="stroke">Cery-Fleur-de-Lys</text>
<rect x="382" y="632.0" width="11" height="11" fill="#3cc1d3"/><rect x="384.5" y="634.0" width="6" height="6" rx="2" fill="#fff"/><rect x="385.5" y="635.0" width="4" height="2" fill="#e04646"/>
<text x="362" y="804" text-anchor="start" dominant-baseline="central" font-family="Liberation Sans" font-size="11.5" font-style="normal" fill="#5fb0dc" textLength="72" lengthAdjust="spacingAndGlyphs" stroke="#f6f5f2" stroke-width="2.5" paint-order="stroke">Prilly-Chasseur</text>
<rect x="438" y="798.5" width="11" height="11" fill="#3cc1d3"/><rect x="440.5" y="800.5" width="6" height="6" rx="2" fill="#fff"/><rect x="441.5" y="801.5" width="4" height="2" fill="#e04646"/>
<text x="1418" y="832" text-anchor="start" dominant-baseline="central" font-family="Liberation Sans" font-size="11.5" font-style="normal" fill="#5fb0dc" textLength="32" lengthAdjust="spacingAndGlyphs" stroke="#f6f5f2" stroke-width="2.5" paint-order="stroke">Fourmi</text>
<rect x="1454" y="826.5" width="11" height="11" fill="#3cc1d3"/><text x="1459.5" y="832.5" text-anchor="middle" dominant-baseline="central" font-family="Liberation Sans" font-size="10" fill="#fff">M</text>
<text x="1570" y="749" text-anchor="start" dominant-baseline="central" font-family="Liberation Sans" font-size="11.5" font-style="normal" fill="#5fb0dc" textLength="36" lengthAdjust="spacingAndGlyphs" stroke="#f6f5f2" stroke-width="2.5" paint-order="stroke">Vennes</text>
<rect x="1610" y="743.5" width="11" height="11" fill="#3cc1d3"/><text x="1615.5" y="749.5" text-anchor="middle" dominant-baseline="central" font-family="Liberation Sans" font-size="10" fill="#fff">M</text>
<text x="1591" y="686" text-anchor="start" dominant-baseline="central" font-family="Liberation Sans" font-size="11.5" font-style="normal" fill="#5fb0dc" textLength="101" lengthAdjust="spacingAndGlyphs" stroke="#f6f5f2" stroke-width="2.5" paint-order="stroke">Epalinges, Croisettes</text>
<rect x="1696" y="680.5" width="11" height="11" fill="#3cc1d3"/><text x="1701.5" y="686.5" text-anchor="middle" dominant-baseline="central" font-family="Liberation Sans" font-size="10" fill="#fff">M</text>
<text x="357" y="544" text-anchor="start" dominant-baseline="central" font-family="Liberation Sans" font-size="12.5" font-style="normal" fill="#c2504c" textLength="87" lengthAdjust="spacingAndGlyphs" stroke="#f6f5f2" stroke-width="2.5" paint-order="stroke">Hôpital de Cery</text>
<circle cx="452" cy="544" r="5.5" fill="#fff" stroke="#999" stroke-width="0.8"/><text x="452" y="544.5" text-anchor="middle" dominant-baseline="central" font-family="Liberation Sans" font-size="8" fill="#e04646">H</text>
<text x="683" y="711" text-anchor="middle" dominant-baseline="central" font-family="Liberation Sans" font-size="12.5" font-style="normal" fill="#6f6a66" textLength="68" lengthAdjust="spacingAndGlyphs" stroke="#f6f5f2" stroke-width="2.5" paint-order="stroke">Aéroport de</text>
<text x="683" y="724" text-anchor="middle" dominant-baseline="central" font-family="Liberation Sans" font-size="12.5" font-style="normal" fill="#6f6a66" textLength="126" lengthAdjust="spacingAndGlyphs" stroke="#f6f5f2" stroke-width="2.5" paint-order="stroke">Lausanne-Blécherette</text>
<circle cx="683" cy="739" r="6" fill="#fff" stroke="#aaa" stroke-width="0.8"/><path d="M679 739.5 h8 M683 735.5 v7 M681 742 h4" stroke="#5aaee0" stroke-width="1.4"/>
<text x="1140" y="626" text-anchor="end" dominant-baseline="central" font-family="Liberation Sans" font-size="12.5" font-style="normal" fill="#6b6b6b" textLength="147" lengthAdjust="spacingAndGlyphs" stroke="#f6f5f2" stroke-width="2.5" paint-order="stroke">Ecole privée International</text>
<text x="1140" y="639.5" text-anchor="end" dominant-baseline="central" font-family="Liberation Sans" font-size="12.5" font-style="normal" fill="#6b6b6b" textLength="114" lengthAdjust="spacingAndGlyphs" stroke="#f6f5f2" stroke-width="2.5" paint-order="stroke">School of Lausanne</text>
<circle cx="1150" cy="632" r="6" fill="#fff" stroke="#aaa" stroke-width="0.8"/><path d="M1146 632 l4 -2 l4 2 l-4 2z" fill="#888"/>
<text x="684" y="763" text-anchor="end" dominant-baseline="central" font-family="Liberation Sans" font-size="12.5" font-style="normal" fill="#6b6b6b" textLength="97" lengthAdjust="spacingAndGlyphs" stroke="#f6f5f2" stroke-width="2.5" paint-order="stroke">Service Cantonal</text>
<text x="684" y="776" text-anchor="end" dominant-baseline="central" font-family="Liberation Sans" font-size="12.5" font-style="normal" fill="#6b6b6b" textLength="137" lengthAdjust="spacingAndGlyphs" stroke="#f6f5f2" stroke-width="2.5" paint-order="stroke">des automobiles et de…</text>
<circle cx="693" cy="769" r="6" fill="#fff" stroke="#aaa" stroke-width="0.8"/><rect x="689.5" y="766" width="7" height="6" fill="#888"/>
<text x="1402" y="752" text-anchor="start" dominant-baseline="central" font-family="Liberation Sans" font-size="12.5" font-style="normal" fill="#6b6b6b" textLength="116" lengthAdjust="spacingAndGlyphs" stroke="#f6f5f2" stroke-width="2.5" paint-order="stroke">Haute école de travail</text>
<text x="1402" y="765" text-anchor="start" dominant-baseline="central" font-family="Liberation Sans" font-size="12.5" font-style="normal" fill="#6b6b6b" textLength="114" lengthAdjust="spacingAndGlyphs" stroke="#f6f5f2" stroke-width="2.5" paint-order="stroke">social et de la santé…</text>
<circle cx="1392" cy="758" r="6" fill="#fff" stroke="#aaa" stroke-width="0.8"/><path d="M1388 758 l4 -2 l4 2 l-4 2z" fill="#888"/>
<circle cx="1168" cy="953" r="6" fill="#fff" stroke="#aaa" stroke-width="0.8"/><rect x="1164.5" y="950" width="7" height="6" fill="#888"/>
<text x="55" y="896" text-anchor="start" dominant-baseline="central" font-family="Liberation Sans" font-size="12.5" font-style="normal" fill="#6b6b6b" textLength="91" lengthAdjust="spacingAndGlyphs" stroke="#f6f5f2" stroke-width="2.5" paint-order="stroke">Ecole cantonale</text>
<text x="48" y="909" text-anchor="start" dominant-baseline="central" font-family="Liberation Sans" font-size="12.5" font-style="normal" fill="#6b6b6b" textLength="65" lengthAdjust="spacingAndGlyphs" stroke="#f6f5f2" stroke-width="2.5" paint-order="stroke">e Lausanne</text>
<rect x="189" y="192.5" width="21" height="10.0" fill="#8dbb6c"/><text x="199.5" y="198.0" text-anchor="middle" dominant-baseline="central" font-family="Liberation Sans" font-weight="bold" font-size="9" fill="#fff" textLength="18" lengthAdjust="spacingAndGlyphs">E62</text>
<rect x="743" y="407" width="13" height="9" fill="#8dbb6c"/><text x="749.5" y="412.0" text-anchor="middle" dominant-baseline="central" font-family="Liberation Sans" font-weight="bold" font-size="9" fill="#fff" textLength="10" lengthAdjust="spacingAndGlyphs">E62</text>
<rect x="1690" y="867.5" width="21" height="10.0" fill="#8dbb6c"/><text x="1700.5" y="873.0" text-anchor="middle" dominant-baseline="central" font-family="Liberation Sans" font-weight="bold" font-size="9" fill="#fff" textLength="18" lengthAdjust="spacingAndGlyphs">E62</text>
<path d="M440.5 343.75 L443.5 338.75 H455 L458 343.75 L455 348.75 H443.5 Z" fill="#e2979a"/><text x="449.25" y="344.25" text-anchor="middle" dominant-baseline="central" font-family="Liberation Sans" font-weight="bold" font-size="9" fill="#fff">9</text>
<path d="M980.5 583.125 L983.5 578.75 H996 L999 583.125 L996 587.5 H983.5 Z" fill="#e2979a"/><text x="989.75" y="583.625" text-anchor="middle" dominant-baseline="central" font-family="Liberation Sans" font-weight="bold" font-size="9" fill="#fff">9</text>
<path d="M1311.75 698.125 L1314.75 693.75 H1327.5 L1330.5 698.125 L1327.5 702.5 H1314.75 Z" fill="#e2979a"/><text x="1321.125" y="698.625" text-anchor="middle" dominant-baseline="central" font-family="Liberation Sans" font-weight="bold" font-size="9" fill="#fff">9</text>
<path d="M1533 780.0 L1536 775 H1549 L1552 780.0 L1549 785 H1536 Z" fill="#e2979a"/><text x="1542.5" y="780.5" text-anchor="middle" dominant-baseline="central" font-family="Liberation Sans" font-weight="bold" font-size="9" fill="#fff">9</text>
<rect x="282" y="237.5" width="10.5" height="10.0" fill="#6a9ed8"/><text x="287.25" y="243.0" text-anchor="middle" dominant-baseline="central" font-family="Liberation Sans" font-weight="bold" font-size="9" fill="#fff">5</text>
<rect x="389" y="593" width="10" height="10.75" fill="#6a9ed8"/><text x="394.0" y="598.875" text-anchor="middle" dominant-baseline="central" font-family="Liberation Sans" font-weight="bold" font-size="9" fill="#fff">5</text>
<rect x="95" y="721" width="11" height="11" fill="#6a9ed8"/><text x="100.5" y="727.0" text-anchor="middle" dominant-baseline="central" font-family="Liberation Sans" font-weight="bold" font-size="9" fill="#fff">9</text>
<rect x="321.75" y="891" width="11.25" height="11" fill="#6a9ed8"/><text x="327.375" y="897.0" text-anchor="middle" dominant-baseline="central" font-family="Liberation Sans" font-weight="bold" font-size="9" fill="#fff">9</text>
<rect x="1606" y="730" width="10" height="10" fill="#6a9ed8"/><text x="1611.0" y="735.5" text-anchor="middle" dominant-baseline="central" font-family="Liberation Sans" font-weight="bold" font-size="9" fill="#fff">1</text>
<rect x="1479.5" y="782.5" width="10.0" height="10.0" fill="#6a9ed8"/><text x="1484.5" y="788.0" text-anchor="middle" dominant-baseline="central" font-family="Liberation Sans" font-weight="bold" font-size="9" fill="#fff">1</text>
<rect x="1665" y="700" width="11" height="9" fill="#6a9ed8"/><text x="1670.5" y="705.0" text-anchor="middle" dominant-baseline="central" font-family="Liberation Sans" font-weight="bold" font-size="9" fill="#fff">1</text>
<rect x="1882.5" y="441" width="10.0" height="10" fill="#6a9ed8"/><text x="1887.5" y="446.5" text-anchor="middle" dominant-baseline="central" font-family="Liberation Sans" font-weight="bold" font-size="9" fill="#fff">1</text>
<rect x="1712.5" y="642.5" width="10.0" height="10.0" fill="#6a9ed8"/><text x="1717.5" y="648.0" text-anchor="middle" dominant-baseline="central" font-family="Liberation Sans" font-weight="bold" font-size="9" fill="#fff">1</text>
<rect x="829" y="423.6" width="7" height="9.399999999999977" fill="#fcefb4" stroke="#f0d98a" stroke-width="0.8"/><text x="832.5" y="428.8" text-anchor="middle" dominant-baseline="central" font-family="Liberation Sans" font-size="9.5" fill="#8a7a52" textLength="4" lengthAdjust="spacingAndGlyphs">9</text>
<rect x="788" y="434.4" width="90" height="10.600000000000023" fill="#fcefb4" stroke="#f0d98a" stroke-width="0.8"/><text x="833.0" y="440.2" text-anchor="middle" dominant-baseline="central" font-family="Liberation Sans" font-size="9.5" fill="#8a7a52" textLength="86" lengthAdjust="spacingAndGlyphs">Lausanne-Blécherette</text>
<rect x="890.6" y="456.6" width="7.399999999999977" height="9.399999999999977" fill="#fcefb4" stroke="#f0d98a" stroke-width="0.8"/><text x="894.3" y="461.8" text-anchor="middle" dominant-baseline="central" font-family="Liberation Sans" font-size="9.5" fill="#8a7a52" textLength="4" lengthAdjust="spacingAndGlyphs">9</text>
<rect x="849.6" y="467" width="90.39999999999998" height="11" fill="#fcefb4" stroke="#f0d98a" stroke-width="0.8"/><text x="894.8" y="473.0" text-anchor="middle" dominant-baseline="central" font-family="Liberation Sans" font-size="9.5" fill="#8a7a52" textLength="86.39999999999998" lengthAdjust="spacingAndGlyphs">Lausanne-Blécherette</text>
<rect x="1668.75" y="826.25" width="12.5" height="10.75" fill="#fcefb4" stroke="#f0d98a" stroke-width="0.8"/><text x="1675.0" y="832.125" text-anchor="middle" dominant-baseline="central" font-family="Liberation Sans" font-size="9.5" fill="#8a7a52" textLength="8.5" lengthAdjust="spacingAndGlyphs">10</text>
<rect x="1636.25" y="837.5" width="76.25" height="11.25" fill="#fcefb4" stroke="#f0d98a" stroke-width="0.8"/><text x="1674.375" y="843.625" text-anchor="middle" dominant-baseline="central" font-family="Liberation Sans" font-size="9.5" fill="#8a7a52" textLength="72.25" lengthAdjust="spacingAndGlyphs">Lausanne-Vennes</text>
<rect x="1369" y="705" width="12" height="8" fill="#fcefb4" stroke="#f0d98a" stroke-width="0.8"/><text x="1375.0" y="709.5" text-anchor="middle" dominant-baseline="central" font-family="Liberation Sans" font-size="9.5" fill="#8a7a52" textLength="8" lengthAdjust="spacingAndGlyphs">10</text>
<rect x="1336.75" y="716" width="63.25" height="9" fill="#fcefb4" stroke="#f0d98a" stroke-width="0.8"/><text x="1368.375" y="721.0" text-anchor="middle" dominant-baseline="central" font-family="Liberation Sans" font-size="9.5" fill="#8a7a52" textLength="59.25" lengthAdjust="spacingAndGlyphs">Lausanne-Vennes</text>
<g filter="url(#sh)"><circle cx="225.5" cy="225" r="12" fill="#fbfbf8"/><circle cx="225.5" cy="225" r="10.9" fill="url(#gg)"/><path d="M223.90 218.90 L228.10 218.90" stroke="#fff" stroke-width="1.0"/><path d="M224.95 217.08 L227.05 220.72" stroke="#fff" stroke-width="1.0"/><path d="M227.05 217.08 L224.95 220.72" stroke="#fff" stroke-width="1.0"/><path d="M217.60 225.20 L224.40 225.20" stroke="#fff" stroke-width="1.25"/><path d="M219.30 222.26 L222.70 228.14" stroke="#fff" stroke-width="1.25"/><path d="M222.70 222.26 L219.30 228.14" stroke="#fff" stroke-width="1.25"/><path d="M225.70 228.40 L233.50 228.40" stroke="#fff" stroke-width="1.35"/><path d="M227.65 225.02 L231.55 231.78" stroke="#fff" stroke-width="1.35"/><path d="M231.55 225.02 L227.65 231.78" stroke="#fff" stroke-width="1.35"/></g>
<g filter="url(#sh)"><circle cx="214" cy="225" r="12" fill="#fbfbf8"/><circle cx="214" cy="225" r="10.9" fill="url(#gp)"/><path d="M212.40 218.90 L216.60 218.90" stroke="#fff" stroke-width="1.0"/><path d="M213.45 217.08 L215.55 220.72" stroke="#fff" stroke-width="1.0"/><path d="M215.55 217.08 L213.45 220.72" stroke="#fff" stroke-width="1.0"/><path d="M206.10 225.20 L212.90 225.20" stroke="#fff" stroke-width="1.25"/><path d="M207.80 222.26 L211.20 228.14" stroke="#fff" stroke-width="1.25"/><path d="M211.20 222.26 L207.80 228.14" stroke="#fff" stroke-width="1.25"/><path d="M214.20 228.40 L222.00 228.40" stroke="#fff" stroke-width="1.35"/><path d="M216.15 225.02 L220.05 231.78" stroke="#fff" stroke-width="1.35"/><path d="M220.05 225.02 L216.15 231.78" stroke="#fff" stroke-width="1.35"/></g>
<g filter="url(#sh)"><circle cx="336" cy="313" r="12" fill="#fbfbf8"/><circle cx="336" cy="313" r="10.9" fill="url(#gp)"/><path d="M334.40 306.90 L338.60 306.90" stroke="#fff" stroke-width="1.0"/><path d="M335.45 305.08 L337.55 308.72" stroke="#fff" stroke-width="1.0"/><path d="M337.55 305.08 L335.45 308.72" stroke="#fff" stroke-width="1.0"/><path d="M328.10 313.20 L334.90 313.20" stroke="#fff" stroke-width="1.25"/><path d="M329.80 310.26 L333.20 316.14" stroke="#fff" stroke-width="1.25"/><path d="M333.20 310.26 L329.80 316.14" stroke="#fff" stroke-width="1.25"/><path d="M336.20 316.40 L344.00 316.40" stroke="#fff" stroke-width="1.35"/><path d="M338.15 313.02 L342.05 319.78" stroke="#fff" stroke-width="1.35"/><path d="M342.05 313.02 L338.15 319.78" stroke="#fff" stroke-width="1.35"/></g>
<g filter="url(#sh)"><circle cx="358" cy="328" r="12" fill="#fbfbf8"/><circle cx="358" cy="328" r="10.9" fill="url(#gr)"/><path d="M356.40 321.90 L360.60 321.90" stroke="#fff" stroke-width="1.0"/><path d="M357.45 320.08 L359.55 323.72" stroke="#fff" stroke-width="1.0"/><path d="M359.55 320.08 L357.45 323.72" stroke="#fff" stroke-width="1.0"/><path d="M350.10 328.20 L356.90 328.20" stroke="#fff" stroke-width="1.25"/><path d="M351.80 325.26 L355.20 331.14" stroke="#fff" stroke-width="1.25"/><path d="M355.20 325.26 L351.80 331.14" stroke="#fff" stroke-width="1.25"/><path d="M358.20 331.40 L366.00 331.40" stroke="#fff" stroke-width="1.35"/><path d="M360.15 328.02 L364.05 334.78" stroke="#fff" stroke-width="1.35"/><path d="M364.05 328.02 L360.15 334.78" stroke="#fff" stroke-width="1.35"/></g>
<g filter="url(#sh)"><circle cx="499" cy="348" r="12" fill="#fbfbf8"/><circle cx="499" cy="348" r="10.9" fill="url(#gp)"/><path d="M497.40 341.90 L501.60 341.90" stroke="#fff" stroke-width="1.0"/><path d="M498.45 340.08 L500.55 343.72" stroke="#fff" stroke-width="1.0"/><path d="M500.55 340.08 L498.45 343.72" stroke="#fff" stroke-width="1.0"/><path d="M491.10 348.20 L497.90 348.20" stroke="#fff" stroke-width="1.25"/><path d="M492.80 345.26 L496.20 351.14" stroke="#fff" stroke-width="1.25"/><path d="M496.20 345.26 L492.80 351.14" stroke="#fff" stroke-width="1.25"/><path d="M499.20 351.40 L507.00 351.40" stroke="#fff" stroke-width="1.35"/><path d="M501.15 348.02 L505.05 354.78" stroke="#fff" stroke-width="1.35"/><path d="M505.05 348.02 L501.15 354.78" stroke="#fff" stroke-width="1.35"/></g>
<g filter="url(#sh)"><circle cx="587" cy="377" r="12" fill="#fbfbf8"/><circle cx="587" cy="377" r="10.9" fill="url(#gr)"/><path d="M585.40 370.90 L589.60 370.90" stroke="#fff" stroke-width="1.0"/><path d="M586.45 369.08 L588.55 372.72" stroke="#fff" stroke-width="1.0"/><path d="M588.55 369.08 L586.45 372.72" stroke="#fff" stroke-width="1.0"/><path d="M579.10 377.20 L585.90 377.20" stroke="#fff" stroke-width="1.25"/><path d="M580.80 374.26 L584.20 380.14" stroke="#fff" stroke-width="1.25"/><path d="M584.20 374.26 L580.80 380.14" stroke="#fff" stroke-width="1.25"/><path d="M587.20 380.40 L595.00 380.40" stroke="#fff" stroke-width="1.35"/><path d="M589.15 377.02 L593.05 383.78" stroke="#fff" stroke-width="1.35"/><path d="M593.05 377.02 L589.15 383.78" stroke="#fff" stroke-width="1.35"/></g>
<g filter="url(#sh)"><circle cx="732" cy="410" r="12" fill="#fbfbf8"/><circle cx="732" cy="410" r="10.9" fill="url(#gp)"/><path d="M728.40 406.90 C729.57 410.38 731.75 412.01 731.75 413.85 A3.35 3.35 0 0 1 725.05 413.85 C725.05 412.01 727.23 410.38 728.40 406.90 Z" fill="#fff"/><path d="M736.60 407.60 C737.44 410.05 739.00 411.18 739.00 412.50 A2.40 2.40 0 0 1 734.20 412.50 C734.20 411.18 735.76 410.05 736.60 407.60 Z" fill="#fff"/><path d="M732.80 401.40 C733.39 403.30 734.50 404.26 734.50 405.20 A1.70 1.70 0 0 1 731.10 405.20 C731.10 404.26 732.20 403.30 732.80 401.40 Z" fill="#fff"/></g>
<g filter="url(#sh)"><circle cx="766" cy="410" r="12" fill="#fbfbf8"/><circle cx="766" cy="410" r="10.9" fill="url(#gp)"/><path d="M762.40 406.90 C763.57 410.38 765.75 412.01 765.75 413.85 A3.35 3.35 0 0 1 759.05 413.85 C759.05 412.01 761.23 410.38 762.40 406.90 Z" fill="#fff"/><path d="M770.60 407.60 C771.44 410.05 773.00 411.18 773.00 412.50 A2.40 2.40 0 0 1 768.20 412.50 C768.20 411.18 769.76 410.05 770.60 407.60 Z" fill="#fff"/><path d="M766.80 401.40 C767.39 403.30 768.50 404.26 768.50 405.20 A1.70 1.70 0 0 1 765.10 405.20 C765.10 404.26 766.20 403.30 766.80 401.40 Z" fill="#fff"/></g>
<g filter="url(#sh)"><circle cx="866" cy="459" r="12" fill="#fbfbf8"/><circle cx="866" cy="459" r="10.9" fill="url(#gp)"/><path d="M864.40 452.90 L868.60 452.90" stroke="#fff" stroke-width="1.0"/><path d="M865.45 451.08 L867.55 454.72" stroke="#fff" stroke-width="1.0"/><path d="M867.55 451.08 L865.45 454.72" stroke="#fff" stroke-width="1.0"/><path d="M858.10 459.20 L864.90 459.20" stroke="#fff" stroke-width="1.25"/><path d="M859.80 456.26 L863.20 462.14" stroke="#fff" stroke-width="1.25"/><path d="M863.20 456.26 L859.80 462.14" stroke="#fff" stroke-width="1.25"/><path d="M866.20 462.40 L874.00 462.40" stroke="#fff" stroke-width="1.35"/><path d="M868.15 459.02 L872.05 465.78" stroke="#fff" stroke-width="1.35"/><path d="M872.05 459.02 L868.15 465.78" stroke="#fff" stroke-width="1.35"/></g>
<g filter="url(#sh)"><circle cx="907" cy="453" r="12" fill="#fbfbf8"/><circle cx="907" cy="453" r="10.9" fill="url(#gg)"/></g>
<g filter="url(#sh)"><circle cx="929" cy="501" r="12" fill="#fbfbf8"/><circle cx="929" cy="501" r="10.9" fill="url(#gg)"/></g>
<g filter="url(#sh)"><circle cx="944" cy="536" r="12" fill="#fbfbf8"/><circle cx="944" cy="536" r="10.9" fill="url(#gr)"/><path d="M942.40 529.90 L946.60 529.90" stroke="#fff" stroke-width="1.0"/><path d="M943.45 528.08 L945.55 531.72" stroke="#fff" stroke-width="1.0"/><path d="M945.55 528.08 L943.45 531.72" stroke="#fff" stroke-width="1.0"/><path d="M936.10 536.20 L942.90 536.20" stroke="#fff" stroke-width="1.25"/><path d="M937.80 533.26 L941.20 539.14" stroke="#fff" stroke-width="1.25"/><path d="M941.20 533.26 L937.80 539.14" stroke="#fff" stroke-width="1.25"/><path d="M944.20 539.40 L952.00 539.40" stroke="#fff" stroke-width="1.35"/><path d="M946.15 536.02 L950.05 542.78" stroke="#fff" stroke-width="1.35"/><path d="M950.05 536.02 L946.15 542.78" stroke="#fff" stroke-width="1.35"/></g>
<g filter="url(#sh)"><circle cx="1003" cy="604" r="12" fill="#fbfbf8"/><circle cx="1003" cy="604" r="10.9" fill="url(#gp)"/><path d="M1001.40 597.90 L1005.60 597.90" stroke="#fff" stroke-width="1.0"/><path d="M1002.45 596.08 L1004.55 599.72" stroke="#fff" stroke-width="1.0"/><path d="M1004.55 596.08 L1002.45 599.72" stroke="#fff" stroke-width="1.0"/><path d="M995.10 604.20 L1001.90 604.20" stroke="#fff" stroke-width="1.25"/><path d="M996.80 601.26 L1000.20 607.14" stroke="#fff" stroke-width="1.25"/><path d="M1000.20 601.26 L996.80 607.14" stroke="#fff" stroke-width="1.25"/><path d="M1003.20 607.40 L1011.00 607.40" stroke="#fff" stroke-width="1.35"/><path d="M1005.15 604.02 L1009.05 610.78" stroke="#fff" stroke-width="1.35"/><path d="M1009.05 604.02 L1005.15 610.78" stroke="#fff" stroke-width="1.35"/></g>
<g filter="url(#sh)"><circle cx="1063" cy="656" r="12" fill="#fbfbf8"/><circle cx="1063" cy="656" r="10.9" fill="url(#gg)"/><path d="M1061.40 649.90 L1065.60 649.90" stroke="#fff" stroke-width="1.0"/><path d="M1062.45 648.08 L1064.55 651.72" stroke="#fff" stroke-width="1.0"/><path d="M1064.55 648.08 L1062.45 651.72" stroke="#fff" stroke-width="1.0"/><path d="M1055.10 656.20 L1061.90 656.20" stroke="#fff" stroke-width="1.25"/><path d="M1056.80 653.26 L1060.20 659.14" stroke="#fff" stroke-width="1.25"/><path d="M1060.20 653.26 L1056.80 659.14" stroke="#fff" stroke-width="1.25"/><path d="M1063.20 659.40 L1071.00 659.40" stroke="#fff" stroke-width="1.35"/><path d="M1065.15 656.02 L1069.05 662.78" stroke="#fff" stroke-width="1.35"/><path d="M1069.05 656.02 L1065.15 662.78" stroke="#fff" stroke-width="1.35"/></g>
<g filter="url(#sh)"><circle cx="1229" cy="724" r="12" fill="#fbfbf8"/><circle cx="1229" cy="724" r="10.9" fill="url(#gr)"/><path d="M1227.40 717.90 L1231.60 717.90" stroke="#fff" stroke-width="1.0"/><path d="M1228.45 716.08 L1230.55 719.72" stroke="#fff" stroke-width="1.0"/><path d="M1230.55 716.08 L1228.45 719.72" stroke="#fff" stroke-width="1.0"/><path d="M1221.10 724.20 L1227.90 724.20" stroke="#fff" stroke-width="1.25"/><path d="M1222.80 721.26 L1226.20 727.14" stroke="#fff" stroke-width="1.25"/><path d="M1226.20 721.26 L1222.80 727.14" stroke="#fff" stroke-width="1.25"/><path d="M1229.20 727.40 L1237.00 727.40" stroke="#fff" stroke-width="1.35"/><path d="M1231.15 724.02 L1235.05 730.78" stroke="#fff" stroke-width="1.35"/><path d="M1235.05 724.02 L1231.15 730.78" stroke="#fff" stroke-width="1.35"/></g>
<g filter="url(#sh)"><circle cx="1365" cy="694" r="12" fill="#fbfbf8"/><circle cx="1365" cy="694" r="10.9" fill="url(#gg)"/><path d="M1363.40 687.90 L1367.60 687.90" stroke="#fff" stroke-width="1.0"/><path d="M1364.45 686.08 L1366.55 689.72" stroke="#fff" stroke-width="1.0"/><path d="M1366.55 686.08 L1364.45 689.72" stroke="#fff" stroke-width="1.0"/><path d="M1357.10 694.20 L1363.90 694.20" stroke="#fff" stroke-width="1.25"/><path d="M1358.80 691.26 L1362.20 697.14" stroke="#fff" stroke-width="1.25"/><path d="M1362.20 691.26 L1358.80 697.14" stroke="#fff" stroke-width="1.25"/><path d="M1365.20 697.40 L1373.00 697.40" stroke="#fff" stroke-width="1.35"/><path d="M1367.15 694.02 L1371.05 700.78" stroke="#fff" stroke-width="1.35"/><path d="M1371.05 694.02 L1367.15 700.78" stroke="#fff" stroke-width="1.35"/></g>
<g filter="url(#sh)"><circle cx="1504" cy="759" r="12" fill="#fbfbf8"/><circle cx="1504" cy="759" r="10.9" fill="url(#gp)"/><path d="M1500.40 755.90 C1501.57 759.38 1503.75 761.01 1503.75 762.85 A3.35 3.35 0 0 1 1497.05 762.85 C1497.05 761.01 1499.23 759.38 1500.40 755.90 Z" fill="#fff"/><path d="M1508.60 756.60 C1509.44 759.05 1511.00 760.18 1511.00 761.50 A2.40 2.40 0 0 1 1506.20 761.50 C1506.20 760.18 1507.76 759.05 1508.60 756.60 Z" fill="#fff"/><path d="M1504.80 750.40 C1505.39 752.30 1506.50 753.27 1506.50 754.20 A1.70 1.70 0 0 1 1503.10 754.20 C1503.10 753.27 1504.20 752.30 1504.80 750.40 Z" fill="#fff"/></g>
<circle cx="1412" cy="702" r="30" fill="#fccc00"/>
<circle cx="1412" cy="702" r="13" fill="#fff"/><circle cx="1412" cy="702" r="11.8" fill="url(#gp)"/><path d="M1408.22 698.75 C1409.45 702.39 1411.74 704.11 1411.74 706.04 A3.52 3.52 0 0 1 1404.70 706.04 C1404.70 704.11 1406.99 702.39 1408.22 698.75 Z" fill="#fff"/><path d="M1416.83 699.48 C1417.71 702.05 1419.35 703.24 1419.35 704.62 A2.52 2.52 0 0 1 1414.31 704.62 C1414.31 703.24 1415.95 702.05 1416.83 699.48 Z" fill="#fff"/><path d="M1412.84 692.97 C1413.46 694.97 1414.62 695.98 1414.62 696.96 A1.78 1.78 0 0 1 1411.05 696.96 C1411.05 695.98 1412.22 694.97 1412.84 692.97 Z" fill="#fff"/>
<text x="55" y="951" dominant-baseline="central" font-family="Liberation Sans" font-weight="bold" font-size="17" fill="#fff" stroke="#9a9a9a" stroke-width="1.6" paint-order="stroke" textLength="62" lengthAdjust="spacingAndGlyphs">Google</text>
</svg>
</div>

<!-- ===== SIDEBAR ===== -->
<div class="a" style="left:0;top:135px;width:47px;height:1065px;background:#333;z-index:4;box-shadow:1px 0 3px rgba(0,0,0,.5)"></div>
<div class="a" style="left:47px;top:135px;width:1px;height:1065px;background:#555;z-index:4"></div>
<svg class="a" style="left:0;top:135px;z-index:4" width="47" height="150" viewBox="0 135 47 150">
 <g fill="none" stroke="#aaa" stroke-width="1.6">
  <path d="M10.5 162.5 a11 11 0 0 1 18 0"/>
  <path d="M13 166 a7 7 0 0 1 13 0"/>
  <path d="M13.5 213.5 a11 11 0 0 1 18 0"/>
  <path d="M16 217 a7 7 0 0 1 13 0"/>
 </g>
 <circle cx="19.5" cy="168.5" r="3" fill="#aaa"/><rect x="18.6" y="169" width="2" height="6" fill="#aaa"/>
 <path d="M27.5 170.5 a3.3 3.3 0 0 1 6.6 0 v2 h-1.6 v-2 a1.7 1.7 0 0 0 -3.4 0 v2 h-1.6z" fill="#aaa"/><rect x="26" y="172.5" width="10" height="7" rx="1" fill="#aaa"/><circle cx="31" cy="176" r="1" fill="#333"/>
 <circle cx="22.5" cy="219.5" r="3" fill="#aaa"/><rect x="21.6" y="220" width="2" height="7" fill="#aaa"/>
 <g stroke="#aaa" stroke-width="1.5"><path d="M23 256 v3.5 M23 261.5 v3.5 M14.2 258.2 l1.6 2.2 M16.8 261.8 l1.6 2.2 M31.8 258.2 l-1.6 2.2 M29.2 261.8 l-1.6 2.2"/></g>
 <path d="M16.3 271.8 C17 268.5 20 267.2 23 267.2 C26 267.2 29 268.5 29.7 271.8 z" fill="#aaa"/>
</svg>

<!-- ===== POPUP ===== -->
<div class="a" style="left:1328px;top:436px;width:168px;height:242px;background:#000;z-index:3">
 <div class="a t" style="left:35.5px;top:23px;font-size:16px;font-weight:bold;color:#fff;transform-origin:left top;transform:scaleX(1.0)">Vennes M/12</div>
 <div class="a" style="left:76px;top:53px;width:16px;height:16px;border-radius:3px;background:#2d2d2d"></div>
 <svg class="a" style="left:78px;top:55px" width="12" height="12" viewBox="0 0 12 12"><path d="M6 1.2 l1.45 3.1 l3.35 .35 l-2.5 2.25 l.72 3.35 l-3.02 -1.75 l-3.02 1.75 l.72 -3.35 l-2.5 -2.25 l3.35 -.35z" fill="#666"/></svg>
 <svg class="a" style="left:0;top:88px" width="168" height="110" viewBox="1328 524 168 110">
  <circle cx="1344" cy="538.8" r="11" fill="#00aeef"/>
  <circle cx="1371" cy="538.8" r="11" fill="#ff3300"/>
  <circle cx="1398.2" cy="538.8" r="11" fill="#ff66cc"/>
  <circle cx="1425.6" cy="538.8" r="11" fill="#262626"/>
  <circle cx="1453" cy="538.8" r="11" fill="#008fb5"/>
  <circle cx="1480.4" cy="538.8" r="11" fill="#262626"/>
  <g font-family="Liberation Sans" font-size="11.5" text-anchor="middle" dominant-baseline="central">
   <text x="1344" y="539.3" fill="#fff">1</text><text x="1371" y="539.3" fill="#fff">2</text><text x="1398.2" y="539.3" fill="#fff">3</text>
   <text x="1425.6" y="539.3" fill="#5a5a5a">D</text><text x="1453" y="539.3" fill="#fff">S</text><text x="1480.4" y="539.3" fill="#5a5a5a">M</text>
  </g>
  <g fill="#1ab2ea">
   <path d="M1385 576 C1386.5 579 1390 582 1390 585.2 A5 5 0 0 1 1380 585.2 C1380 582 1383.5 579 1385 576Z"/>
   <path d="M1391 568.3 C1392 570.3 1393.6 572 1393.6 573.6 A2.6 2.6 0 0 1 1388.4 573.6 C1388.4 572 1390 570.3 1391 568.3Z"/>
   <path d="M1396.3 576.5 C1397.5 579 1399.8 580.8 1399.8 582.8 A3.5 3.5 0 0 1 1392.8 582.8 C1392.8 580.8 1395 579 1396.3 576.5Z"/>
  </g>
  <g fill="none" stroke="#1ab2ea" stroke-width="3">
   <path d="M1422 568 C1427 564 1432 564 1434.5 566.5 C1437 569 1442 569 1447 567"/>
   <path d="M1422 575.5 C1427 571.5 1432 571.5 1434.5 574 C1437 576.5 1442 576.5 1447 574.5"/>
   <path d="M1422 583 C1427 579 1432 579 1434.5 581.5 C1437 584 1442 584 1447 582"/>
   <path d="M1422 590.5 C1427 586.5 1432 586.5 1434.5 589 C1437 591.5 1442 591.5 1447 589.5"/>
  </g>
 </svg>
 <div class="a" style="left:0;top:0;width:168px;height:242px;font-size:12px;font-weight:bold;line-height:14px">
  <div class="a t" style="left:15px;top:176px;color:#fff;transform-origin:left top;transform:scaleX(0.98)">AT:</div>
  <div class="a t" style="left:47.5px;top:176px;color:#ffcc00;transform-origin:left top;transform:scaleX(0.965)">1.8 °C</div>
  <div class="a t" style="left:88px;top:176px;color:#fff;transform-origin:left top;transform:scaleX(0.93)">GT:</div>
  <div class="a t" style="left:115.5px;top:176px;color:#ffcc00;transform-origin:left top;transform:scaleX(1.0)">-0.2 °C</div>
  <div class="a t" style="left:15px;top:199px;color:#fff;transform-origin:left top;transform:scaleX(0.95)">FPT:</div>
  <div class="a t" style="left:47px;top:199px;color:#ffcc00;transform-origin:left top;transform:scaleX(0.985)">0.0 °C</div>
  <div class="a t" style="left:88px;top:199px;color:#fff;transform-origin:left top;transform:scaleX(0.87)">RH:</div>
  <div class="a t" style="left:132px;top:199px;color:#ffcc00;transform-origin:left top;transform:scaleX(1.0)">N/A</div>
 </div>
</div>

<!-- ===== MAP OVERLAYS ===== -->
<div class="a" style="left:1587px;top:145px;width:320px;height:47px;background:#fff;box-shadow:0 1px 3px rgba(0,0,0,.35);z-index:2"></div>
<div class="a t" style="left:1603px;top:161px;font-size:13px;font-weight:bold;color:#6f6f6f;z-index:2;transform-origin:left top;transform:scaleX(0.876);">Search</div>
<div class="a" style="left:1864px;top:149px;width:39px;height:39px;background:#f7c92c;z-index:2"></div>
<svg class="a" style="left:1872px;top:157px;z-index:2" width="24" height="24" viewBox="0 0 24 24"><circle cx="9.5" cy="9.5" r="6" fill="none" stroke="#111" stroke-width="2.4"/><path d="M13.8 13.8 L20 20" stroke="#111" stroke-width="2.8"/></svg>
<div class="a" style="left:1862px;top:800px;width:45px;height:90px;background:#fff;box-shadow:0 1px 3px rgba(0,0,0,.3);z-index:2"></div>
<div class="a" style="left:1867px;top:805px;width:35px;height:39px;background:#f7c92c;z-index:2"></div>
<div class="a" style="left:1867px;top:846px;width:35px;height:39px;background:#f7c92c;z-index:2"></div>
<svg class="a" style="left:1867px;top:805px;z-index:2" width="35" height="80" viewBox="0 0 35 80"><path d="M17.5 12.5 V26.5 M10.5 19.5 H24.5" stroke="#111" stroke-width="2"/><path d="M10.5 60 H24.5" stroke="#111" stroke-width="2.2"/></svg>
<div class="a" style="left:1862px;top:896px;width:45px;height:45px;background:#fff;box-shadow:0 1px 3px rgba(0,0,0,.3);z-index:2"></div>
<div class="a" style="left:1867px;top:901px;width:35px;height:35px;background:#f7c92c;z-index:2"></div>
<svg class="a" style="left:1867px;top:901px;z-index:2" width="35" height="35" viewBox="0 0 35 35"><path d="M17.5 8.5 L26 15 L17.5 21.5 L9 15 Z" fill="#111"/><path d="M9 19 L17.5 25.5 L26 19" fill="none" stroke="#111" stroke-width="2"/></svg>
<div class="a" style="left:1450px;top:952px;width:470px;height:13px;background:rgba(245,245,245,.7);z-index:2"></div>
<div class="a t" style="left:1455px;top:953px;font-size:10.5px;line-height:12px;color:#444;z-index:2;transform-origin:left top;transform:scaleX(0.947)">Données cartographiques ©2016 Google</div><div class="a t" style="left:1648px;top:953px;font-size:10.5px;line-height:12px;color:#444;z-index:2;transform-origin:left top;transform:scaleX(0.96)">Conditions d'utilisation</div><div class="a t" style="left:1760.5px;top:953px;font-size:10.5px;line-height:12px;color:#444;z-index:2;transform-origin:left top;transform:scaleX(0.94)">Signaler une erreur cartographique</div>
<!-- header shadow over map -->
<div class="a" style="left:48px;top:135px;width:1872px;height:7px;background:linear-gradient(rgba(0,0,0,.22),rgba(0,0,0,0));z-index:2"></div>

<!-- ===== 0.92OM PANEL ===== -->
<div class="a" style="left:48px;top:965px;width:1872px;height:235px;background:#222;z-index:3;overflow:hidden">
 <div class="a" style="left:0;top:0;width:1872px;height:40px;background:#000"></div>
 <div class="a" style="left:0;top:40px;width:1872px;height:1px;background:#f0b400"></div>
 <div class="a" style="left:0;top:41px;width:164px;height:194px;background:#000"></div>
 <div class="a" style="left:164px;top:41px;width:1px;height:194px;background:#3a3a3a"></div>
</div>
<div class="a" style="left:0;top:965px;width:1920px;height:235px;z-index:4">
 <div class="a t" style="left:76px;top:10px;font-size:17px;font-weight:bold;color:#fff;transform-origin:left top;transform:scaleX(0.97)">Vennes M/12</div>
 <div class="a" style="left:189px;top:12px;width:15px;height:16px;border-radius:4px;background:#262626"></div>
 <div class="a" style="left:210px;top:12px;width:15px;height:16px;border-radius:4px;background:#262626"></div>
 <div class="a" style="left:231px;top:12px;width:15px;height:16px;border-radius:4px;background:#5a5a5a"></div>
 <svg class="a" style="left:189px;top:12px" width="60" height="16" viewBox="0 0 60 16">
  <path d="M7.5 3.2 l1.3 2.9 l3.1 .3 l-2.35 2.1 l.67 3.1 l-2.72 -1.6 l-2.72 1.6 l.67 -3.1 l-2.35 -2.1 l3.1 -.3z" fill="#5a5a5a"/>
  <circle cx="28.5" cy="8.2" r="4.2" fill="none" stroke="#5a5a5a" stroke-width="1"/><circle cx="28.5" cy="8.2" r="2" fill="#5a5a5a"/>
  <path d="M28.5 2.5 v1.5 M28.5 12.5 v1.5 M22.8 8.2 h1.5 M32.7 8.2 h1.5" stroke="#5a5a5a" stroke-width="1"/>
  <rect x="48.8" y="3" width="1.5" height="2" fill="#262626"/><rect x="48.8" y="6.5" width="1.5" height="6.5" fill="#262626"/>
 </svg>
 <div class="a t" style="left:1709px;top:12px;font-size:13px;font-weight:bold;color:#fff;transform-origin:left top;transform:scaleX(0.94)">Fr. 02/12/2016 6:12 PM</div>
 <div class="a" style="left:1859px;top:974px;"></div>
 <div class="a" style="left:1859px;top:9px;width:22px;height:22px;border-radius:4px;background:#555"></div>
 <div class="a" style="left:1889px;top:9px;width:22px;height:22px;border-radius:4px;background:#555"></div>
 <svg class="a" style="left:1859px;top:9px" width="52" height="22" viewBox="0 0 52 22">
  <rect x="5.5" y="7" width="2" height="10" fill="#222"/><rect x="10" y="4" width="2" height="13" fill="#222"/><rect x="14.5" y="10" width="2" height="7" fill="#222"/>
  <path d="M35 5 L47 17 M47 5 L35 17" stroke="#1a1a1a" stroke-width="1.8"/>
 </svg>

 <!-- left icons -->
 <svg class="a" style="left:48px;top:41px" width="164" height="194" viewBox="48 1006 164 194">
  <circle cx="81" cy="1034" r="11" fill="#00aeef"/><circle cx="110.5" cy="1034" r="11" fill="#ff3300"/><circle cx="140" cy="1034" r="11" fill="#ff66cc"/>
  <circle cx="81" cy="1059" r="11" fill="#222"/><circle cx="110.5" cy="1059" r="11" fill="#008fb5"/><circle cx="140" cy="1059" r="11" fill="#222"/>
  <g font-family="Liberation Sans" font-size="11.5" text-anchor="middle" dominant-baseline="central">
   <text x="81" y="1034.5" fill="#fff">1</text><text x="110.5" y="1034.5" fill="#fff">2</text><text x="140" y="1034.5" fill="#fff">3</text>
   <text x="81" y="1059.5" fill="#555">D</text><text x="110.5" y="1059.5" fill="#fff">S</text><text x="140" y="1059.5" fill="#555">M</text>
  </g>
  <rect x="182" y="1023" width="21.5" height="22" rx="4" fill="#ffcc00"/>
  <path d="M186 1039 L191 1033.5 L195 1036.5 L200 1030.5" fill="none" stroke="#111" stroke-width="1.8"/><path d="M196.5 1029.5 L201 1029 L200.6 1033.5 Z" fill="#111"/>
  <rect x="182" y="1055" width="21.5" height="22" rx="4" fill="#555"/>
  <path d="M186 1061 h13.5 M186 1065 h13.5 M186 1069 h13.5" stroke="#cfcfcf" stroke-width="1.8"/><path d="M186 1061 h1.5 M186 1065 h1.5 M186 1069 h1.5" stroke="#555" stroke-width="1.8"/>
  <g fill="#1ab2ea">
   <path d="M82 1097 C83.6 1100.5 87.2 1103.5 87.2 1107 A5.2 5.2 0 0 1 76.8 1107 C76.8 1103.5 80.4 1100.5 82 1097Z"/>
   <path d="M88 1092 C89 1094 90.6 1095.6 90.6 1097.4 A2.6 2.6 0 0 1 85.4 1097.4 C85.4 1095.6 87 1094 88 1092Z"/>
   <path d="M93.5 1099.5 C94.7 1102 97 1103.8 97 1105.8 A3.5 3.5 0 0 1 90 1105.8 C90 1103.8 92.3 1102 93.5 1099.5Z"/>
  </g>
  <g fill="none" stroke="#1ab2ea" stroke-width="3.2">
   <path d="M122 1092 C127 1088 133 1088 135.5 1090.5 C138 1093 143 1093 148 1091"/>
   <path d="M122 1100 C127 1096 133 1096 135.5 1098.5 C138 1101 143 1101 148 1099"/>
   <path d="M122 1108 C127 1104 133 1104 135.5 1106.5 C138 1109 143 1109 148 1107"/>
   <path d="M122 1116 C127 1112 133 1112 135.5 1114.5 C138 1117 143 1117 148 1115"/>
  </g>
 </svg>
 <svg class="a" style="left:0;top:0" width="1920" height="235" viewBox="0 965 1920 235">
<line x1="271.7" y1="1026" x2="271.7" y2="1172" stroke="#555" stroke-width="1.6" stroke-dasharray="1.6 4.4"/>
<line x1="307.5" y1="1026" x2="307.5" y2="1172" stroke="#555" stroke-width="1.6" stroke-dasharray="1.6 4.4"/>
<line x1="343.2" y1="1026" x2="343.2" y2="1172" stroke="#555" stroke-width="1.6" stroke-dasharray="1.6 4.4"/>
<line x1="379.0" y1="1026" x2="379.0" y2="1172" stroke="#555" stroke-width="1.6" stroke-dasharray="1.6 4.4"/>
<line x1="414.8" y1="1026" x2="414.8" y2="1172" stroke="#555" stroke-width="1.6" stroke-dasharray="1.6 4.4"/>
<line x1="450.6" y1="1026" x2="450.6" y2="1172" stroke="#555" stroke-width="1.6" stroke-dasharray="1.6 4.4"/>
<line x1="486.3" y1="1026" x2="486.3" y2="1172" stroke="#555" stroke-width="1.6" stroke-dasharray="1.6 4.4"/>
<line x1="522.1" y1="1026" x2="522.1" y2="1172" stroke="#555" stroke-width="1.6" stroke-dasharray="1.6 4.4"/>
<line x1="557.9" y1="1026" x2="557.9" y2="1172" stroke="#555" stroke-width="1.6" stroke-dasharray="1.6 4.4"/>
<rect x="265" y="1023" width="302" height="2.2" fill="#6a6a6a"/>
<rect x="265" y="1040" width="302" height="2.2" fill="#6a6a6a"/>
<rect x="265" y="1092" width="302" height="2.2" fill="#6a6a6a"/>
<rect x="265" y="1173" width="302" height="2.2" fill="#6a6a6a"/>
<rect x="265" y="1028" width="104" height="6" fill="#ff66cc"/><rect x="369" y="1028" width="41" height="6" fill="#00aeef"/><rect x="410" y="1028" width="28" height="6" fill="#ff3300"/><rect x="438" y="1028" width="129" height="6" fill="#ff66cc"/>
<rect x="265" y="1052.7" width="28" height="9.3" fill="#ffffff"/>
<rect x="294" y="1048" width="28" height="14.0" fill="#ffffff"/>
<rect x="323" y="1052.7" width="56" height="9.3" fill="#ffffff"/>
<rect x="380" y="1052.7" width="13" height="9.3" fill="#1eaee8"/>
<rect x="394" y="1052.7" width="28" height="9.3" fill="#ffffff"/>
<rect x="423" y="1057" width="14" height="5.0" fill="#1eaee8"/>
<rect x="481" y="1057" width="13" height="5.0" fill="#1eaee8"/>
<rect x="538" y="1052.7" width="28" height="9.3" fill="#ffffff"/>
<rect x="567" y="1048" width="2" height="14.0" fill="#1eaee8"/>
<rect x="265" y="1073.3" width="28" height="10.7" fill="#1eaee8"/>
<rect x="294" y="1070" width="28" height="14.0" fill="#1eaee8"/>
<rect x="323" y="1073.3" width="99" height="10.7" fill="#1eaee8"/>
<rect x="423" y="1077" width="14" height="7.0" fill="#1eaee8"/>
<rect x="438" y="1080.4" width="41" height="3.6" fill="#1eaee8"/>
<rect x="481" y="1077" width="13" height="7.0" fill="#1eaee8"/>
<rect x="495" y="1080.4" width="42" height="3.6" fill="#1eaee8"/>
<rect x="538" y="1073.3" width="28" height="10.7" fill="#1eaee8"/>
<rect x="567" y="1070" width="2" height="14.0" fill="#1eaee8"/>
<path d="M265 1129.5 L300 1129.3 L340 1130.3 L380 1130 L410 1129.6 L440 1130.2 L470 1130 L500 1129.2 L530 1129.5 L567 1130" fill="none" stroke="#6a7fe0" stroke-width="1.6"/>
<path d="M265 1132.5 L340 1132.3 L360 1133.3 L400 1133 L425 1132.6 L440 1132.3 L567 1132.3" fill="none" stroke="#e0504a" stroke-width="1.4"/>
<path d="M265 1132.2 L378 1132.2 L393 1137.2 L408 1135 L423 1134.8 L437 1132.2 L567 1132.2" fill="none" stroke="#f5b51a" stroke-width="1.6"/>
<g font-family="Liberation Sans" fill="#fff">
<text x="236.5" y="1030.5" dominant-baseline="central" font-size="13" textLength="17.5" lengthAdjust="spacingAndGlyphs">1-3</text>
<text x="236" y="1131.5" dominant-baseline="central" font-size="13" textLength="20.5" lengthAdjust="spacingAndGlyphs">0°C</text>
<text x="576" y="1131.5" dominant-baseline="central" font-size="13" textLength="16.5" lengthAdjust="spacingAndGlyphs">0%</text>
<text x="378.75" y="1189" text-anchor="middle" dominant-baseline="central" font-size="13" font-weight="bold" textLength="31" lengthAdjust="spacingAndGlyphs">17:00</text>
<text x="450.6" y="1189" text-anchor="middle" dominant-baseline="central" font-size="13" font-weight="bold" textLength="31" lengthAdjust="spacingAndGlyphs">17:30</text>
<text x="521.7" y="1189" text-anchor="middle" dominant-baseline="central" font-size="13" font-weight="bold" textLength="31" lengthAdjust="spacingAndGlyphs">18:00</text>
</g>
<path d="M242.5 1052.5 C243.5 1055 245.6 1056.5 245.6 1058.2 A3.1 3.1 0 0 1 239.4 1058.2 C239.4 1056.5 241.5 1055 242.5 1052.5Z" fill="#ddd"/>
<path d="M249 1048 V1055 M246 1049.8 L252 1053.2 M252 1049.8 L246 1053.2" stroke="#ddd" stroke-width="1.4"/>
<path d="M237.5 1071.5 C240 1069.5 242 1069.5 243.5 1070.5 C245 1071.5 247 1071.5 249.5 1070.0" fill="none" stroke="#ddd" stroke-width="1.5"/>
<path d="M237.5 1075.2 C240 1073.2 242 1073.2 243.5 1074.2 C245 1075.2 247 1075.2 249.5 1073.7" fill="none" stroke="#ddd" stroke-width="1.5"/>
<path d="M237.5 1078.9 C240 1076.9 242 1076.9 243.5 1077.9 C245 1078.9 247 1078.9 249.5 1077.4" fill="none" stroke="#ddd" stroke-width="1.5"/>
<path d="M237.5 1082.6 C240 1080.6 242 1080.6 243.5 1081.6 C245 1082.6 247 1082.6 249.5 1081.1" fill="none" stroke="#ddd" stroke-width="1.5"/>
<rect x="624" y="1023" width="1" height="158" fill="#555"/>
<g font-family="Liberation Sans" font-size="12.5">
<text x="692" y="1034.5" text-anchor="end" dominant-baseline="central" fill="#c8c8c8">AL:</text>
<text x="702" y="1034.5" dominant-baseline="central" fill="#fff" font-weight="bold">1 2 3</text>
<text x="692" y="1056.5" text-anchor="end" dominant-baseline="central" fill="#c8c8c8">PT:</text>
<text x="714" y="1056.5" dominant-baseline="central" fill="#fff" font-weight="bold">3/3</text>
<text x="692" y="1078.5" text-anchor="end" dominant-baseline="central" fill="#c8c8c8">WF:</text>
<text x="702" y="1078.5" dominant-baseline="central" fill="#fff" font-weight="bold">4/4</text>
<text x="692" y="1100.5" text-anchor="end" dominant-baseline="central" fill="#7186f2">AT:</text>
<text x="702" y="1100.5" dominant-baseline="central" fill="#fff" font-weight="bold">1.7 °C</text>
<text x="692" y="1122.5" text-anchor="end" dominant-baseline="central" fill="#f05555">GT:</text>
<text x="702" y="1122.5" dominant-baseline="central" fill="#fff" font-weight="bold">-0.2 °C</text>
<text x="692" y="1144.5" text-anchor="end" dominant-baseline="central" fill="#f7c21e">FPT:</text>
<text x="702" y="1144.5" dominant-baseline="central" fill="#fff" font-weight="bold">0.0 °C</text>
<text x="692" y="1166.5" text-anchor="end" dominant-baseline="central" fill="#3ec46a">RH:</text>
</g>
<path d="M707 1052 C708 1054.5 710 1056 710 1058 A3 3 0 0 1 704 1058 C704 1056 706 1054.5 707 1052Z" fill="#bbb"/>
<rect x="703" y="1166" width="5" height="1" fill="#555"/>
</svg>
</div>
<!-- status bar tooltip -->
<div class="a t" style="left:0;top:1181px;width:349px;height:19px;background:#f1f1f1;border:1px solid #c7c7c7;border-left:none;border-bottom:none;border-radius:0 3px 0 0;font-size:12px;line-height:18px;color:#333;padding-left:4px;z-index:6">https://vision.borrma.info/vision/#/station-details/041021001029/</div>

</body></html>
